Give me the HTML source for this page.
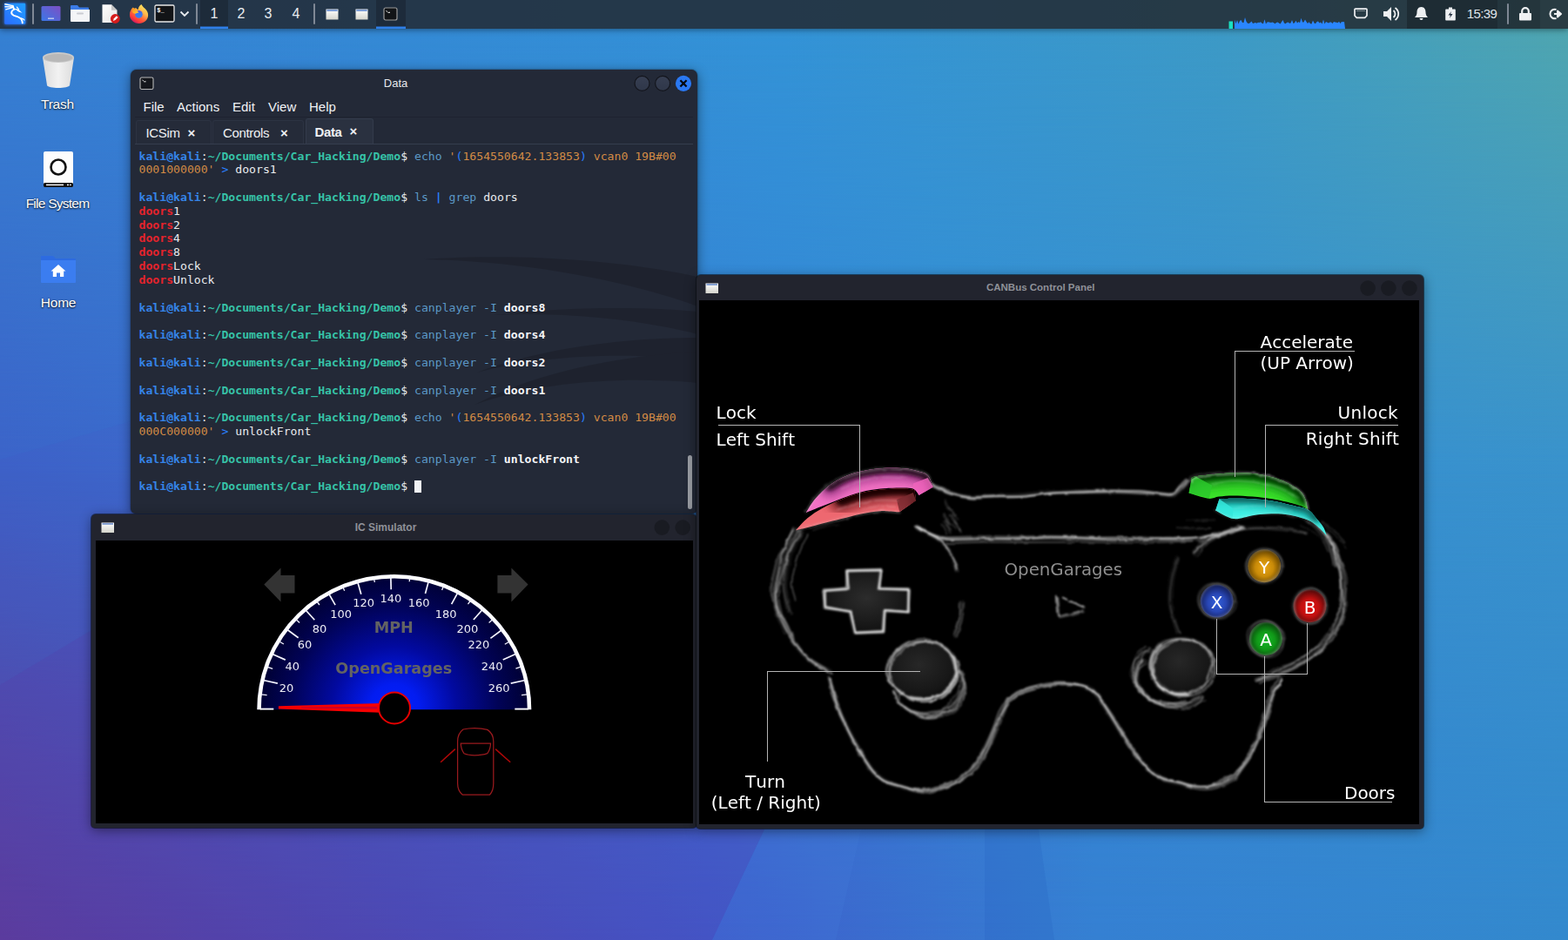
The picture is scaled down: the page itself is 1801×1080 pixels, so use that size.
<!DOCTYPE html>
<html lang="en"><head><meta charset="utf-8"><title>Kali desktop</title>
<style>
html,body{margin:0;padding:0;}
body{width:1801px;height:1080px;overflow:hidden;position:relative;background:#3a7fd0;font-family:"Liberation Sans","DejaVu Sans",sans-serif;}
.abs{position:absolute;}

#wall{position:absolute;left:0;top:0;width:1801px;height:1080px;}
#panel{position:absolute;left:0;top:0;width:1801px;height:33px;background:rgba(33,36,43,0.82);box-shadow:0 1px 7px rgba(0,0,0,.45);}
#panel .sep{position:absolute;top:4px;width:2px;height:24px;background:#7f8895;border-radius:1px;}
#panel .ws{position:absolute;top:0;height:33px;width:32px;color:#e8ecf0;font-size:16px;line-height:32px;text-align:center;}
#panel .act{background:rgba(10,14,22,0.28);box-shadow:inset 0 -2.5px 0 #2f7fe8;}
.dicon{position:absolute;width:130px;text-align:center;color:#fff;font-size:15.5px;letter-spacing:-0.2px;text-shadow:0 1px 2px rgba(0,0,0,.8),0 0 2px rgba(0,0,0,.5);}

#term{position:absolute;left:150px;top:80px;width:651px;height:510px;background:#232937;border-radius:7px 7px 6px 6px;box-shadow:0 3px 14px rgba(0,0,0,.45),0 0 2px rgba(0,0,0,.6);overflow:hidden;}
#term .title{position:absolute;left:0;top:0;width:609px;height:31px;line-height:31px;text-align:center;color:#e6e8ec;font-size:13px;}
#term .menu{position:absolute;top:33px;height:20px;line-height:20px;color:#f0f2f5;font-size:15px;}
#term .tab{position:absolute;top:58px;height:27px;background:#252b39;border:1px solid #2c3342;border-bottom:none;border-radius:3px 3px 0 0;box-sizing:border-box;color:#eef0f3;font-size:15px;letter-spacing:-0.35px;line-height:27px;}
#term .tab.on{top:56px;height:30px;background:#2a3140;border-color:#333b4b;font-weight:bold;font-size:15px;line-height:29px;}
#term .tab span{position:absolute;top:0;}
#term .tx{position:absolute;top:-1px;font-weight:bold;font-size:15px;}
#tt{position:absolute;left:9.5px;top:0;font-family:"DejaVu Sans Mono","Liberation Mono",monospace;font-size:13.15px;color:#e9ebee;white-space:pre;}
#tt div{position:absolute;left:0;height:16px;line-height:16px;}
#tt b{font-weight:bold;}
.cu{color:#3584e8;font-weight:bold}.cp{color:#36c3a7;font-weight:bold}.cc{color:#5b98c6}.cb{color:#2a7fff}.co{color:#d28b45}.cr{color:#e3232c;font-weight:bold}.cw{color:#f4f5f7;font-weight:bold}

.xwin{position:absolute;background:#22242e;border-radius:5px 5px 4px 4px;box-shadow:0 3px 14px rgba(0,0,0,.45),0 0 0 1px rgba(10,12,18,.55);}
.xwin .xt{position:absolute;left:0;top:0;width:100%;text-align:center;color:#8f9198;font-weight:bold;font-size:12px;}

#canlab text{font-family:"DejaVu Sans","Liberation Sans",sans-serif;font-size:20px;fill:#fff;font-kerning:none;}

</style></head><body>

<svg id="wall" viewBox="0 0 1801 1080" preserveAspectRatio="none">
<defs>
<linearGradient id="wg1" x1="0" y1="0" x2="1" y2="0">
<stop offset="0" stop-color="#3581d3"/><stop offset="0.5" stop-color="#3393d7"/><stop offset="0.78" stop-color="#3d9ac6"/><stop offset="1" stop-color="#4fa6b0"/>
</linearGradient>
<linearGradient id="wgm" x1="0" y1="0" x2="1" y2="0">
<stop offset="0" stop-color="#3c63c8"/><stop offset="0.35" stop-color="#367ad4"/><stop offset="0.6" stop-color="#338cd6"/><stop offset="1" stop-color="#3992cc"/>
</linearGradient>
<linearGradient id="wg2" x1="0" y1="0" x2="1" y2="0">
<stop offset="0" stop-color="#5c3e9b"/><stop offset="0.25" stop-color="#4a4eb6"/><stop offset="0.45" stop-color="#3f5ccb"/><stop offset="0.7" stop-color="#3580d2"/><stop offset="1" stop-color="#3389cd"/>
</linearGradient>
<linearGradient id="wm1" x1="0" y1="0" x2="0" y2="1">
<stop offset="0.03" stop-color="#fff" stop-opacity="0"/><stop offset="0.5" stop-color="#fff" stop-opacity="1"/><stop offset="1" stop-color="#fff" stop-opacity="1"/>
</linearGradient>
<linearGradient id="wm2" x1="0" y1="0" x2="0" y2="1">
<stop offset="0.5" stop-color="#fff" stop-opacity="0"/><stop offset="0.75" stop-color="#fff" stop-opacity="0.55"/><stop offset="1" stop-color="#fff" stop-opacity="1"/>
</linearGradient>
<mask id="wmask1"><rect width="1801" height="1080" fill="url(#wm1)"/></mask>
<mask id="wmask2"><rect width="1801" height="1080" fill="url(#wm2)"/></mask>
</defs>
<rect width="1801" height="1080" fill="url(#wg1)"/>
<rect width="1801" height="1080" fill="url(#wgm)" mask="url(#wmask1)"/>
<rect width="1801" height="1080" fill="url(#wg2)" mask="url(#wmask2)"/>
<polygon points="0,528 160,481 160,691 0,787" fill="#4a4cc4" opacity="0.10"/>
<polygon points="0,787 105,724 878,953 818,1080 0,1080" fill="#5a34a8" opacity="0.20"/>
<polygon points="878,953 989,953 960,1080 818,1080" fill="#4a90f0" opacity="0.10"/>
<polygon points="1131,953 1193,953 1211,1080 1131,1080" fill="#1a50b0" opacity="0.13"/>
</svg>

<div id="panel"><svg class="abs" style="left:0;top:0" width="36" height="33" viewBox="0 0 36 33">
<defs><linearGradient id="kg" x1="1" y1="0" x2="0" y2="1"><stop offset="0" stop-color="#1f9fff"/><stop offset="1" stop-color="#2a6cff"/></linearGradient>
<filter id="kglow" x="-30%" y="-30%" width="160%" height="160%"><feGaussianBlur stdDeviation="1.6"/></filter></defs>
<rect x="4.500" y="3" width="25.500" height="25.500" rx="2" fill="#2a78ff" opacity="0.75" filter="url(#kglow)"/>
<rect x="5.200" y="3.800" width="24" height="24" rx="1.200" fill="url(#kg)"/>
<g fill="none" stroke="#fff" stroke-linecap="round">
<path d="M14.800 6.800 C15.300 9 15.500 10 16.600 10.600 C12.800 12 11.800 15.800 15.600 17.600 C19.500 19.200 23.500 19.600 25 23 C25.700 24.800 25.800 26 25.800 26.400" stroke-width="1.900"/>
<path d="M5.800 4.800 L14.500 6.600 M6 7.700 L14.200 7.900 M6.800 10.900 L14.600 8.600" stroke-width="1.400"/>
<path d="M19.400 8.200 L21.600 10.800" stroke-width="1.300"/>
<path d="M24 20.800 C26 21.200 27.400 22 27.900 23" stroke-width="1.300"/>
</g>
<path d="M16.400 10 C19 9.600 21 10.400 22.600 12 C23.600 13 24.600 14 25.700 14.700 C23 14.600 20.500 13.400 18.800 11.600Z" fill="#fff"/>
</svg><div class="sep" style="left:36.9px"></div><svg class="abs" style="left:47px;top:6px" width="23" height="19" viewBox="0 0 23 19">
<defs><linearGradient id="dg" x1="0" y1="1" x2="1" y2="0"><stop offset="0" stop-color="#3a78e8"/><stop offset="1" stop-color="#7d4fc4"/></linearGradient></defs>
<rect x="0.5" y="1" width="22" height="17" rx="1.5" fill="url(#dg)"/><rect x="8" y="14.5" width="7" height="1.5" fill="#b9c4ee"/></svg><svg class="abs" style="left:80px;top:5px" width="24" height="21" viewBox="0 0 24 21">
<path d="M2 1 h7 l2 2.5 h10 a1 1 0 0 1 1 1 V8 H1 V2 a1 1 0 0 1 1-1z" fill="#3b7be6"/>
<path d="M1 6 h22 v13 a1 1 0 0 1 -1 1 H2 a1 1 0 0 1 -1 -1z" fill="#f4f5f7"/>
<rect x="8" y="9.5" width="8" height="2" rx="1" fill="#c9ccd2"/></svg><svg class="abs" style="left:115px;top:4px" width="24" height="24" viewBox="0 0 24 24">
<defs><linearGradient id="pg" x1="0" y1="0" x2="1" y2="1"><stop offset="0" stop-color="#ffffff"/><stop offset="1" stop-color="#e4e4e4"/></linearGradient></defs>
<path d="M2.500 1.300 h10.500 l6.500 6.500 v14.200 H2.500z" fill="url(#pg)"/><path d="M13 1.300 l6.500 6.500 h-6.500z" fill="#c4c4c4"/>
<circle cx="17.300" cy="17.500" r="5.400" fill="#d61c1c"/><path d="M14.900 19.900 l1 -2.600 3 -3 1.600 1.600 -3 3z" fill="#fff"/></svg><svg class="abs" style="left:144px;top:0" width="32" height="33" viewBox="144 0 32 33">
<defs><linearGradient id="fg" x1="0.85" y1="0.1" x2="0.3" y2="0.95"><stop offset="0" stop-color="#ffe45e"/><stop offset="0.35" stop-color="#ffb84a"/><stop offset="0.62" stop-color="#ff6a3c"/><stop offset="0.85" stop-color="#ff3a3c"/><stop offset="1" stop-color="#d4205c"/></linearGradient>
<linearGradient id="fh" x1="0" y1="0" x2="1" y2="1"><stop offset="0" stop-color="#ff8a1a"/><stop offset="1" stop-color="#ffd034"/></linearGradient>
<linearGradient id="fb" x1="0.5" y1="0" x2="0.5" y2="1"><stop offset="0" stop-color="#6a4ed0"/><stop offset="0.35" stop-color="#3a74f0"/><stop offset="1" stop-color="#3a80f0"/></linearGradient></defs>
<path d="M152.300 8.700 C153.300 8.600 153.800 9.300 154.300 9.900 C154.800 9.300 155.500 9 156.300 9.300 C156.800 10 157.500 10.800 158.600 11.300 C158.800 9 160 6.500 162.400 5 C163.300 7 164.800 8.200 166.500 9.800 C169.200 12.300 170.300 15 170.100 18 C169.600 23.300 165 27 159.500 27 C153.700 27 149 22.600 149 17 C149 13.600 150.300 10.800 152.300 8.700Z" fill="url(#fg)"/>
<circle cx="159.500" cy="16.400" r="4.300" fill="url(#fb)"/>
<path d="M152.300 9 C154 9.200 156 10.600 157.300 12 C158.200 13 158.800 13.800 159.400 14.400 C157.500 14.500 156.600 15.300 155.400 15.800 C153.800 15.800 152.600 15 152 13.800 C151.600 12 151.800 10.300 152.300 9Z" fill="url(#fh)"/>
</svg><svg class="abs" style="left:177px;top:5px" width="24" height="21" viewBox="0 0 24 21">
<rect x="1" y="1" width="22" height="19" rx="1.5" fill="#121417" stroke="#e8e8e8" stroke-width="1.3"/>
<text x="3.3" y="9.2" font-family="Liberation Mono, monospace" font-weight="bold" font-size="7" fill="#fff">$_</text></svg><svg class="abs" style="left:206px;top:12px" width="12" height="8" viewBox="0 0 12 8"><path d="M1.5 1.5 L6 6 L10.5 1.5" stroke="#e8ecf0" stroke-width="1.8" fill="none"/></svg><div class="sep" style="left:225px"></div><div class="ws act" style="left:230px">1</div><div class="ws" style="left:261px">2</div><div class="ws" style="left:292px">3</div><div class="ws" style="left:324px">4</div><div class="sep" style="left:359.5px"></div><svg class="abs" style="left:373.5px;top:10px" width="15" height="13" viewBox="0 0 15 13"><defs><linearGradient id="wi373" x1="0" y1="0" x2="0" y2="1"><stop offset="0" stop-color="#ffffff"/><stop offset="1" stop-color="#d6d6ce"/></linearGradient></defs><rect x="0.5" y="0.5" width="14" height="12" fill="url(#wi373)"/><rect x="1.300" y="1.300" width="12.400" height="1.400" fill="#4a78c8"/></svg><svg class="abs" style="left:407.5px;top:10px" width="15" height="13" viewBox="0 0 15 13"><defs><linearGradient id="wi407" x1="0" y1="0" x2="0" y2="1"><stop offset="0" stop-color="#ffffff"/><stop offset="1" stop-color="#d6d6ce"/></linearGradient></defs><rect x="0.5" y="0.5" width="14" height="12" fill="url(#wi407)"/><rect x="1.300" y="1.300" width="12.400" height="1.400" fill="#4a78c8"/></svg><div class="ws act" style="left:432px;width:34px"></div><svg class="abs" style="left:440px;top:8px" width="17" height="16" viewBox="0 0 17 16"><rect x="1" y="1" width="15" height="14" rx="2" fill="#121417" stroke="#9a9a9a" stroke-width="1.2"/><path d="M3.5 4.5 l1.5 1 M5.5 6.3 h2.5" stroke="#fff" stroke-width="1"/></svg><svg class="abs" style="left:0;top:0" width="1801" height="33"><rect x="1411.5" y="24.5" width="4.5" height="8.5" fill="#19e0c0"/><path d="M1418 33 L1418 22.6 L1419.5 27.3 L1421.0 23.1 L1422.5 27.4 L1424.0 24.1 L1425.5 23.0 L1427.0 25.9 L1428.5 26.1 L1430.0 20.1 L1431.5 24.8 L1433.0 26.7 L1434.5 27.0 L1436.0 25.9 L1437.5 24.4 L1439.0 27.0 L1440.5 26.4 L1442.0 26.0 L1443.5 26.8 L1445.0 25.8 L1446.5 26.1 L1448.0 25.3 L1449.5 26.8 L1451.0 27.2 L1452.5 22.2 L1454.0 27.4 L1455.5 25.6 L1457.0 25.3 L1458.5 25.8 L1460.0 26.1 L1461.5 25.4 L1463.0 26.3 L1464.5 27.3 L1466.0 25.9 L1467.5 25.4 L1469.0 26.5 L1470.5 27.4 L1472.0 25.3 L1473.5 23.1 L1475.0 26.5 L1476.5 27.3 L1478.0 26.1 L1479.5 25.5 L1481.0 26.8 L1482.5 26.6 L1484.0 22.9 L1485.5 26.9 L1487.0 26.3 L1488.5 23.7 L1490.0 26.6 L1491.5 25.1 L1493.0 26.2 L1494.5 20.7 L1496.0 25.6 L1497.5 25.5 L1499.0 22.5 L1500.5 25.0 L1502.0 27.1 L1503.5 25.3 L1505.0 27.2 L1506.5 27.4 L1508.0 23.5 L1509.5 26.6 L1511.0 27.2 L1512.5 25.0 L1514.0 24.4 L1515.5 26.6 L1517.0 25.4 L1518.5 27.4 L1520.0 22.5 L1521.5 27.4 L1523.0 25.1 L1524.5 25.8 L1526.0 26.6 L1527.5 25.6 L1529.0 25.6 L1530.5 26.9 L1532.0 25.0 L1533.5 25.5 L1535.0 25.7 L1536.5 26.2 L1538.0 24.8 L1539.5 26.9 L1541.0 25.1 L1542.5 25.2 L1544.0 25.1 L1545 33Z" fill="#2a86ff"/></svg><svg class="abs" style="left:1554px;top:8px" width="18" height="15" viewBox="0 0 18 15"><path d="M2.800 2.200 h12.400 a0.800 0.800 0 0 1 .8 .8 v7 l-2.300 2.300 h-9.400 l-2.300 -2.300 v-7 a.8 .8 0 0 1 .8 -.8z" fill="none" stroke="#eef0f2" stroke-width="1.700" stroke-linejoin="round"/><path d="M4.500 4.300 h9" stroke="#eef0f2" stroke-width="1" stroke-dasharray="1 1"/></svg><svg class="abs" style="left:1588px;top:7px" width="20" height="18" viewBox="0 0 20 18"><path d="M1 6 h4 l5 -5 v16 l-5 -5 h-4z" fill="#eef0f2"/><path d="M12.5 5 a5 5 0 0 1 0 8" stroke="#eef0f2" stroke-width="1.8" fill="none"/><path d="M14.5 2 a8.5 8.5 0 0 1 0 14" stroke="#eef0f2" stroke-width="1.8" fill="none"/></svg><div class="abs" style="left:1616px;top:0;width:104px;height:33px;background:rgba(8,12,20,0.32)"></div><div class="abs" style="left:1720px;top:0;width:49px;height:33px;background:rgba(8,12,20,0.14)"></div><svg class="abs" style="left:1624px;top:7px" width="17" height="17" viewBox="0 0 17 17"><path d="M8.5 1 C12 1 13.5 4 13.5 7 C13.5 10 14.5 11.5 16 13 H1 C2.5 11.5 3.5 10 3.5 7 C3.5 4 5 1 8.5 1Z" fill="#eef0f2"/><path d="M6.5 14 a2 2 0 0 0 4 0z" fill="#eef0f2"/></svg><svg class="abs" style="left:1660px;top:8px" width="12" height="16" viewBox="0 0 12 16"><path d="M4 0.5 h4 v2 h3 a0.8 0.8 0 0 1 .8 .8 v11.4 a.8 .8 0 0 1 -.8 .8 h-10 a.8 .8 0 0 1 -.8 -.8 V3.3 a.8 .8 0 0 1 .8 -.8 h3z" fill="#eef0f2"/><path d="M7 5 L3.5 9.5 H6 L5 13 L8.5 8 H6z" fill="#1f2b3b"/></svg><div class="abs" style="left:1683px;top:0;width:38px;height:33px;line-height:32px;font-size:15px;color:#dfe3e8;text-align:center;letter-spacing:-0.6px">15:39</div><div class="sep" style="left:1731px"></div><svg class="abs" style="left:1744px;top:8px" width="16" height="16" viewBox="0 0 16 16"><rect x="1" y="7" width="14" height="8.5" rx="1" fill="#eef0f2"/><path d="M4.2 7 V5 a3.8 3.8 0 0 1 7.6 0 V7" stroke="#eef0f2" stroke-width="2.2" fill="none"/></svg><svg class="abs" style="left:1778px;top:8px" width="17" height="16" viewBox="0 0 17 16"><path d="M9.5 3 A5.3 5.3 0 1 0 9.5 13" stroke="#eef0f2" stroke-width="2" fill="none"/><path d="M7 8 h6 M11 4.5 L15 8 L11 11.5z" stroke="#eef0f2" stroke-width="2" fill="#eef0f2" stroke-linejoin="round"/></svg></div>
<svg class="abs" style="left:47px;top:58px" width="40" height="46" viewBox="0 0 40 46">
<defs><linearGradient id="tg" x1="0" y1="0" x2="1" y2="0"><stop offset="0" stop-color="#dcdcdc"/><stop offset="0.5" stop-color="#f2f2f2"/><stop offset="1" stop-color="#dcdcdc"/></linearGradient></defs>
<path d="M2 8 L7 40 C8 44 32 44 33 40 L38 8 Z" fill="url(#tg)"/><ellipse cx="20" cy="8" rx="18" ry="6" fill="#c9c9c9"/><ellipse cx="20" cy="8.5" rx="16" ry="4.6" fill="#b8b8b8"/></svg><div class="dicon" style="left:1px;top:111px">Trash</div><svg class="abs" style="left:49px;top:173px" width="36" height="44" viewBox="0 0 36 44">
<rect x="1" y="1" width="34" height="41" rx="2" fill="#fdfdfd"/><rect x="1" y="37" width="34" height="5" rx="1.5" fill="#111"/>
<circle cx="18" cy="19" r="8.5" fill="none" stroke="#111" stroke-width="2.6"/><rect x="4" y="38.6" width="20" height="1.6" fill="#eee"/><rect x="28" y="38.6" width="2" height="1.6" fill="#eee"/><rect x="31" y="38.6" width="1.6" height="1.6" fill="#eee"/></svg><div class="dicon" style="left:1px;top:225px;letter-spacing:-0.75px">File System</div><svg class="abs" style="left:46px;top:292px" width="42" height="34" viewBox="0 0 42 34">
<path d="M1 2 h14 l3 3 h22 a1 1 0 0 1 1 1 v6 H1z" fill="#2d6be0"/><path d="M1 7 h40 v25 a1 1 0 0 1 -1 1 H2 a1 1 0 0 1 -1 -1z" fill="#3b7df0"/>
<path d="M21 12 l8.5 7.5 h-2.3 v6.5 h-4.2 v-4.5 h-4 v4.5 h-4.200 v-6.500 h-2.300z" fill="#fff"/></svg><div class="dicon" style="left:2px;top:339px">Home</div>
<div id="term"><svg class="abs" style="left:0;top:0" width="651" height="511" viewBox="150 80 651 511">
<g fill="#1d202b" opacity="0.7">
<path d="M487 298 C600 290 720 300 801 318 L801 352 C720 322 600 300 487 298Z"/>
<path d="M567 362 C650 352 740 352 801 358 L801 384 C740 368 650 358 567 362Z"/>
<path d="M548 428 C620 400 720 388 801 388 L801 414 C720 404 620 408 548 428Z"/>
<path d="M545 465 C620 425 720 408 801 404 L801 440 C720 432 620 438 545 465Z"/>
</g></svg><svg class="abs" style="left:10px;top:8px" width="17" height="16" viewBox="0 0 17 16"><rect x="1" y="1" width="15" height="13.500" rx="1.8" fill="#15171c" stroke="#b8b8b8" stroke-width="1.1"/><path d="M3.5 4 l1.3 0.900 M5.300 5.800 h2.200" stroke="#fff" stroke-width="1"/></svg><div class="title">Data</div><svg class="abs" style="left:577px;top:6px" width="70" height="20" viewBox="727 86 70 20">
<defs><linearGradient id="tbg" x1="0" y1="0" x2="0" y2="1"><stop offset="0" stop-color="#373f52"/><stop offset="1" stop-color="#2f3749"/></linearGradient></defs>
<circle cx="737.5" cy="95.9" r="8.500" fill="url(#tbg)" stroke="#13151c" stroke-width="1.200"/><circle cx="761.1" cy="95.9" r="8.500" fill="url(#tbg)" stroke="#13151c" stroke-width="1.200"/>
<circle cx="785" cy="95.9" r="9.100" fill="#2a78f2"/><path d="M781.400 92.300 l7.200 7.200 M788.600 92.300 l-7.200 7.200" stroke="#06080c" stroke-width="2.300"/></svg><div class="menu" style="left:14.5px">File</div><div class="menu" style="left:53px">Actions</div><div class="menu" style="left:117px">Edit</div><div class="menu" style="left:158px">View</div><div class="menu" style="left:205px">Help</div><div class="tab" style="left:5.5px;width:87px"><span style="left:11px">ICSim</span><span class="tx" style="left:59px">×</span></div><div class="tab" style="left:94px;width:105px"><span style="left:11px">Controls</span><span class="tx" style="left:77px">×</span></div><div class="tab on" style="left:200.500px;width:78px"><span style="left:10px">Data</span><span class="tx" style="left:50px;top:-1px">×</span></div><div class="abs" style="left:5px;top:84.500px;width:641px;height:1.500px;background:#353d4e"></div><div class="abs" style="left:5px;top:54px;width:641px;height:1px;background:#1e2330"></div><div id="tt"><div style="top:91.50px"><span class="cu">kali@kali</span>:<span class="cp">~/Documents/Car_Hacking/Demo</span>$ <span class="cc">echo</span> <span class="co">'</span><span class="cb">(</span><span class="co">1654550642.133853</span><span class="cb">)</span><span class="co"> vcan0 19B#00</span></div><div style="top:107.33px"><span class="co">0001000000'</span> <span class="cb">&gt;</span> doors1</div><div style="top:138.99px"><span class="cu">kali@kali</span>:<span class="cp">~/Documents/Car_Hacking/Demo</span>$ <span class="cc">ls</span> <span class="cb"><b>|</b></span> <span class="cc">grep</span> doors</div><div style="top:154.82px"><span class="cr">doors</span>1</div><div style="top:170.65px"><span class="cr">doors</span>2</div><div style="top:186.48px"><span class="cr">doors</span>4</div><div style="top:202.31px"><span class="cr">doors</span>8</div><div style="top:218.14px"><span class="cr">doors</span>Lock</div><div style="top:233.97px"><span class="cr">doors</span>Unlock</div><div style="top:265.63px"><span class="cu">kali@kali</span>:<span class="cp">~/Documents/Car_Hacking/Demo</span>$ <span class="cc">canplayer -I</span> <span class="cw">doors8</span></div><div style="top:297.29px"><span class="cu">kali@kali</span>:<span class="cp">~/Documents/Car_Hacking/Demo</span>$ <span class="cc">canplayer -I</span> <span class="cw">doors4</span></div><div style="top:328.95px"><span class="cu">kali@kali</span>:<span class="cp">~/Documents/Car_Hacking/Demo</span>$ <span class="cc">canplayer -I</span> <span class="cw">doors2</span></div><div style="top:360.61px"><span class="cu">kali@kali</span>:<span class="cp">~/Documents/Car_Hacking/Demo</span>$ <span class="cc">canplayer -I</span> <span class="cw">doors1</span></div><div style="top:392.27px"><span class="cu">kali@kali</span>:<span class="cp">~/Documents/Car_Hacking/Demo</span>$ <span class="cc">echo</span> <span class="co">'</span><span class="cb">(</span><span class="co">1654550642.133853</span><span class="cb">)</span><span class="co"> vcan0 19B#00</span></div><div style="top:408.10px"><span class="co">000C000000'</span> <span class="cb">&gt;</span> unlockFront</div><div style="top:439.76px"><span class="cu">kali@kali</span>:<span class="cp">~/Documents/Car_Hacking/Demo</span>$ <span class="cc">canplayer -I</span> <span class="cw">unlockFront</span></div><div style="top:471.42px"><span class="cu">kali@kali</span>:<span class="cp">~/Documents/Car_Hacking/Demo</span>$ <span style="display:inline-block;width:8px;height:14px;background:#f2f3f5;vertical-align:-2.5px"></span></div></div><div class="abs" style="left:639.5px;top:443px;width:5.500px;height:62px;border-radius:3px;background:#9a9da4"></div></div>
<div class="xwin" style="left:105px;top:590.5px;width:695px;height:360.500px"><div class="xt" style="height:30px;line-height:30px;left:-9.5px">IC Simulator</div><svg class="abs" style="left:11px;top:9.5px" width="16" height="13" viewBox="0 0 16 13"><defs><linearGradient id="wig" x1="0" y1="0" x2="0" y2="1"><stop offset="0" stop-color="#ffffff"/><stop offset="1" stop-color="#d4d4cc"/></linearGradient></defs><rect x="0.5" y="0.5" width="14.500" height="11.500" fill="url(#wig)"/><rect x="1.500" y="1.300" width="12.500" height="1.300" fill="#4a74c0"/></svg><svg class="abs" style="left:644px;top:4px" width="50" height="22" viewBox="749 594.5 50 22"><circle cx="760.3" cy="605.6" r="8.800" fill="#191b22"/><circle cx="784.2" cy="605.6" r="8.800" fill="#191b22"/></svg><div class="abs" style="left:5px;top:30.800px;width:686px;height:324.500px;background:#000"></div></div><svg class="abs" style="left:110px;top:621px;opacity:0.999" width="686" height="325" viewBox="110 621 686 325"><defs><radialGradient id="spg" gradientUnits="userSpaceOnUse" cx="452.8" cy="814.3" r="158"><stop offset="0" stop-color="#0420ff"/><stop offset="0.18" stop-color="#031cf0"/><stop offset="0.45" stop-color="#020aa0"/><stop offset="0.75" stop-color="#010358"/><stop offset="1" stop-color="#000030"/></radialGradient></defs><path d="M295.3 815.3 A157.5 155.4 0 0 1 610.3 815.3 Z" fill="url(#spg)"/><path d="M297.55 815.3 A155.25 153.15 0 0 1 608.05 815.3" fill="none" stroke="#fff" stroke-width="4.5"/><line x1="298.8" y1="814.6" x2="314.3" y2="814.6" stroke="#fff" stroke-width="1.9"/><line x1="299.7" y1="797.8" x2="306.6" y2="798.6" stroke="#f4f4ff" stroke-width="1.3"/><line x1="302.3" y1="781.5" x2="318.9" y2="785.1" stroke="#f4f4ff" stroke-width="1.7"/><line x1="306.5" y1="766.1" x2="313.2" y2="768.3" stroke="#f4f4ff" stroke-width="1.3"/><line x1="312.3" y1="751.2" x2="327.8" y2="758.1" stroke="#f4f4ff" stroke-width="1.7"/><line x1="319.9" y1="736.5" x2="325.9" y2="740.0" stroke="#f4f4ff" stroke-width="1.3"/><line x1="329.0" y1="722.7" x2="342.7" y2="732.8" stroke="#f4f4ff" stroke-width="1.7"/><line x1="338.9" y1="710.7" x2="344.1" y2="715.4" stroke="#f4f4ff" stroke-width="1.3"/><line x1="350.0" y1="699.7" x2="361.3" y2="712.3" stroke="#f4f4ff" stroke-width="1.7"/><line x1="362.8" y1="689.3" x2="366.9" y2="695.0" stroke="#f4f4ff" stroke-width="1.3"/><line x1="376.7" y1="680.4" x2="385.1" y2="695.2" stroke="#f4f4ff" stroke-width="1.7"/><line x1="393.0" y1="672.4" x2="395.7" y2="678.8" stroke="#f4f4ff" stroke-width="1.3"/><line x1="410.1" y1="666.3" x2="414.8" y2="682.7" stroke="#f4f4ff" stroke-width="1.7"/><line x1="429.2" y1="662.1" x2="430.3" y2="669.0" stroke="#f4f4ff" stroke-width="1.3"/><line x1="448.8" y1="660.4" x2="449.2" y2="677.3" stroke="#f4f4ff" stroke-width="1.7"/><line x1="471.0" y1="661.4" x2="470.2" y2="668.3" stroke="#f4f4ff" stroke-width="1.3"/><line x1="492.9" y1="665.6" x2="488.5" y2="682.0" stroke="#f4f4ff" stroke-width="1.7"/><line x1="510.2" y1="671.4" x2="507.6" y2="677.9" stroke="#f4f4ff" stroke-width="1.3"/><line x1="526.8" y1="679.2" x2="518.6" y2="694.1" stroke="#f4f4ff" stroke-width="1.7"/><line x1="541.6" y1="688.5" x2="537.5" y2="694.2" stroke="#f4f4ff" stroke-width="1.3"/><line x1="555.2" y1="699.3" x2="543.9" y2="712.0" stroke="#f4f4ff" stroke-width="1.7"/><line x1="566.8" y1="710.8" x2="561.6" y2="715.5" stroke="#f4f4ff" stroke-width="1.3"/><line x1="577.1" y1="723.3" x2="563.4" y2="733.4" stroke="#f4f4ff" stroke-width="1.7"/><line x1="585.8" y1="736.7" x2="579.8" y2="740.2" stroke="#f4f4ff" stroke-width="1.3"/><line x1="593.2" y1="750.9" x2="577.7" y2="757.9" stroke="#f4f4ff" stroke-width="1.7"/><line x1="599.0" y1="765.9" x2="592.4" y2="768.1" stroke="#f4f4ff" stroke-width="1.3"/><line x1="603.3" y1="781.5" x2="586.7" y2="785.1" stroke="#f4f4ff" stroke-width="1.7"/><line x1="605.9" y1="797.8" x2="599.0" y2="798.6" stroke="#f4f4ff" stroke-width="1.3"/><line x1="606.8" y1="814.6" x2="591.3" y2="814.6" stroke="#fff" stroke-width="1.9"/><g font-family="DejaVu Sans, Liberation Sans, sans-serif" font-size="13" fill="#ececf4" text-anchor="middle"><text x="328.9" y="794.7">20</text><text x="335.7" y="769.9">40</text><text x="350.0" y="745.1">60</text><text x="366.9" y="726.6">80</text><text x="391.7" y="709.9">100</text><text x="417.7" y="696.9">120</text><text x="448.9" y="691.8">140</text><text x="481.1" y="696.8">160</text><text x="512.1" y="709.8">180</text><text x="537.0" y="726.6">200</text><text x="549.9" y="745.2">220</text><text x="565.1" y="769.8">240</text><text x="573.2" y="794.7">260</text></g><g font-family="DejaVu Sans, Liberation Sans, sans-serif" font-weight="bold" font-size="17.600" fill="#636363" text-anchor="middle"><text x="452.3" y="727.3">MPH</text><text x="452.3" y="773.8">OpenGarages</text></g><path d="M319.9 811.2 L437 808 L437 818.8 L319.9 814.6Z" fill="#f80000"/><path d="M346 812.5 L433 811.800 L433 814.600 L346 813.500Z" fill="#b00040" opacity="0.75"/><circle cx="453" cy="813.4" r="18" fill="#000" stroke="#e80000" stroke-width="2"/><path d="M303.3 671.5 L322.5 652.5 V661 H338.500 V681.500 H322.500 V691.500Z" fill="#333"/><path d="M606.6 671.5 L587.4 652.5 V661 H571.400 V681.500 H587.400 V691.500Z" fill="#333"/><g fill="none" stroke="#9a1a1e" stroke-width="1.250">
<path d="M532 838 C537 836.8 541 836.5 545 836.5 C550 836.5 555 837 559.8 838.4 C564 841 566.8 846 566.8 852 V900 C566.8 906 565 910.5 562.6 913 H531.1 C528 910.5 525.600 906 525.600 900 V852 C525.600 846 528 841 532 838Z"/>
<path d="M529.3 854.2 H563.5 C563.5 858.500 562 862.500 559.800 865.700 C555 867.500 550 867.800 545 867.800 C540 867.800 537 867.500 533 865.700 C530.800 862.500 529.300 858.500 529.300 854.200Z"/>
</g><path d="M522.8 860.6 L506.1 875.7 M569.1 860.6 L586.2 875.7" stroke="#b00808" stroke-width="1.500" fill="none"/></svg>
<div class="xwin" style="left:800px;top:315.5px;width:834.5px;height:636px"><div class="xt" style="height:30px;line-height:29px;font-size:11.5px;left:-22px">CANBus Control Panel</div><svg class="abs" style="left:9.5px;top:9px" width="16" height="13" viewBox="0 0 16 13"><defs><linearGradient id="wig2" x1="0" y1="0" x2="0" y2="1"><stop offset="0" stop-color="#ffffff"/><stop offset="1" stop-color="#d4d4cc"/></linearGradient></defs><rect x="0.5" y="0.5" width="14.500" height="11.500" fill="url(#wig2)"/><rect x="1.500" y="1.300" width="12.500" height="1.300" fill="#4a74c0"/></svg><svg class="abs" style="left:760px;top:4px" width="72" height="22" viewBox="1560 319.500 72 22"><circle cx="1571.1" cy="330.6" r="8.800" fill="#191b22"/><circle cx="1594.9" cy="330.6" r="8.800" fill="#191b22"/><circle cx="1618.9" cy="330.6" r="8.800" fill="#191b22"/></svg><div class="abs" style="left:3px;top:29.800px;width:827px;height:602px;background:#000"></div></div><svg class="abs" style="left:803px;top:345px;opacity:0.999" width="827" height="602" viewBox="803 345 827 602"><defs>
<filter id="rough" x="-5%" y="-5%" width="110%" height="110%"><feTurbulence type="fractalNoise" baseFrequency="0.09" numOctaves="2" seed="3" result="n"/><feDisplacementMap in="SourceGraphic" in2="n" scale="3.5" xChannelSelector="R" yChannelSelector="G"/></filter>
<filter id="soft"><feGaussianBlur stdDeviation="0.85"/></filter>
<radialGradient id="gstick" cx="0.45" cy="0.4" r="0.65"><stop offset="0" stop-color="#272727"/><stop offset="0.7" stop-color="#171717"/><stop offset="1" stop-color="#0a0a0a"/></radialGradient>
<radialGradient id="gpad" cx="0.5" cy="0.45" r="0.6"><stop offset="0" stop-color="#2c2c2c"/><stop offset="0.6" stop-color="#1b1b1b"/><stop offset="1" stop-color="#0e0e0e"/></radialGradient>
<radialGradient id="gY" cx="0.5" cy="0.55" r="0.55"><stop offset="0" stop-color="#eaa614"/><stop offset="0.5" stop-color="#c88a08"/><stop offset="0.85" stop-color="#7a5200"/><stop offset="1" stop-color="#4a3200"/></radialGradient>
<radialGradient id="gX" cx="0.5" cy="0.55" r="0.55"><stop offset="0" stop-color="#3260dc"/><stop offset="0.5" stop-color="#2846b4"/><stop offset="0.85" stop-color="#182870"/><stop offset="1" stop-color="#0e1848"/></radialGradient>
<radialGradient id="gB" cx="0.5" cy="0.55" r="0.55"><stop offset="0" stop-color="#e60c0c"/><stop offset="0.5" stop-color="#c01010"/><stop offset="0.85" stop-color="#6c0a0a"/><stop offset="1" stop-color="#400606"/></radialGradient>
<radialGradient id="gA" cx="0.5" cy="0.55" r="0.55"><stop offset="0" stop-color="#14b826"/><stop offset="0.5" stop-color="#109818"/><stop offset="0.85" stop-color="#0a5a0e"/><stop offset="1" stop-color="#063a08"/></radialGradient>
<linearGradient id="gpink" x1="0" y1="0" x2="0" y2="1"><stop offset="0" stop-color="#8a2a70"/><stop offset="0.45" stop-color="#d050a8"/><stop offset="1" stop-color="#ee6cc0"/></linearGradient>
<linearGradient id="gred" x1="0" y1="0" x2="0" y2="1"><stop offset="0" stop-color="#3a0c10"/><stop offset="0.45" stop-color="#a83038"/><stop offset="1" stop-color="#e86068"/></linearGradient>
<linearGradient id="ggreen" x1="0" y1="0" x2="0" y2="1"><stop offset="0" stop-color="#0a7a0a"/><stop offset="0.5" stop-color="#18c018"/><stop offset="1" stop-color="#30e030"/></linearGradient>
<linearGradient id="gcyan" x1="0" y1="0" x2="0" y2="1"><stop offset="0" stop-color="#10a8a0"/><stop offset="0.6" stop-color="#20d8d0"/><stop offset="1" stop-color="#40f0e8"/></linearGradient>
</defs><g filter="url(#soft)"><g filter="url(#rough)"><path d="M914.0 609.0C912.2 612.2 906.0 621.3 903.0 628.0C900.0 634.7 898.2 640.3 896.0 649.0C893.8 657.7 890.5 671.5 890.0 680.0C889.5 688.5 891.5 694.7 893.0 700.0C894.5 705.3 895.8 705.7 899.0 712.0C902.2 718.3 906.8 730.3 912.0 738.0C917.2 745.7 923.0 752.3 930.0 758.0C937.0 763.7 950.0 769.7 954.0 772.0" fill="none" stroke="#d8d8d8" stroke-width="5.71" stroke-opacity="0.10" stroke-linecap="round"/><path d="M910.8 608.2C909.2 611.4 904.1 621.0 900.9 627.4C897.7 633.8 894.3 638.4 891.7 646.7C889.2 655.0 885.8 668.7 885.5 677.0C885.3 685.3 888.5 690.9 890.2 696.5C891.9 702.1 892.2 704.2 895.6 710.8C898.9 717.3 904.6 727.8 910.2 735.7C915.8 743.6 922.0 751.9 929.0 758.1C935.9 764.2 948.0 770.2 951.8 772.6" fill="none" stroke="#d8d8d8" stroke-width="1.80" stroke-opacity="0.34" stroke-linecap="round"/><path d="M915.3 609.5C913.9 613.0 909.9 623.5 907.3 630.5C904.7 637.6 902.3 643.0 899.6 651.6C897.0 660.2 892.6 674.4 891.4 682.4C890.1 690.5 891.0 695.0 892.1 699.8C893.1 704.5 894.9 704.8 897.9 710.9C900.9 716.9 905.1 728.8 910.1 736.1C915.1 743.4 920.9 748.8 927.7 754.5C934.6 760.1 947.3 767.4 951.3 770.0" fill="none" stroke="#d8d8d8" stroke-width="1.02" stroke-opacity="0.31" stroke-linecap="round"/><path d="M915.9 610.2C914.2 613.5 907.8 622.6 905.4 629.6C903.0 636.6 903.2 643.5 901.3 652.2C899.5 660.9 895.0 673.5 894.4 681.7C893.7 689.9 896.2 695.8 897.4 701.4C898.5 707.1 898.6 709.2 901.4 715.6C904.2 721.9 909.2 732.0 914.1 739.3C919.0 746.6 924.3 754.2 930.9 759.3C937.5 764.5 950.0 768.5 953.8 770.4" fill="none" stroke="#d8d8d8" stroke-width="0.96" stroke-opacity="0.34" stroke-linecap="round"/><path d="M920.1 611.8C918.1 615.0 911.2 624.2 908.0 630.8C904.8 637.4 903.7 643.0 900.9 651.4C898.2 659.7 892.7 672.7 891.5 680.8C890.4 688.9 892.8 694.5 894.0 699.8C895.2 705.1 895.9 706.8 898.5 712.8C901.1 718.7 904.5 728.4 909.4 735.5C914.3 742.6 921.6 750.2 928.1 755.5C934.6 760.9 944.9 765.4 948.2 767.4" fill="none" stroke="#d8d8d8" stroke-width="1.06" stroke-opacity="0.42" stroke-linecap="round"/><path d="M911.3 609.0C909.7 612.2 903.8 622.0 901.2 628.2C898.7 634.5 897.8 637.9 896.0 646.6C894.2 655.3 890.8 671.6 890.4 680.4C890.1 689.3 892.0 694.5 893.8 699.7C895.5 704.9 897.6 705.2 900.9 711.8C904.3 718.4 908.4 731.1 913.9 739.3C919.3 747.5 926.9 755.2 933.8 760.9C940.8 766.6 951.9 771.5 955.5 773.6" fill="none" stroke="#d8d8d8" stroke-width="1.15" stroke-opacity="0.50" stroke-linecap="round"/><path d="M911.4 605.8C909.9 609.3 904.6 619.7 902.1 626.9C899.6 634.0 898.6 639.9 896.5 648.8C894.4 657.7 889.8 671.1 889.4 680.1C888.9 689.1 891.3 697.1 893.7 703.0C896.1 708.9 899.9 709.3 903.5 715.4C907.1 721.4 910.0 731.5 915.3 739.3C920.6 747.1 928.4 756.4 935.2 762.3C942.1 768.1 952.8 772.5 956.3 774.5" fill="none" stroke="#d8d8d8" stroke-width="1.01" stroke-opacity="0.46" stroke-linecap="round"/><path d="M922.0 612.0C919.7 616.7 911.2 629.5 908.0 640.0C904.8 650.5 903.0 664.2 903.0 675.0C903.0 685.8 907.2 700.0 908.0 705.0" fill="none" stroke="#d8d8d8" stroke-width="3.93" stroke-opacity="0.07" stroke-linecap="round"/><path d="M919.3 609.4C917.1 614.2 909.6 627.3 906.3 638.0C903.1 648.7 899.9 662.7 900.0 673.6C900.2 684.4 905.9 698.2 907.0 703.1" fill="none" stroke="#d8d8d8" stroke-width="0.91" stroke-opacity="0.38" stroke-linecap="round"/><path d="M918.6 609.6C916.3 614.4 907.9 627.8 904.7 638.2C901.5 648.7 899.4 661.3 899.4 672.2C899.4 683.1 903.6 698.4 904.4 703.6" fill="none" stroke="#d8d8d8" stroke-width="0.83" stroke-opacity="0.36" stroke-linecap="round"/><path d="M920.7 610.0C918.2 615.0 908.8 629.5 905.7 640.2C902.7 650.9 902.0 663.5 902.4 674.4C902.9 685.3 907.6 700.5 908.6 705.7" fill="none" stroke="#d8d8d8" stroke-width="0.80" stroke-opacity="0.20" stroke-linecap="round"/><path d="M927.6 614.2C925.9 618.0 920.2 628.3 917.2 637.1C914.3 645.9 910.6 658.5 909.9 667.0C909.2 675.5 912.6 684.7 913.1 688.2" fill="none" stroke="#d8d8d8" stroke-width="0.73" stroke-opacity="0.24" stroke-linecap="round"/><path d="M928.0 613.6C926.2 617.7 920.2 629.1 917.1 638.3C914.1 647.5 910.1 660.2 909.5 668.9C908.9 677.5 913.0 686.8 913.7 690.3" fill="none" stroke="#d8d8d8" stroke-width="1.31" stroke-opacity="0.31" stroke-linecap="round"/><path d="M919.8 609.2C916.7 614.9 905.8 631.7 901.1 643.1C896.4 654.5 892.7 667.0 891.7 677.5C890.6 687.9 892.1 696.9 894.7 706.1C897.3 715.2 905.2 727.8 907.3 732.1" fill="none" stroke="#d8d8d8" stroke-width="1.12" stroke-opacity="0.32" stroke-linecap="round"/><path d="M921.9 611.7C918.9 616.7 908.5 630.6 904.0 641.7C899.4 652.8 895.6 667.2 894.6 678.1C893.6 688.9 895.5 698.0 897.9 706.8C900.4 715.6 907.4 726.9 909.3 730.9" fill="none" stroke="#d8d8d8" stroke-width="0.80" stroke-opacity="0.30" stroke-linecap="round"/><path d="M917.1 606.9C913.8 612.2 902.0 627.7 897.1 638.8C892.1 649.9 888.6 662.7 887.6 673.7C886.6 684.7 888.6 695.6 891.1 704.9C893.7 714.2 900.8 725.5 902.7 729.6" fill="none" stroke="#d8d8d8" stroke-width="0.84" stroke-opacity="0.26" stroke-linecap="round"/><path d="M933.9 609.0C935.9 608.1 941.5 605.5 946.1 603.7C950.6 601.8 958.6 598.9 961.2 597.9" fill="none" stroke="#d8d8d8" stroke-width="0.75" stroke-opacity="0.18" stroke-linecap="round"/><path d="M933.6 609.5C936.2 608.7 944.0 605.9 949.0 604.7C954.1 603.5 961.5 602.6 964.0 602.2" fill="none" stroke="#d8d8d8" stroke-width="1.09" stroke-opacity="0.14" stroke-linecap="round"/><path d="M952.0 779.0C952.8 782.0 955.2 791.0 957.0 797.0C958.8 803.0 960.2 808.2 963.0 815.0C965.8 821.8 970.3 830.7 974.0 838.0C977.7 845.3 981.5 852.8 985.0 859.0C988.5 865.2 991.8 870.2 995.0 875.0C998.2 879.8 1000.5 884.3 1004.0 888.0C1007.5 891.7 1012.0 894.7 1016.0 897.0C1020.0 899.3 1021.2 900.0 1028.0 902.0C1034.8 904.0 1048.3 908.5 1057.0 909.0C1065.7 909.5 1072.8 907.0 1080.0 905.0C1087.2 903.0 1094.5 900.0 1100.0 897.0C1105.5 894.0 1108.8 891.0 1113.0 887.0C1117.2 883.0 1121.3 878.3 1125.0 873.0C1128.7 867.7 1131.8 861.3 1135.0 855.0C1138.2 848.7 1141.3 841.0 1144.0 835.0C1146.7 829.0 1148.7 823.8 1151.0 819.0C1153.3 814.2 1154.8 809.7 1158.0 806.0C1161.2 802.3 1165.5 799.5 1170.0 797.0C1174.5 794.5 1179.5 792.7 1185.0 791.0C1190.5 789.3 1197.0 788.0 1203.0 787.0C1209.0 786.0 1214.8 785.0 1221.0 785.0C1227.2 785.0 1234.3 785.7 1240.0 787.0C1245.7 788.3 1250.8 789.8 1255.0 793.0C1259.2 796.2 1261.5 801.0 1265.0 806.0C1268.5 811.0 1272.2 817.0 1276.0 823.0C1279.8 829.0 1284.0 835.7 1288.0 842.0C1292.0 848.3 1296.0 855.3 1300.0 861.0C1304.0 866.7 1308.0 871.5 1312.0 876.0C1316.0 880.5 1319.5 884.7 1324.0 888.0C1328.5 891.3 1333.8 894.0 1339.0 896.0C1344.2 898.0 1349.5 898.7 1355.0 900.0C1360.5 901.3 1366.3 903.2 1372.0 904.0C1377.7 904.8 1383.7 905.7 1389.0 905.0C1394.3 904.3 1399.2 902.2 1404.0 900.0C1408.8 897.8 1414.2 895.2 1418.0 892.0C1421.8 888.8 1424.2 885.0 1427.0 881.0C1429.8 877.0 1432.5 872.8 1435.0 868.0C1437.5 863.2 1439.7 857.5 1442.0 852.0C1444.3 846.5 1446.8 841.2 1449.0 835.0C1451.2 828.8 1453.0 821.5 1455.0 815.0C1457.0 808.5 1458.3 802.0 1461.0 796.0C1463.7 790.0 1469.3 781.8 1471.0 779.0" fill="none" stroke="#d8d8d8" stroke-width="5.71" stroke-opacity="0.10" stroke-linecap="round"/><path d="M950.5 776.6C951.2 779.6 952.4 788.7 954.3 794.9C956.2 801.1 958.7 806.5 962.0 813.7C965.3 821.0 970.1 830.6 974.0 838.3C977.8 846.0 981.4 853.5 985.1 859.8C988.7 866.1 992.4 871.0 996.0 876.0C999.7 881.1 1003.4 886.5 1007.0 890.2C1010.6 894.0 1013.8 896.5 1017.7 898.6C1021.6 900.7 1023.1 900.7 1030.1 902.8C1037.2 904.8 1051.4 910.3 1059.9 910.9C1068.4 911.6 1074.4 909.0 1081.3 906.7C1088.1 904.5 1096.0 901.0 1101.1 897.5C1106.2 894.1 1108.1 890.2 1112.1 886.2C1116.0 882.1 1121.4 878.5 1125.0 873.3C1128.5 868.0 1130.6 861.3 1133.5 854.6C1136.3 847.8 1139.6 839.0 1141.9 832.7C1144.3 826.4 1145.3 821.4 1147.6 816.8C1150.0 812.1 1152.8 808.2 1156.2 804.8C1159.7 801.4 1164.1 798.8 1168.5 796.2C1172.9 793.7 1177.2 790.8 1182.7 789.3C1188.2 787.8 1194.8 787.7 1201.3 787.0C1207.8 786.2 1215.2 784.8 1221.8 784.8C1228.5 784.8 1235.2 785.3 1241.2 786.9C1247.2 788.6 1253.1 791.4 1257.6 795.0C1262.2 798.5 1264.7 803.5 1268.3 808.3C1271.9 813.1 1275.6 818.0 1279.4 823.8C1283.2 829.7 1287.1 836.9 1291.1 843.4C1295.0 850.0 1299.2 857.5 1303.1 863.2C1307.0 868.9 1310.8 873.4 1314.3 877.7C1317.9 882.1 1320.3 886.0 1324.3 889.1C1328.2 892.3 1332.9 895.1 1338.0 896.7C1343.1 898.2 1349.2 897.7 1354.7 898.7C1360.1 899.7 1365.6 901.7 1370.8 902.6C1376.1 903.5 1381.2 904.9 1386.2 904.0C1391.2 903.0 1396.0 899.5 1400.8 897.2C1405.6 894.8 1410.7 892.7 1414.8 889.9C1419.0 887.1 1422.6 884.3 1425.6 880.5C1428.7 876.7 1430.5 871.9 1433.1 867.3C1435.7 862.6 1438.5 857.8 1441.2 852.6C1443.9 847.4 1447.0 842.1 1449.4 836.1C1451.8 830.2 1453.2 823.1 1455.4 816.8C1457.5 810.5 1459.3 804.5 1462.3 798.3C1465.2 792.2 1471.2 783.0 1472.9 779.9" fill="none" stroke="#d8d8d8" stroke-width="1.47" stroke-opacity="0.45" stroke-linecap="round"/><path d="M953.9 780.7C954.6 783.6 956.6 792.6 958.0 798.5C959.4 804.4 959.9 809.7 962.5 816.3C965.1 822.9 970.0 831.1 973.6 838.1C977.2 845.1 980.9 852.6 984.0 858.3C987.2 864.1 989.6 868.0 992.6 872.6C995.6 877.2 998.5 882.1 1002.0 886.0C1005.5 890.0 1009.4 893.8 1013.5 896.3C1017.7 898.7 1020.0 898.6 1027.1 900.6C1034.2 902.7 1047.3 907.8 1056.2 908.6C1065.1 909.3 1073.1 906.8 1080.5 905.1C1087.9 903.3 1094.9 900.7 1100.9 898.0C1106.8 895.3 1111.6 892.8 1116.1 888.9C1120.7 885.1 1124.8 880.3 1128.2 874.9C1131.6 869.5 1133.9 863.0 1136.5 856.5C1139.2 849.9 1141.7 841.6 1144.1 835.4C1146.5 829.2 1148.8 824.3 1151.0 819.3C1153.2 814.3 1154.6 809.3 1157.4 805.3C1160.3 801.3 1163.9 797.7 1168.1 795.2C1172.3 792.6 1177.1 792.0 1182.7 790.2C1188.2 788.5 1195.4 785.8 1201.3 784.7C1207.3 783.6 1212.0 783.5 1218.3 783.8C1224.6 784.0 1233.1 784.3 1239.3 786.0C1245.5 787.6 1251.2 790.2 1255.7 793.6C1260.3 797.0 1262.9 801.2 1266.5 806.2C1270.1 811.2 1273.4 817.1 1277.3 823.3C1281.2 829.6 1285.5 837.2 1289.8 843.6C1294.1 850.0 1299.0 856.0 1303.0 861.7C1306.9 867.3 1310.0 872.9 1313.5 877.4C1317.0 882.0 1319.9 886.0 1324.1 888.9C1328.3 891.9 1333.7 893.7 1338.7 895.3C1343.7 896.8 1348.7 896.7 1354.0 898.1C1359.3 899.4 1365.2 902.3 1370.5 903.1C1375.8 904.0 1380.7 903.8 1385.8 903.2C1391.0 902.6 1396.1 901.7 1401.2 899.4C1406.3 897.2 1412.4 893.0 1416.5 890.0C1420.6 887.0 1422.8 884.8 1425.9 881.3C1429.1 877.8 1432.4 873.5 1435.4 869.0C1438.4 864.4 1441.2 859.3 1443.8 854.1C1446.5 848.8 1448.9 843.6 1451.3 837.4C1453.7 831.2 1456.1 823.5 1458.2 816.9C1460.2 810.2 1461.0 803.6 1463.5 797.4C1466.0 791.3 1471.4 782.9 1473.0 780.0" fill="none" stroke="#d8d8d8" stroke-width="2.05" stroke-opacity="0.45" stroke-linecap="round"/><path d="M952.6 779.8C953.3 782.6 955.2 791.4 956.7 797.0C958.2 802.7 959.0 806.9 961.6 813.5C964.2 820.1 968.6 829.1 972.1 836.5C975.7 843.9 979.5 851.8 982.9 857.9C986.3 864.0 989.1 868.3 992.4 873.1C995.7 878.0 999.1 883.4 1002.6 887.2C1006.2 891.0 1009.5 893.5 1013.6 895.8C1017.7 898.1 1020.0 899.0 1027.1 901.1C1034.1 903.2 1047.0 907.8 1056.0 908.5C1064.9 909.2 1073.5 907.0 1081.0 905.3C1088.6 903.6 1095.6 901.2 1101.2 898.3C1106.8 895.4 1110.8 891.7 1114.9 887.7C1118.9 883.6 1121.9 879.0 1125.6 873.9C1129.4 868.8 1133.9 863.3 1137.4 857.0C1140.9 850.7 1144.1 842.2 1146.7 836.1C1149.4 829.9 1151.0 825.2 1153.1 820.2C1155.2 815.2 1156.5 810.0 1159.3 806.2C1162.2 802.4 1165.9 799.9 1170.0 797.3C1174.1 794.7 1178.5 792.4 1184.0 790.6C1189.4 788.8 1196.8 787.4 1202.7 786.3C1208.6 785.2 1213.3 784.1 1219.1 784.1C1224.9 784.1 1232.1 784.9 1237.6 786.1C1243.1 787.4 1247.9 788.6 1252.2 791.5C1256.5 794.4 1259.6 798.8 1263.3 803.7C1267.1 808.7 1270.8 815.0 1274.7 821.1C1278.6 827.2 1282.6 833.7 1286.7 840.2C1290.8 846.7 1294.9 853.9 1299.1 859.9C1303.2 866.0 1307.3 871.7 1311.6 876.5C1315.8 881.3 1319.4 885.6 1324.3 888.9C1329.2 892.2 1335.6 894.4 1340.8 896.3C1346.0 898.1 1350.1 898.4 1355.7 900.1C1361.2 901.7 1368.1 905.2 1373.9 906.3C1379.7 907.4 1385.1 907.4 1390.5 906.6C1395.9 905.8 1401.4 903.6 1406.3 901.5C1411.2 899.4 1416.4 897.4 1419.9 893.9C1423.3 890.4 1424.8 885.0 1427.2 880.6C1429.6 876.2 1432.0 872.2 1434.5 867.4C1437.0 862.6 1439.8 857.3 1441.9 851.9C1444.1 846.4 1445.4 841.2 1447.4 834.7C1449.5 828.3 1452.1 819.9 1454.1 813.3C1456.1 806.7 1457.1 801.1 1459.5 795.3C1461.8 789.5 1466.9 781.2 1468.3 778.4" fill="none" stroke="#d8d8d8" stroke-width="2.14" stroke-opacity="0.28" stroke-linecap="round"/><path d="M953.4 779.1C954.3 782.1 956.8 790.8 958.8 797.0C960.8 803.3 962.6 809.5 965.4 816.7C968.3 823.9 971.8 832.9 975.7 840.3C979.5 847.7 984.9 854.8 988.4 861.1C991.9 867.3 993.6 873.1 996.7 877.7C999.7 882.4 1003.1 885.7 1006.5 889.0C1009.9 892.3 1013.4 895.4 1017.0 897.6C1020.7 899.7 1021.6 899.9 1028.3 901.9C1035.0 903.8 1048.8 908.7 1057.1 909.2C1065.3 909.7 1070.8 907.1 1077.7 904.9C1084.5 902.7 1092.6 899.5 1098.1 896.2C1103.6 892.9 1106.7 889.1 1110.9 885.1C1115.0 881.1 1119.3 877.3 1122.9 872.1C1126.4 867.0 1128.9 860.4 1132.2 854.0C1135.4 847.6 1139.4 839.6 1142.3 833.7C1145.3 827.9 1147.4 823.3 1149.9 818.8C1152.4 814.3 1153.9 810.4 1157.5 806.7C1161.1 803.0 1166.6 799.3 1171.6 796.8C1176.6 794.3 1181.9 793.0 1187.5 791.7C1193.1 790.3 1199.3 789.8 1205.2 788.8C1211.2 787.9 1217.0 786.0 1223.4 785.8C1229.7 785.7 1237.8 786.6 1243.3 788.1C1248.9 789.7 1252.8 791.9 1256.6 795.2C1260.5 798.5 1262.8 803.3 1266.3 807.9C1269.7 812.6 1273.7 817.2 1277.2 823.1C1280.6 828.9 1283.3 836.5 1286.8 842.8C1290.3 849.1 1294.1 855.3 1298.0 860.7C1301.9 866.1 1306.1 870.9 1310.1 875.2C1314.1 879.5 1317.6 883.4 1322.0 886.6C1326.4 889.9 1331.4 892.9 1336.3 894.8C1341.3 896.6 1346.0 896.4 1351.6 897.6C1357.3 898.9 1364.3 901.1 1370.3 902.1C1376.3 903.2 1382.2 904.4 1387.8 904.0C1393.3 903.5 1398.4 901.5 1403.6 899.5C1408.8 897.5 1414.8 895.0 1419.0 892.0C1423.2 888.9 1425.8 885.3 1428.8 881.5C1431.7 877.6 1434.0 873.4 1436.5 868.6C1439.0 863.9 1441.3 858.2 1443.9 853.0C1446.4 847.8 1449.6 843.5 1451.7 837.4C1453.9 831.3 1454.9 822.7 1456.8 816.1C1458.7 809.5 1460.2 803.9 1462.9 797.8C1465.6 791.8 1471.5 782.9 1473.2 779.9" fill="none" stroke="#d8d8d8" stroke-width="1.28" stroke-opacity="0.28" stroke-linecap="round"/><path d="M952.6 780.2C953.5 783.4 956.2 793.1 958.3 799.2C960.3 805.3 962.0 809.8 964.8 816.6C967.5 823.3 971.1 832.4 974.6 839.7C978.1 847.1 982.5 854.5 986.0 860.5C989.5 866.4 992.7 870.8 995.6 875.3C998.6 879.7 1000.6 883.6 1003.8 887.3C1006.9 891.0 1010.6 895.0 1014.4 897.5C1018.3 899.9 1020.0 900.3 1026.8 901.9C1033.6 903.5 1046.7 906.9 1055.3 907.1C1063.9 907.2 1071.5 904.7 1078.6 902.9C1085.6 901.0 1092.1 898.6 1097.6 895.9C1103.0 893.3 1106.8 890.8 1111.0 887.0C1115.3 883.1 1119.1 878.0 1123.0 872.7C1126.9 867.4 1131.1 861.4 1134.5 855.1C1137.8 848.8 1140.4 840.9 1143.2 834.9C1146.0 828.9 1148.5 823.7 1151.3 819.1C1154.0 814.6 1156.4 811.1 1159.6 807.6C1162.9 804.2 1166.4 800.7 1170.9 798.2C1175.4 795.7 1181.0 794.4 1186.8 792.6C1192.6 790.9 1199.8 788.6 1205.7 787.6C1211.5 786.6 1216.2 786.5 1222.1 786.5C1227.9 786.4 1235.2 786.3 1240.7 787.3C1246.2 788.3 1251.0 789.5 1255.1 792.7C1259.2 795.9 1262.0 801.6 1265.4 806.5C1268.8 811.5 1271.8 816.5 1275.5 822.4C1279.2 828.3 1283.9 835.6 1287.8 842.0C1291.7 848.4 1294.9 855.0 1298.8 860.6C1302.7 866.2 1307.4 871.1 1311.4 875.6C1315.4 880.0 1318.1 884.0 1322.6 887.2C1327.0 890.3 1333.0 892.6 1338.2 894.6C1343.4 896.7 1348.0 897.7 1353.5 899.2C1359.1 900.7 1366.0 903.1 1371.6 903.8C1377.2 904.6 1382.0 904.3 1387.3 903.8C1392.6 903.2 1398.2 902.3 1403.4 900.4C1408.5 898.4 1414.5 894.8 1418.5 891.8C1422.4 888.7 1424.0 885.7 1427.1 882.0C1430.1 878.3 1434.0 874.6 1436.7 869.8C1439.5 865.0 1441.4 858.9 1443.6 853.1C1445.8 847.3 1447.7 841.5 1449.8 835.2C1452.0 829.0 1454.5 822.3 1456.5 815.8C1458.5 809.3 1459.2 802.0 1461.9 796.1C1464.7 790.3 1471.2 783.0 1473.0 780.4" fill="none" stroke="#d8d8d8" stroke-width="1.65" stroke-opacity="0.51" stroke-linecap="round"/><path d="M1445.0 782.0C1449.2 780.3 1462.0 775.7 1470.0 772.0C1478.0 768.3 1486.3 763.8 1493.0 760.0C1499.7 756.2 1504.8 753.0 1510.0 749.0C1515.2 745.0 1520.0 740.7 1524.0 736.0C1528.0 731.3 1531.2 726.2 1534.0 721.0C1536.8 715.8 1539.5 711.8 1541.0 705.0C1542.5 698.2 1542.8 687.2 1543.0 680.0C1543.2 672.8 1542.8 668.0 1542.0 662.0C1541.2 656.0 1539.7 649.7 1538.0 644.0C1536.3 638.3 1534.3 633.2 1532.0 628.0C1529.7 622.8 1525.3 615.5 1524.0 613.0" fill="none" stroke="#d8d8d8" stroke-width="5.36" stroke-opacity="0.10" stroke-linecap="round"/><path d="M1443.7 782.7C1448.2 781.2 1462.3 777.0 1471.1 773.3C1479.9 769.6 1489.4 764.3 1496.3 760.6C1503.3 756.9 1507.8 755.2 1512.8 751.2C1517.8 747.2 1522.7 741.4 1526.4 736.5C1530.1 731.6 1532.7 726.7 1535.3 721.7C1537.9 716.7 1541.0 713.4 1542.1 706.5C1543.2 699.5 1542.3 687.5 1541.9 680.1C1541.5 672.7 1540.5 668.3 1539.6 662.1C1538.7 655.8 1538.2 648.5 1536.5 642.4C1534.7 636.4 1531.8 630.6 1529.3 625.7C1526.8 620.7 1522.7 615.0 1521.4 612.9" fill="none" stroke="#d8d8d8" stroke-width="1.34" stroke-opacity="0.39" stroke-linecap="round"/><path d="M1444.5 780.9C1448.9 779.7 1462.3 776.7 1470.9 773.6C1479.5 770.6 1489.0 766.2 1495.9 762.5C1502.8 758.8 1507.0 755.5 1512.4 751.4C1517.8 747.3 1524.3 743.0 1528.4 738.0C1532.5 733.1 1534.5 726.9 1537.0 721.6C1539.5 716.3 1542.7 713.2 1543.5 706.1C1544.3 698.9 1542.3 686.2 1541.8 678.7C1541.2 671.1 1541.5 666.7 1540.2 660.8C1538.9 654.9 1535.6 649.2 1533.9 643.4C1532.2 637.5 1532.2 630.8 1529.9 625.6C1527.6 620.3 1521.6 614.2 1520.0 611.9" fill="none" stroke="#d8d8d8" stroke-width="1.45" stroke-opacity="0.45" stroke-linecap="round"/><path d="M1446.2 781.1C1449.9 779.4 1461.0 774.4 1468.6 770.6C1476.1 766.7 1485.0 761.9 1491.5 758.1C1498.0 754.3 1502.9 751.5 1507.5 747.5C1512.1 743.5 1515.6 738.7 1519.3 734.0C1523.1 729.4 1526.8 724.6 1529.8 719.5C1532.8 714.4 1535.9 710.5 1537.6 703.5C1539.3 696.5 1539.3 684.5 1539.9 677.7C1540.4 670.8 1541.3 668.3 1541.0 662.5C1540.7 656.8 1539.3 648.7 1538.1 643.1C1536.8 637.4 1535.4 633.3 1533.6 628.6C1531.7 623.9 1527.9 617.2 1526.8 615.0" fill="none" stroke="#d8d8d8" stroke-width="1.40" stroke-opacity="0.34" stroke-linecap="round"/><path d="M1447.4 785.0C1451.5 783.3 1463.9 778.7 1472.0 775.1C1480.2 771.4 1489.8 766.9 1496.4 762.8C1502.9 758.8 1506.5 754.8 1511.2 750.5C1516.0 746.3 1521.3 742.7 1524.9 737.3C1528.4 732.0 1530.1 724.2 1532.3 718.5C1534.5 712.8 1536.8 709.9 1538.2 703.3C1539.5 696.6 1540.6 685.9 1540.7 678.7C1540.8 671.5 1539.6 665.8 1538.8 659.9C1537.9 654.0 1537.1 648.5 1535.8 643.2C1534.6 637.9 1533.2 633.0 1531.2 628.1C1529.3 623.2 1525.3 616.1 1524.1 613.7" fill="none" stroke="#d8d8d8" stroke-width="2.01" stroke-opacity="0.34" stroke-linecap="round"/><path d="M1442.2 780.4C1446.1 778.4 1457.6 772.3 1465.6 768.6C1473.6 765.0 1483.0 762.1 1490.2 758.4C1497.5 754.6 1503.7 750.0 1509.1 746.3C1514.5 742.6 1518.0 740.1 1522.7 736.3C1527.3 732.5 1533.3 728.6 1537.0 723.7C1540.7 718.8 1543.5 713.9 1545.0 707.1C1546.5 700.4 1545.6 690.3 1545.9 683.2C1546.2 676.1 1547.7 670.6 1547.0 664.6C1546.2 658.6 1543.9 653.0 1541.4 647.2C1538.9 641.4 1535.0 635.5 1531.9 629.7C1528.8 623.9 1524.2 615.1 1522.7 612.1" fill="none" stroke="#d8d8d8" stroke-width="1.04" stroke-opacity="0.40" stroke-linecap="round"/><path d="M1442.9 782.4C1447.1 780.3 1460.3 774.1 1468.4 769.9C1476.6 765.8 1485.3 761.2 1491.9 757.3C1498.4 753.5 1502.7 750.7 1507.7 746.8C1512.8 742.8 1517.4 737.8 1521.9 733.6C1526.4 729.5 1531.2 726.8 1534.7 722.0C1538.1 717.2 1540.8 711.6 1542.5 704.7C1544.2 697.9 1544.4 687.7 1544.8 680.9C1545.1 674.1 1545.4 670.1 1544.6 664.0C1543.8 658.0 1541.6 650.8 1539.9 644.8C1538.2 638.8 1537.0 633.3 1534.3 628.1C1531.6 622.8 1525.6 615.6 1523.8 613.1" fill="none" stroke="#d8d8d8" stroke-width="1.15" stroke-opacity="0.41" stroke-linecap="round"/><path d="M1500.0 590.0C1502.5 592.5 1510.3 599.2 1515.0 605.0C1519.7 610.8 1524.7 617.5 1528.0 625.0C1531.3 632.5 1533.8 645.8 1535.0 650.0" fill="none" stroke="#d8d8d8" stroke-width="3.57" stroke-opacity="0.07" stroke-linecap="round"/><path d="M1500.2 589.6C1502.1 591.9 1507.4 597.7 1511.6 603.4C1515.8 609.0 1522.3 616.1 1525.6 623.7C1528.9 631.2 1530.3 644.5 1531.2 648.7" fill="none" stroke="#d8d8d8" stroke-width="0.97" stroke-opacity="0.36" stroke-linecap="round"/><path d="M1503.4 593.1C1505.8 595.5 1513.8 602.1 1518.3 607.6C1522.7 613.1 1527.0 619.3 1529.8 626.3C1532.6 633.3 1534.3 645.8 1535.2 649.8" fill="none" stroke="#d8d8d8" stroke-width="1.29" stroke-opacity="0.31" stroke-linecap="round"/><path d="M1504.4 591.2C1506.5 593.9 1513.1 602.1 1517.1 607.7C1521.1 613.3 1525.4 617.5 1528.4 624.8C1531.4 632.1 1534.0 647.1 1535.1 651.5" fill="none" stroke="#d8d8d8" stroke-width="1.00" stroke-opacity="0.36" stroke-linecap="round"/><path d="M1495.9 588.2C1498.7 590.6 1507.9 596.2 1512.8 602.3C1517.6 608.5 1521.5 617.1 1525.0 625.3C1528.5 633.5 1532.2 647.0 1533.6 651.4" fill="none" stroke="#d8d8d8" stroke-width="1.25" stroke-opacity="0.33" stroke-linecap="round"/><path d="M1072.0 558.0C1075.0 559.3 1083.2 563.8 1090.0 566.0C1096.8 568.2 1104.7 570.3 1113.0 571.0C1121.3 571.7 1130.0 570.3 1140.0 570.0C1150.0 569.7 1162.0 569.7 1173.0 569.0C1184.0 568.3 1194.8 566.7 1206.0 566.0C1217.2 565.3 1228.3 565.2 1240.0 565.0C1251.7 564.8 1264.0 564.8 1276.0 565.0C1288.0 565.2 1302.2 565.5 1312.0 566.0C1321.8 566.5 1329.0 567.5 1335.0 568.0C1341.0 568.5 1344.3 570.2 1348.0 569.0C1351.7 567.8 1354.2 563.8 1357.0 561.0C1359.8 558.2 1363.7 553.5 1365.0 552.0" fill="none" stroke="#d8d8d8" stroke-width="5.36" stroke-opacity="0.10" stroke-linecap="round"/><path d="M1071.4 558.3C1074.6 559.7 1083.0 564.4 1090.2 566.9C1097.5 569.3 1106.3 572.0 1115.1 572.8C1123.9 573.7 1132.8 572.2 1142.8 571.9C1152.9 571.6 1165.0 572.2 1175.6 571.2C1186.1 570.2 1195.6 567.1 1206.1 566.1C1216.6 565.1 1227.1 565.5 1238.5 565.2C1249.8 565.0 1262.5 564.7 1274.2 564.4C1286.0 564.1 1299.1 563.0 1309.0 563.5C1318.8 563.9 1327.1 566.4 1333.3 567.2C1339.6 567.9 1342.5 568.8 1346.4 567.9C1350.2 567.1 1353.2 564.4 1356.5 561.9C1359.8 559.4 1364.6 554.5 1366.2 553.1" fill="none" stroke="#d8d8d8" stroke-width="0.98" stroke-opacity="0.49" stroke-linecap="round"/><path d="M1074.2 560.0C1077.2 561.4 1085.3 565.9 1092.0 568.0C1098.8 570.1 1106.5 571.9 1114.7 572.5C1122.9 573.0 1131.4 571.7 1141.3 571.4C1151.2 571.1 1163.5 571.7 1174.2 570.8C1185.0 569.9 1194.8 567.0 1205.7 566.2C1216.6 565.3 1227.9 566.0 1239.5 565.6C1251.1 565.1 1263.6 563.5 1275.4 563.4C1287.2 563.3 1300.7 564.3 1310.4 564.7C1320.1 565.2 1327.7 565.8 1333.6 566.2C1339.5 566.5 1342.1 567.8 1345.6 566.9C1349.0 565.9 1351.4 562.9 1354.5 560.3C1357.5 557.8 1362.2 553.0 1363.8 551.5" fill="none" stroke="#d8d8d8" stroke-width="1.62" stroke-opacity="0.41" stroke-linecap="round"/><path d="M1071.5 558.3C1074.6 559.8 1083.1 565.0 1090.2 567.2C1097.3 569.4 1105.3 570.9 1114.0 571.5C1122.6 572.1 1132.3 571.0 1142.3 570.8C1152.2 570.7 1163.1 571.2 1173.6 570.6C1184.2 570.0 1194.8 568.2 1205.7 567.1C1216.6 566.0 1227.6 564.7 1239.1 564.2C1250.6 563.6 1262.6 563.7 1274.5 563.7C1286.5 563.7 1301.1 563.5 1310.8 564.1C1320.5 564.7 1326.6 566.8 1332.5 567.4C1338.4 568.0 1342.4 569.1 1346.3 567.8C1350.1 566.5 1352.6 562.4 1355.8 559.8C1359.1 557.2 1364.0 553.5 1365.7 552.2" fill="none" stroke="#d8d8d8" stroke-width="1.75" stroke-opacity="0.38" stroke-linecap="round"/><path d="M1070.6 557.9C1073.5 559.2 1081.0 563.6 1088.0 565.7C1095.1 567.8 1104.3 569.7 1113.0 570.5C1121.6 571.4 1129.8 571.0 1139.8 570.7C1149.7 570.5 1161.5 569.9 1172.6 569.3C1183.8 568.6 1195.3 567.4 1206.8 567.0C1218.2 566.6 1229.6 567.0 1241.3 566.7C1252.9 566.4 1264.6 565.3 1276.6 565.2C1288.6 565.1 1303.6 565.5 1313.4 566.1C1323.2 566.7 1329.6 568.4 1335.5 568.9C1341.3 569.3 1344.7 570.2 1348.4 568.9C1352.1 567.6 1355.0 563.8 1357.6 560.9C1360.3 558.0 1363.0 553.2 1364.1 551.6" fill="none" stroke="#d8d8d8" stroke-width="0.98" stroke-opacity="0.44" stroke-linecap="round"/><path d="M1070.4 556.1C1073.5 557.5 1081.8 562.3 1088.8 564.8C1095.9 567.2 1104.1 570.1 1112.8 571.0C1121.5 571.9 1130.7 570.1 1141.0 570.1C1151.4 570.1 1163.7 571.2 1174.9 570.7C1186.1 570.2 1196.9 567.9 1208.2 567.1C1219.6 566.3 1231.4 566.1 1243.1 565.8C1254.7 565.5 1266.8 565.2 1278.2 565.4C1289.7 565.6 1302.4 566.5 1311.9 566.9C1321.3 567.2 1329.2 567.5 1335.0 567.7C1340.8 567.9 1343.3 569.5 1346.6 568.0C1349.8 566.5 1351.8 561.6 1354.4 558.7C1357.0 555.8 1361.0 551.9 1362.3 550.6" fill="none" stroke="#d8d8d8" stroke-width="1.75" stroke-opacity="0.49" stroke-linecap="round"/><path d="M1052.0 606.0C1055.0 607.3 1064.3 611.8 1070.0 614.0C1075.7 616.2 1076.0 618.3 1086.0 619.0C1096.0 619.7 1115.5 618.2 1130.0 618.0C1144.5 617.8 1160.3 618.2 1173.0 618.0C1185.7 617.8 1194.8 617.0 1206.0 617.0C1217.2 617.0 1228.3 617.7 1240.0 618.0C1251.7 618.3 1264.0 618.8 1276.0 619.0C1288.0 619.2 1299.7 619.0 1312.0 619.0C1324.3 619.0 1338.7 619.2 1350.0 619.0C1361.3 618.8 1370.0 619.2 1380.0 618.0C1390.0 616.8 1402.0 614.0 1410.0 612.0C1418.0 610.0 1425.0 607.0 1428.0 606.0" fill="none" stroke="#d8d8d8" stroke-width="5.36" stroke-opacity="0.10" stroke-linecap="round"/><path d="M1049.6 604.6C1052.6 606.0 1061.7 610.7 1067.5 612.9C1073.2 615.0 1073.8 616.6 1084.3 617.4C1094.8 618.3 1115.6 617.5 1130.7 617.8C1145.7 618.0 1161.7 618.8 1174.7 619.0C1187.7 619.2 1197.2 618.9 1208.6 619.1C1220.0 619.2 1231.5 619.9 1243.0 620.1C1254.5 620.3 1266.3 620.3 1277.7 620.3C1289.2 620.3 1299.5 620.5 1311.5 620.1C1323.5 619.7 1338.7 618.5 1349.7 618.0C1360.7 617.5 1368.0 618.4 1377.6 617.1C1387.2 615.8 1399.5 612.1 1407.5 610.2C1415.4 608.2 1422.3 606.2 1425.3 605.4" fill="none" stroke="#d8d8d8" stroke-width="1.54" stroke-opacity="0.36" stroke-linecap="round"/><path d="M1053.4 606.2C1056.4 607.6 1065.5 612.2 1071.1 614.6C1076.7 616.9 1076.9 619.6 1087.0 620.3C1097.0 621.0 1117.2 619.2 1131.4 618.8C1145.7 618.3 1160.4 617.8 1172.7 617.5C1185.0 617.2 1194.1 617.2 1205.2 617.1C1216.4 617.1 1228.0 616.9 1239.6 617.1C1251.3 617.3 1263.4 618.1 1275.2 618.2C1287.0 618.3 1298.3 617.8 1310.6 617.7C1323.0 617.6 1337.9 617.6 1349.3 617.5C1360.7 617.4 1369.0 618.0 1379.1 617.0C1389.2 616.1 1401.8 613.7 1410.1 611.8C1418.3 609.9 1425.5 606.5 1428.6 605.4" fill="none" stroke="#d8d8d8" stroke-width="1.33" stroke-opacity="0.41" stroke-linecap="round"/><path d="M1051.4 605.6C1054.6 606.9 1064.3 611.3 1070.3 613.5C1076.3 615.8 1077.4 618.2 1087.5 619.2C1097.7 620.1 1116.7 619.3 1131.2 619.4C1145.7 619.4 1161.7 620.0 1174.6 619.7C1187.4 619.3 1196.8 617.5 1208.1 617.3C1219.3 617.0 1230.6 617.5 1241.9 618.1C1253.3 618.6 1264.2 620.2 1276.0 620.4C1287.9 620.6 1300.7 619.6 1313.0 619.4C1325.4 619.2 1339.0 619.7 1350.0 619.3C1361.0 618.8 1369.5 618.2 1379.2 616.8C1388.8 615.4 1400.0 612.8 1408.0 610.9C1416.0 608.9 1423.9 606.2 1427.1 605.2" fill="none" stroke="#d8d8d8" stroke-width="1.85" stroke-opacity="0.50" stroke-linecap="round"/><path d="M1053.0 606.6C1056.0 608.0 1065.5 612.5 1071.2 614.7C1077.0 616.9 1077.4 619.1 1087.3 619.8C1097.2 620.5 1116.4 619.2 1130.7 618.9C1145.0 618.7 1160.3 618.9 1172.9 618.5C1185.6 618.1 1195.4 616.7 1206.5 616.6C1217.6 616.5 1228.0 617.7 1239.4 617.9C1250.8 618.0 1263.3 617.5 1275.1 617.5C1286.8 617.4 1297.4 617.1 1309.8 617.3C1322.1 617.5 1337.3 618.7 1349.0 618.7C1360.7 618.6 1369.5 618.2 1379.8 617.1C1390.2 616.0 1402.6 613.9 1410.9 612.3C1419.2 610.7 1426.5 608.1 1429.6 607.3" fill="none" stroke="#d8d8d8" stroke-width="1.40" stroke-opacity="0.50" stroke-linecap="round"/><path d="M1051.8 605.6C1054.4 606.7 1062.3 610.1 1067.6 612.0C1073.0 613.9 1073.8 616.5 1083.7 617.1C1093.7 617.7 1112.8 615.8 1127.4 615.7C1142.0 615.6 1158.4 616.5 1171.3 616.5C1184.3 616.5 1193.5 615.5 1205.1 615.6C1216.7 615.8 1228.7 616.6 1240.8 617.4C1252.9 618.2 1265.6 620.0 1277.9 620.5C1290.1 621.0 1301.8 620.3 1314.1 620.4C1326.5 620.4 1340.8 620.7 1352.2 620.7C1363.6 620.6 1372.7 621.3 1382.6 620.2C1392.4 619.0 1403.6 615.9 1411.3 613.6C1419.0 611.2 1425.8 607.3 1428.7 606.0" fill="none" stroke="#d8d8d8" stroke-width="1.43" stroke-opacity="0.29" stroke-linecap="round"/><path d="M1052.0 606.0C1056.3 608.3 1071.5 615.3 1078.0 620.0C1084.5 624.7 1087.7 628.3 1091.0 634.0C1094.3 639.7 1096.8 650.7 1098.0 654.0" fill="none" stroke="#d8d8d8" stroke-width="4.64" stroke-opacity="0.10" stroke-linecap="round"/><path d="M1052.8 607.2C1057.3 609.4 1073.1 615.9 1079.8 620.6C1086.5 625.3 1089.4 629.6 1092.9 635.5C1096.3 641.4 1099.3 652.5 1100.6 655.9" fill="none" stroke="#d8d8d8" stroke-width="0.91" stroke-opacity="0.35" stroke-linecap="round"/><path d="M1054.0 607.9C1058.3 609.9 1073.7 615.7 1079.9 620.2C1086.1 624.8 1088.2 629.3 1091.2 635.1C1094.3 640.8 1096.8 651.4 1097.9 654.7" fill="none" stroke="#d8d8d8" stroke-width="1.42" stroke-opacity="0.50" stroke-linecap="round"/><path d="M1049.6 604.5C1054.4 607.1 1071.1 614.8 1077.9 619.7C1084.8 624.6 1087.0 628.3 1090.6 634.1C1094.2 639.8 1098.1 650.8 1099.5 654.1" fill="none" stroke="#d8d8d8" stroke-width="1.14" stroke-opacity="0.47" stroke-linecap="round"/><path d="M1049.9 604.6C1054.3 607.0 1069.6 614.3 1076.3 619.1C1083.0 623.8 1086.6 627.5 1090.3 633.3C1094.0 639.1 1097.1 650.5 1098.5 653.9" fill="none" stroke="#d8d8d8" stroke-width="0.97" stroke-opacity="0.51" stroke-linecap="round"/><path d="M1105.0 692.0C1104.7 695.3 1104.3 705.5 1103.0 712.0C1101.7 718.5 1098.0 727.8 1097.0 731.0" fill="none" stroke="#d8d8d8" stroke-width="4.28" stroke-opacity="0.09" stroke-linecap="round"/><path d="M1104.3 692.8C1103.9 696.0 1103.1 705.9 1101.8 712.3C1100.6 718.7 1097.7 728.0 1096.8 731.2" fill="none" stroke="#d8d8d8" stroke-width="0.73" stroke-opacity="0.31" stroke-linecap="round"/><path d="M1102.4 691.3C1102.3 694.6 1103.0 704.9 1101.7 711.3C1100.5 717.8 1096.0 726.7 1094.8 729.8" fill="none" stroke="#d8d8d8" stroke-width="1.08" stroke-opacity="0.40" stroke-linecap="round"/><path d="M1107.3 693.2C1106.9 696.4 1106.2 706.4 1104.8 712.8C1103.4 719.3 1099.9 728.7 1098.9 731.9" fill="none" stroke="#d8d8d8" stroke-width="1.48" stroke-opacity="0.32" stroke-linecap="round"/><path d="M1096.8 599.6C1098.0 601.5 1102.5 609.1 1103.6 611.0" fill="none" stroke="#d8d8d8" stroke-width="3.57" stroke-opacity="0.05" stroke-linecap="round"/><path d="M1098.6 600.9C1099.5 602.6 1102.9 609.4 1103.7 611.1" fill="none" stroke="#d8d8d8" stroke-width="1.08" stroke-opacity="0.27" stroke-linecap="round"/><path d="M1096.7 598.9C1097.7 600.7 1101.8 608.1 1102.9 609.9" fill="none" stroke="#d8d8d8" stroke-width="1.29" stroke-opacity="0.16" stroke-linecap="round"/><path d="M1085.6 598.7C1086.5 600.9 1090.1 609.8 1091.0 612.1" fill="none" stroke="#d8d8d8" stroke-width="3.57" stroke-opacity="0.05" stroke-linecap="round"/><path d="M1086.4 598.8C1087.4 601.1 1091.2 610.1 1092.2 612.3" fill="none" stroke="#d8d8d8" stroke-width="0.60" stroke-opacity="0.27" stroke-linecap="round"/><path d="M1083.6 597.3C1084.8 599.7 1089.3 609.3 1090.5 611.7" fill="none" stroke="#d8d8d8" stroke-width="0.69" stroke-opacity="0.24" stroke-linecap="round"/><path d="M1085.9 575.1C1086.6 577.0 1089.6 584.4 1090.3 586.2" fill="none" stroke="#d8d8d8" stroke-width="3.57" stroke-opacity="0.05" stroke-linecap="round"/><path d="M1084.4 573.6C1085.2 575.5 1088.3 583.3 1089.1 585.3" fill="none" stroke="#d8d8d8" stroke-width="0.62" stroke-opacity="0.20" stroke-linecap="round"/><path d="M1085.4 574.6C1086.0 576.4 1088.4 583.8 1088.9 585.7" fill="none" stroke="#d8d8d8" stroke-width="0.77" stroke-opacity="0.16" stroke-linecap="round"/><path d="M1085.4 590.4C1086.4 592.5 1090.0 601.2 1090.9 603.4" fill="none" stroke="#d8d8d8" stroke-width="3.57" stroke-opacity="0.05" stroke-linecap="round"/><path d="M1083.2 589.2C1084.1 591.4 1088.0 600.4 1089.0 602.7" fill="none" stroke="#d8d8d8" stroke-width="1.01" stroke-opacity="0.19" stroke-linecap="round"/><path d="M1085.5 590.0C1086.4 592.1 1089.8 600.6 1090.7 602.8" fill="none" stroke="#d8d8d8" stroke-width="1.15" stroke-opacity="0.23" stroke-linecap="round"/><path d="M1093.0 593.4C1094.0 594.8 1098.0 600.5 1099.0 601.9" fill="none" stroke="#d8d8d8" stroke-width="3.57" stroke-opacity="0.05" stroke-linecap="round"/><path d="M1093.0 593.1C1093.9 594.5 1097.5 600.1 1098.4 601.5" fill="none" stroke="#d8d8d8" stroke-width="1.22" stroke-opacity="0.15" stroke-linecap="round"/><path d="M1091.2 592.2C1092.2 593.8 1096.3 600.2 1097.4 601.8" fill="none" stroke="#d8d8d8" stroke-width="0.98" stroke-opacity="0.28" stroke-linecap="round"/><path d="M1087.9 581.3C1089.4 583.0 1095.0 589.9 1096.5 591.6" fill="none" stroke="#d8d8d8" stroke-width="3.57" stroke-opacity="0.05" stroke-linecap="round"/><path d="M1089.2 581.9C1090.5 583.7 1095.7 590.8 1097.0 592.6" fill="none" stroke="#d8d8d8" stroke-width="1.16" stroke-opacity="0.27" stroke-linecap="round"/><path d="M1088.9 582.5C1090.2 584.1 1095.4 590.5 1096.7 592.1" fill="none" stroke="#d8d8d8" stroke-width="1.15" stroke-opacity="0.15" stroke-linecap="round"/><path d="M1372.0 637.0C1374.7 634.7 1382.0 627.2 1388.0 623.0C1394.0 618.8 1401.3 614.8 1408.0 612.0C1414.7 609.2 1424.7 607.0 1428.0 606.0" fill="none" stroke="#d8d8d8" stroke-width="4.28" stroke-opacity="0.09" stroke-linecap="round"/><path d="M1369.7 634.6C1372.4 632.3 1379.7 624.7 1385.6 620.6C1391.6 616.4 1398.5 612.5 1405.3 609.7C1412.0 607.0 1422.7 604.9 1426.2 604.0" fill="none" stroke="#d8d8d8" stroke-width="0.73" stroke-opacity="0.44" stroke-linecap="round"/><path d="M1375.2 639.5C1377.2 636.9 1382.3 628.4 1387.7 623.9C1393.0 619.4 1400.5 615.3 1407.0 612.3C1413.5 609.3 1423.4 607.0 1426.7 605.9" fill="none" stroke="#d8d8d8" stroke-width="0.83" stroke-opacity="0.38" stroke-linecap="round"/><path d="M1370.9 635.3C1373.4 633.1 1380.0 626.0 1386.0 622.0C1392.0 618.0 1399.8 614.3 1406.8 611.5C1413.9 608.6 1424.6 606.0 1428.1 604.9" fill="none" stroke="#d8d8d8" stroke-width="1.41" stroke-opacity="0.37" stroke-linecap="round"/><path d="M1370.8 635.6C1373.4 633.3 1381.1 626.0 1386.9 621.8C1392.6 617.6 1398.8 613.4 1405.0 610.3C1411.3 607.2 1421.0 604.3 1424.2 603.2" fill="none" stroke="#d8d8d8" stroke-width="1.11" stroke-opacity="0.47" stroke-linecap="round"/><path d="M1352.0 640.0C1350.7 644.2 1345.5 655.8 1344.0 665.0C1342.5 674.2 1341.7 684.8 1343.0 695.0C1344.3 705.2 1350.5 720.8 1352.0 726.0" fill="none" stroke="#d8d8d8" stroke-width="3.57" stroke-opacity="0.05" stroke-linecap="round"/><path d="M1353.8 642.9C1352.5 647.0 1347.6 658.9 1345.9 667.5C1344.2 676.0 1342.5 684.5 1343.4 694.3C1344.4 704.1 1350.1 720.9 1351.4 726.2" fill="none" stroke="#d8d8d8" stroke-width="0.83" stroke-opacity="0.19" stroke-linecap="round"/><path d="M1354.4 641.6C1353.4 645.9 1349.1 658.0 1348.0 667.4C1346.8 676.7 1346.3 687.5 1347.4 697.6C1348.6 707.7 1353.5 722.8 1354.8 727.9" fill="none" stroke="#d8d8d8" stroke-width="0.69" stroke-opacity="0.25" stroke-linecap="round"/><path d="M1353.2 640.4C1352.0 644.5 1347.2 655.4 1345.8 665.0C1344.4 674.5 1343.2 687.4 1344.8 697.9C1346.3 708.4 1353.4 722.9 1355.2 727.9" fill="none" stroke="#d8d8d8" stroke-width="1.18" stroke-opacity="0.26" stroke-linecap="round"/><path d="M1375.0 622.0C1379.2 620.3 1390.8 614.7 1400.0 612.0C1409.2 609.3 1418.3 606.8 1430.0 606.0C1441.7 605.2 1458.3 606.0 1470.0 607.0C1481.7 608.0 1495.0 611.2 1500.0 612.0" fill="none" stroke="#d8d8d8" stroke-width="3.57" stroke-opacity="0.06" stroke-linecap="round"/><path d="M1376.3 623.5C1380.7 622.1 1392.8 617.4 1402.4 615.0C1412.0 612.5 1422.4 609.4 1434.0 608.6C1445.5 607.8 1460.6 609.1 1471.7 610.0C1482.9 610.9 1496.0 613.1 1500.8 613.8" fill="none" stroke="#d8d8d8" stroke-width="0.62" stroke-opacity="0.18" stroke-linecap="round"/><path d="M1377.6 623.0C1381.9 621.6 1394.2 617.3 1403.5 614.7C1412.8 612.0 1421.9 608.1 1433.4 607.1C1444.9 606.1 1461.4 607.8 1472.7 608.8C1484.0 609.8 1496.3 612.2 1501.0 612.9" fill="none" stroke="#d8d8d8" stroke-width="1.00" stroke-opacity="0.25" stroke-linecap="round"/><path d="M1377.2 623.9C1381.4 622.3 1393.3 617.0 1402.4 614.4C1411.5 611.7 1420.7 609.4 1431.8 608.0C1443.0 606.7 1458.1 605.7 1469.5 606.3C1480.8 606.9 1494.8 610.9 1499.9 611.9" fill="none" stroke="#d8d8d8" stroke-width="1.09" stroke-opacity="0.29" stroke-linecap="round"/><path d="M1500.4 599.0C1503.2 601.5 1512.8 608.1 1517.0 613.9C1521.1 619.6 1523.8 630.2 1525.2 633.5" fill="none" stroke="#d8d8d8" stroke-width="1.06" stroke-opacity="0.21" stroke-linecap="round"/><path d="M1508.5 600.4C1511.9 603.3 1524.6 612.9 1528.7 617.9C1532.7 622.8 1532.2 628.0 1532.9 630.0" fill="none" stroke="#d8d8d8" stroke-width="0.77" stroke-opacity="0.31" stroke-linecap="round"/><path d="M1491.9 594.5C1495.0 596.5 1505.8 601.7 1510.7 606.6C1515.6 611.5 1519.5 620.9 1521.3 623.8" fill="none" stroke="#d8d8d8" stroke-width="0.62" stroke-opacity="0.25" stroke-linecap="round"/><path d="M1512.8 598.6C1516.0 601.1 1526.3 608.0 1531.9 613.2C1537.4 618.4 1543.5 627.0 1545.9 629.8" fill="none" stroke="#d8d8d8" stroke-width="0.97" stroke-opacity="0.29" stroke-linecap="round"/><path d="M1494.5 603.8C1497.8 605.7 1508.7 610.3 1514.0 615.4C1519.3 620.5 1524.2 631.2 1526.2 634.3" fill="none" stroke="#d8d8d8" stroke-width="0.84" stroke-opacity="0.24" stroke-linecap="round"/><path d="M1501.4 599.4C1504.6 601.5 1515.5 607.6 1520.5 612.3C1525.5 617.1 1529.7 625.3 1531.5 627.9" fill="none" stroke="#d8d8d8" stroke-width="0.87" stroke-opacity="0.28" stroke-linecap="round"/><path d="M1518.2 598.9C1521.3 601.4 1532.8 609.7 1537.2 613.8C1541.6 618.0 1543.3 622.1 1544.6 623.7" fill="none" stroke="#d8d8d8" stroke-width="1.07" stroke-opacity="0.31" stroke-linecap="round"/><path d="M1081.3 601.7C1082.2 603.7 1086.1 611.6 1087.1 613.5" fill="none" stroke="#d8d8d8" stroke-width="2.08" stroke-opacity="0.20" stroke-linecap="round"/><path d="M1093.8 591.5C1094.8 592.4 1099.0 596.1 1100.1 597.0" fill="none" stroke="#d8d8d8" stroke-width="1.37" stroke-opacity="0.18" stroke-linecap="round"/><path d="M1093.5 601.9C1095.2 603.2 1101.8 608.6 1103.5 610.0" fill="none" stroke="#d8d8d8" stroke-width="1.19" stroke-opacity="0.18" stroke-linecap="round"/><path d="M1085.8 597.4C1087.8 599.1 1095.8 605.9 1097.8 607.6" fill="none" stroke="#d8d8d8" stroke-width="1.94" stroke-opacity="0.13" stroke-linecap="round"/><path d="M1084.9 602.8C1086.2 603.8 1091.2 608.1 1092.4 609.2" fill="none" stroke="#d8d8d8" stroke-width="1.70" stroke-opacity="0.16" stroke-linecap="round"/><path d="M1352.3 606.1C1355.4 606.4 1367.7 607.4 1370.7 607.7" fill="none" stroke="#d8d8d8" stroke-width="1.83" stroke-opacity="0.16" stroke-linecap="round"/><path d="M1373.2 607.5C1376.1 607.4 1387.6 607.0 1390.5 606.9" fill="none" stroke="#d8d8d8" stroke-width="1.61" stroke-opacity="0.23" stroke-linecap="round"/><path d="M1371.7 598.6C1375.8 598.4 1392.3 597.5 1396.4 597.3" fill="none" stroke="#d8d8d8" stroke-width="1.78" stroke-opacity="0.12" stroke-linecap="round"/><path d="M1362.5 597.9C1366.6 597.6 1383.1 596.7 1387.3 596.5" fill="none" stroke="#d8d8d8" stroke-width="0.93" stroke-opacity="0.13" stroke-linecap="round"/><path d="M1086.6 623.6C1093.8 623.4 1115.7 622.4 1130.0 622.3C1144.3 622.1 1153.8 622.5 1172.1 622.7C1190.4 622.8 1216.6 622.9 1239.8 622.9C1262.9 622.9 1289.5 623.1 1311.1 622.8C1332.6 622.4 1359.5 621.2 1369.1 620.8" fill="none" stroke="#d8d8d8" stroke-width="0.76" stroke-opacity="0.25" stroke-linecap="round"/><path d="M1087.5 624.4C1094.7 624.2 1116.5 623.2 1130.8 623.0C1145.1 622.9 1154.9 623.4 1173.3 623.3C1191.6 623.3 1217.8 622.8 1240.9 622.9C1263.9 623.0 1290.3 624.1 1311.7 623.9C1333.2 623.8 1360.1 622.2 1369.7 621.9" fill="none" stroke="#d8d8d8" stroke-width="1.41" stroke-opacity="0.32" stroke-linecap="round"/><path d="M1214.4 687.3C1214.6 689.0 1215.2 693.9 1215.5 697.5C1215.9 701.1 1216.4 707.1 1216.6 709.0" fill="none" stroke="#d8d8d8" stroke-width="1.27" stroke-opacity="0.46" stroke-linecap="round"/><path d="M1212.8 685.4C1212.9 687.3 1212.9 693.1 1213.3 696.7C1213.7 700.2 1214.9 705.0 1215.2 706.7" fill="none" stroke="#d8d8d8" stroke-width="1.12" stroke-opacity="0.56" stroke-linecap="round"/><path d="M1213.5 686.3C1213.8 688.1 1214.7 693.3 1215.3 697.1C1215.8 700.8 1216.4 706.7 1216.6 708.6" fill="none" stroke="#d8d8d8" stroke-width="0.80" stroke-opacity="0.39" stroke-linecap="round"/><path d="M1212.7 685.5C1212.9 687.3 1213.3 692.7 1213.6 696.3C1213.8 699.9 1214.2 705.3 1214.3 707.1" fill="none" stroke="#d8d8d8" stroke-width="1.46" stroke-opacity="0.57" stroke-linecap="round"/><path d="M1220.8 686.1C1222.7 687.0 1228.1 689.8 1232.0 691.7C1235.9 693.6 1242.0 696.6 1244.0 697.6" fill="none" stroke="#d8d8d8" stroke-width="0.76" stroke-opacity="0.64" stroke-linecap="round"/><path d="M1220.5 686.6C1222.5 687.6 1228.7 690.5 1232.8 692.4C1237.0 694.3 1243.4 697.2 1245.5 698.1" fill="none" stroke="#d8d8d8" stroke-width="1.51" stroke-opacity="0.63" stroke-linecap="round"/><path d="M1220.8 686.7C1222.7 687.6 1228.4 690.2 1232.2 691.9C1236.0 693.7 1241.9 696.5 1243.8 697.4" fill="none" stroke="#d8d8d8" stroke-width="1.38" stroke-opacity="0.40" stroke-linecap="round"/><path d="M1245.2 702.1C1242.9 702.8 1236.1 705.3 1231.3 706.5C1226.5 707.8 1218.7 709.2 1216.2 709.7" fill="none" stroke="#d8d8d8" stroke-width="0.95" stroke-opacity="0.55" stroke-linecap="round"/><path d="M1243.5 701.3C1241.2 701.8 1234.8 703.3 1230.0 704.5C1225.1 705.6 1217.0 707.5 1214.4 708.2" fill="none" stroke="#d8d8d8" stroke-width="0.72" stroke-opacity="0.45" stroke-linecap="round"/><path d="M1243.6 700.8C1241.2 701.6 1234.2 704.1 1229.3 705.4C1224.4 706.7 1216.7 708.0 1214.2 708.6" fill="none" stroke="#d8d8d8" stroke-width="0.97" stroke-opacity="0.52" stroke-linecap="round"/><path d="M1243.9 700.9C1241.5 701.6 1234.4 703.5 1229.6 704.8C1224.8 706.0 1217.5 707.9 1215.1 708.5" fill="none" stroke="#d8d8d8" stroke-width="0.98" stroke-opacity="0.29" stroke-linecap="round"/></g></g><path d="M972.6 655.7 L1011.5 654.8 L1009.6 676.1 L1043.9 677 L1043 703 L1016 702 L1014.3 726.1 L981.9 727 L976.3 703 L947.1 698.3 L946.7 678 L973.5 676.1Z" fill="url(#gpad)"/><g filter="url(#soft)"><path d="M972.6 655.7 L1011.5 654.8 L1009.6 676.1 L1043.9 677.0 L1043.0 703.0 L1016.0 702.0 L1014.3 726.1 L981.9 727.0 L976.3 703.0 L947.1 698.3 L946.7 678.0 L973.5 676.1Z" fill="none" stroke="#ddd" stroke-width="3.6" stroke-opacity="0.38" stroke-linejoin="round"/><path d="M974.0 656.9 L1012.8 655.2 L1009.4 676.1 L1045.4 678.4 L1043.5 703.9 L1015.4 701.7 L1013.2 725.7 L982.7 726.9 L977.4 702.4 L947.8 699.3 L948.0 678.2 L975.0 676.3Z" fill="none" stroke="#ececec" stroke-width="1.13" stroke-opacity="0.49" stroke-linejoin="round"/><path d="M971.7 656.2 L1012.9 655.9 L1008.3 676.8 L1042.9 676.3 L1043.6 703.3 L1017.2 701.0 L1015.1 726.8 L982.1 726.9 L977.5 702.5 L948.6 696.7 L948.1 679.5 L972.3 677.7Z" fill="none" stroke="#ececec" stroke-width="1.48" stroke-opacity="0.48" stroke-linejoin="round"/><path d="M972.9 654.8 L1012.8 655.0 L1010.5 675.7 L1044.0 676.5 L1042.2 703.0 L1016.0 700.7 L1015.8 726.0 L983.0 728.3 L975.9 702.7 L947.3 697.4 L945.6 677.2 L974.9 676.4Z" fill="none" stroke="#ececec" stroke-width="1.42" stroke-opacity="0.45" stroke-linejoin="round"/><path d="M972.1 655.3 L1012.6 654.8 L1010.1 676.7 L1043.1 678.0 L1044.5 703.5 L1016.0 700.9 L1015.2 725.0 L982.6 727.0 L977.6 703.1 L947.6 696.9 L945.2 679.1 L974.9 676.6Z" fill="none" stroke="#ececec" stroke-width="1.76" stroke-opacity="0.54" stroke-linejoin="round"/><path d="M973.7 654.8 L1012.2 653.2 L1009.6 675.7 L1044.3 677.5 L1043.4 702.9 L1016.0 700.4 L1014.5 724.5 L982.0 726.3 L977.8 701.5 L948.1 698.9 L947.7 679.3 L972.2 674.8Z" fill="none" stroke="#ececec" stroke-width="1.15" stroke-opacity="0.47" stroke-linejoin="round"/></g><g filter="url(#soft)"><g filter="url(#rough)"><path d="M1103.3 771.8C1103.7 773.1 1105.6 777.1 1106.2 779.9C1106.8 782.6 1107.1 785.5 1107.0 788.3C1106.9 791.2 1106.4 794.0 1105.5 796.8C1104.7 799.5 1103.4 802.2 1101.9 804.6C1100.4 807.1 1098.5 809.4 1096.3 811.5C1094.2 813.6 1091.7 815.4 1089.1 817.0C1086.5 818.6 1083.6 819.9 1080.7 820.8C1077.7 821.8 1074.6 822.5 1071.5 822.8C1068.4 823.1 1065.1 823.1 1062.0 822.7C1058.9 822.4 1055.8 821.7 1052.9 820.7C1049.9 819.7 1047.1 818.3 1044.5 816.7C1041.9 815.2 1039.4 813.2 1037.3 811.2C1035.2 809.1 1033.4 806.7 1031.9 804.2C1030.4 801.7 1028.9 797.6 1028.4 796.3" fill="none" stroke="#d8d8d8" stroke-width="4.64" stroke-opacity="0.09" stroke-linecap="round"/><path d="M1102.5 771.1C1102.8 772.4 1103.7 776.4 1104.3 778.9C1104.8 781.3 1106.1 783.0 1105.9 785.8C1105.8 788.7 1104.4 792.9 1103.5 796.0C1102.6 799.0 1101.6 802.0 1100.4 804.3C1099.2 806.6 1098.1 807.6 1096.3 809.8C1094.5 812.0 1091.9 815.8 1089.4 817.6C1086.9 819.4 1083.9 819.5 1081.2 820.7C1078.5 821.8 1075.9 823.8 1073.0 824.5C1070.2 825.3 1067.4 825.5 1064.3 825.3C1061.3 825.0 1058.2 824.3 1054.8 823.0C1051.4 821.6 1047.2 819.4 1043.9 817.2C1040.6 815.0 1037.4 812.0 1035.2 809.8C1033.1 807.6 1032.6 806.7 1031.0 804.0C1029.4 801.2 1026.6 795.0 1025.7 793.2" fill="none" stroke="#d8d8d8" stroke-width="0.83" stroke-opacity="0.46" stroke-linecap="round"/><path d="M1103.3 770.4C1103.9 772.0 1106.3 776.7 1107.2 779.9C1108.0 783.0 1108.3 786.6 1108.2 789.3C1108.1 792.1 1107.4 793.8 1106.5 796.4C1105.6 799.1 1103.9 802.5 1102.7 805.1C1101.5 807.8 1101.1 810.5 1099.3 812.6C1097.5 814.7 1094.8 816.4 1092.0 817.8C1089.3 819.1 1085.7 819.6 1082.6 820.6C1079.5 821.6 1076.8 823.2 1073.3 823.7C1069.8 824.2 1065.4 824.4 1061.5 823.7C1057.7 823.1 1053.3 821.1 1050.3 819.6C1047.3 818.1 1046.0 816.4 1043.6 815.0C1041.3 813.6 1038.4 812.9 1036.1 811.1C1033.8 809.2 1031.5 806.5 1029.8 803.8C1028.1 801.0 1026.5 796.3 1025.8 794.8" fill="none" stroke="#d8d8d8" stroke-width="1.77" stroke-opacity="0.35" stroke-linecap="round"/><path d="M1106.1 773.9C1106.1 775.1 1105.8 778.5 1106.0 780.9C1106.1 783.3 1107.7 786.2 1107.1 788.4C1106.4 790.7 1103.3 791.8 1102.1 794.2C1100.8 796.6 1100.8 800.4 1099.5 802.9C1098.2 805.4 1096.4 807.1 1094.3 809.0C1092.1 811.0 1088.7 812.5 1086.4 814.4C1084.0 816.3 1082.5 819.0 1080.2 820.4C1077.8 821.9 1075.2 822.2 1072.5 822.9C1069.8 823.6 1066.7 824.6 1063.9 824.5C1061.1 824.4 1059.1 823.6 1056.0 822.5C1052.9 821.4 1048.5 819.6 1045.3 817.9C1042.1 816.1 1039.4 814.4 1036.9 811.9C1034.4 809.5 1032.3 806.1 1030.4 803.2C1028.4 800.2 1026.2 795.8 1025.4 794.3" fill="none" stroke="#d8d8d8" stroke-width="0.84" stroke-opacity="0.45" stroke-linecap="round"/><path d="M1100.4 770.1C1101.2 771.6 1103.7 776.2 1105.1 779.3C1106.6 782.3 1108.3 785.2 1108.8 788.4C1109.4 791.6 1109.0 795.8 1108.4 798.7C1107.8 801.6 1106.9 803.4 1105.1 805.7C1103.4 808.0 1100.5 810.4 1098.0 812.4C1095.5 814.4 1093.4 816.6 1090.1 817.7C1086.9 818.8 1082.1 818.0 1078.5 818.8C1074.8 819.5 1071.5 821.8 1068.1 822.1C1064.7 822.4 1061.0 821.3 1058.2 820.7C1055.3 820.1 1053.5 818.9 1051.0 818.3C1048.4 817.6 1044.8 817.7 1042.8 816.8C1040.8 815.9 1040.7 814.9 1039.1 813.0C1037.5 811.2 1034.3 808.0 1033.3 805.4C1032.3 802.9 1033.0 799.1 1033.0 797.8" fill="none" stroke="#d8d8d8" stroke-width="1.07" stroke-opacity="0.47" stroke-linecap="round"/><path d="M1102.5 771.5C1103.1 772.9 1104.8 776.9 1106.0 779.9C1107.2 782.9 1109.5 786.1 1109.7 789.3C1109.9 792.4 1107.9 795.9 1107.2 798.9C1106.5 801.9 1106.7 804.6 1105.6 807.2C1104.5 809.7 1102.5 812.2 1100.5 814.2C1098.6 816.2 1096.6 817.9 1093.9 819.3C1091.2 820.7 1087.6 821.8 1084.1 822.6C1080.6 823.5 1076.2 824.4 1072.7 824.6C1069.3 824.9 1067.0 824.7 1063.6 824.0C1060.1 823.3 1055.4 821.8 1051.9 820.2C1048.5 818.7 1045.8 816.4 1043.0 814.7C1040.2 813.0 1037.2 812.1 1034.9 809.8C1032.7 807.4 1030.7 803.2 1029.2 800.6C1027.7 797.9 1026.6 794.8 1026.1 793.7" fill="none" stroke="#d8d8d8" stroke-width="1.16" stroke-opacity="0.35" stroke-linecap="round"/><path d="M1105.0 783.0C1104.9 784.3 1104.7 788.2 1104.2 790.7C1103.6 793.2 1102.7 795.7 1101.6 798.1C1100.6 800.4 1099.2 802.7 1097.6 804.8C1096.0 806.9 1094.1 808.9 1092.1 810.6C1090.1 812.4 1087.9 814.0 1085.5 815.3C1083.2 816.7 1080.6 817.8 1078.0 818.7C1075.4 819.6 1072.7 820.2 1069.9 820.6C1067.2 821.0 1064.4 821.1 1061.6 820.9C1058.9 820.8 1056.1 820.4 1053.4 819.7C1050.7 819.0 1048.1 818.1 1045.6 817.0C1043.1 815.8 1040.7 814.4 1038.6 812.8C1036.4 811.2 1033.6 808.3 1032.6 807.4" fill="none" stroke="#d8d8d8" stroke-width="4.28" stroke-opacity="0.08" stroke-linecap="round"/><path d="M1104.2 781.5C1104.4 783.0 1105.4 788.0 1105.3 790.8C1105.1 793.5 1104.3 795.2 1103.6 797.9C1102.9 800.7 1102.5 804.6 1101.1 807.2C1099.7 809.7 1097.3 811.4 1095.0 813.4C1092.7 815.3 1089.7 817.8 1087.3 818.9C1084.9 820.0 1083.3 819.3 1080.6 819.9C1078.0 820.5 1074.7 822.6 1071.3 822.4C1068.0 822.2 1064.0 819.6 1060.5 818.9C1057.0 818.1 1053.4 818.8 1050.4 818.1C1047.4 817.5 1045.0 816.3 1042.5 815.0C1040.0 813.7 1037.7 811.8 1035.5 810.4C1033.4 809.0 1030.7 807.1 1029.7 806.4" fill="none" stroke="#d8d8d8" stroke-width="1.25" stroke-opacity="0.32" stroke-linecap="round"/><path d="M1106.6 785.6C1106.2 786.8 1105.3 790.9 1104.5 793.0C1103.7 795.1 1102.7 796.3 1101.6 798.2C1100.5 800.1 1099.5 802.2 1097.9 804.3C1096.3 806.3 1094.2 808.6 1092.0 810.5C1089.8 812.3 1087.3 814.3 1084.7 815.4C1082.1 816.6 1078.9 816.8 1076.3 817.3C1073.7 817.8 1071.8 817.9 1069.2 818.4C1066.6 818.8 1063.6 820.2 1060.7 820.0C1057.8 819.8 1054.4 818.1 1051.8 817.3C1049.1 816.4 1047.5 815.8 1044.8 814.7C1042.1 813.6 1037.9 811.6 1035.6 810.4C1033.2 809.2 1031.7 807.9 1030.9 807.4" fill="none" stroke="#d8d8d8" stroke-width="0.91" stroke-opacity="0.30" stroke-linecap="round"/><path d="M1106.4 785.3C1106.4 786.6 1106.7 790.5 1106.3 793.1C1105.9 795.6 1105.2 798.2 1103.9 800.5C1102.6 802.7 1100.1 805.1 1098.3 806.6C1096.6 808.2 1095.8 808.1 1093.3 809.6C1090.8 811.1 1086.3 814.4 1083.2 815.6C1080.2 816.8 1077.6 816.2 1074.8 816.6C1072.1 817.0 1069.4 817.5 1066.9 817.9C1064.4 818.3 1062.3 818.9 1059.7 819.0C1057.2 819.1 1054.0 818.8 1051.5 818.4C1049.0 818.0 1047.0 817.2 1044.8 816.4C1042.6 815.7 1040.1 815.2 1038.4 814.0C1036.7 812.8 1035.2 810.2 1034.5 809.5" fill="none" stroke="#d8d8d8" stroke-width="1.36" stroke-opacity="0.27" stroke-linecap="round"/><path d="M1102.4 781.4C1102.2 782.8 1101.8 787.4 1101.3 789.9C1100.9 792.4 1100.7 794.1 1099.5 796.3C1098.3 798.5 1096.0 800.7 1094.3 802.9C1092.5 805.1 1090.7 807.6 1089.1 809.5C1087.4 811.4 1086.0 813.0 1084.2 814.4C1082.3 815.8 1080.5 817.1 1077.9 817.8C1075.4 818.5 1071.8 818.4 1068.9 818.9C1066.0 819.3 1063.4 820.4 1060.7 820.5C1057.9 820.6 1054.9 820.1 1052.3 819.4C1049.7 818.8 1046.9 817.2 1045.0 816.5C1043.1 815.8 1042.6 816.4 1040.8 815.1C1039.1 813.8 1035.5 809.7 1034.4 808.7" fill="none" stroke="#d8d8d8" stroke-width="1.34" stroke-opacity="0.30" stroke-linecap="round"/><path d="M1381.1 801.3C1379.9 802.1 1376.5 804.5 1373.9 805.7C1371.3 807.0 1368.4 808.0 1365.6 808.9C1362.7 809.7 1359.6 810.3 1356.6 810.6C1353.5 811.0 1350.3 811.1 1347.3 810.9C1344.2 810.8 1341.1 810.4 1338.1 809.8C1335.1 809.1 1332.2 808.3 1329.4 807.2C1326.7 806.1 1324.1 804.8 1321.7 803.3C1319.4 801.8 1317.2 800.1 1315.3 798.3C1313.4 796.4 1311.7 794.4 1310.4 792.3C1309.0 790.2 1308.0 788.0 1307.2 785.7C1306.5 783.5 1306.1 781.1 1306.0 778.8C1305.9 776.5 1306.2 774.1 1306.8 771.9C1307.3 769.6 1308.3 767.3 1309.5 765.2C1310.7 763.0 1313.2 760.1 1314.0 759.1" fill="none" stroke="#d8d8d8" stroke-width="4.64" stroke-opacity="0.10" stroke-linecap="round"/><path d="M1377.7 800.8C1376.7 801.3 1374.0 803.0 1371.9 804.1C1369.9 805.2 1367.8 806.3 1365.3 807.6C1362.8 808.8 1359.6 811.0 1357.0 811.8C1354.4 812.6 1352.6 812.4 1349.5 812.1C1346.5 811.8 1341.8 810.4 1338.9 810.0C1336.1 809.6 1335.2 810.5 1332.6 809.8C1330.0 809.1 1326.3 807.4 1323.5 805.8C1320.6 804.2 1317.5 802.0 1315.5 800.1C1313.4 798.2 1312.9 796.7 1311.3 794.4C1309.7 792.2 1306.8 789.5 1305.8 786.7C1304.9 783.8 1305.6 780.1 1305.7 777.4C1305.8 774.7 1306.3 772.6 1306.5 770.4C1306.7 768.3 1305.9 766.5 1306.7 764.6C1307.6 762.7 1310.7 760.0 1311.5 759.0" fill="none" stroke="#d8d8d8" stroke-width="1.54" stroke-opacity="0.32" stroke-linecap="round"/><path d="M1378.9 799.8C1377.6 800.3 1373.3 801.9 1370.8 803.2C1368.2 804.4 1366.3 806.1 1363.8 807.4C1361.3 808.6 1358.3 809.7 1355.7 810.5C1353.1 811.4 1351.0 812.0 1348.4 812.3C1345.8 812.6 1343.0 812.9 1340.2 812.3C1337.5 811.7 1334.3 809.5 1331.8 808.6C1329.4 807.7 1328.0 808.5 1325.6 806.8C1323.3 805.0 1320.0 800.5 1317.8 798.3C1315.6 796.2 1314.2 795.6 1312.5 793.7C1310.9 791.8 1309.1 789.7 1307.9 786.8C1306.6 783.9 1305.7 779.3 1305.2 776.3C1304.8 773.4 1304.8 771.2 1305.1 769.1C1305.4 767.1 1305.9 766.0 1307.1 764.1C1308.2 762.2 1311.2 758.8 1312.1 757.7" fill="none" stroke="#d8d8d8" stroke-width="1.25" stroke-opacity="0.41" stroke-linecap="round"/><path d="M1384.9 804.9C1383.3 805.3 1378.5 806.7 1375.5 807.8C1372.5 808.9 1370.0 810.9 1366.9 811.7C1363.9 812.5 1360.5 813.1 1357.0 812.7C1353.6 812.2 1349.6 809.6 1346.3 809.1C1343.0 808.5 1340.4 810.0 1337.3 809.3C1334.1 808.7 1330.6 806.6 1327.5 805.2C1324.5 803.7 1321.8 802.1 1319.0 800.6C1316.2 799.0 1312.6 797.8 1310.6 796.0C1308.5 794.3 1307.6 792.1 1306.6 790.1C1305.5 788.0 1304.4 785.7 1304.3 783.6C1304.2 781.6 1305.7 779.6 1306.2 777.7C1306.7 775.9 1306.7 774.4 1307.5 772.4C1308.3 770.4 1309.5 768.0 1311.1 765.9C1312.7 763.8 1316.2 760.6 1317.2 759.5" fill="none" stroke="#d8d8d8" stroke-width="0.85" stroke-opacity="0.46" stroke-linecap="round"/><path d="M1382.1 800.6C1380.9 801.2 1378.0 803.6 1375.1 804.7C1372.2 805.7 1368.2 806.2 1364.7 806.7C1361.2 807.2 1357.7 807.6 1354.4 807.7C1351.1 807.9 1348.4 808.0 1345.1 807.7C1341.7 807.5 1337.8 806.5 1334.4 806.1C1331.0 805.6 1327.6 806.3 1324.6 805.3C1321.6 804.3 1318.6 801.4 1316.3 799.9C1314.0 798.4 1312.4 797.7 1310.8 796.2C1309.1 794.6 1307.3 792.9 1306.5 790.7C1305.6 788.4 1306.1 785.0 1305.9 782.8C1305.7 780.5 1305.1 778.8 1305.2 777.1C1305.3 775.5 1305.7 774.5 1306.5 772.8C1307.2 771.1 1307.8 768.8 1309.7 767.1C1311.6 765.4 1316.5 763.4 1317.9 762.6" fill="none" stroke="#d8d8d8" stroke-width="1.18" stroke-opacity="0.29" stroke-linecap="round"/><path d="M1381.6 802.0C1381.1 802.8 1380.0 805.0 1378.1 806.7C1376.2 808.4 1373.4 811.0 1370.3 812.4C1367.2 813.8 1362.9 814.8 1359.5 815.1C1356.1 815.3 1353.3 814.1 1349.9 813.7C1346.6 813.2 1342.6 813.0 1339.4 812.3C1336.3 811.5 1333.7 810.7 1330.8 809.0C1327.9 807.3 1325.0 804.1 1322.2 802.2C1319.3 800.3 1315.7 800.0 1313.5 797.8C1311.2 795.6 1310.5 791.3 1308.6 789.0C1306.8 786.7 1303.3 786.2 1302.2 783.9C1301.1 781.7 1301.8 778.1 1302.2 775.6C1302.5 773.0 1303.8 770.8 1304.3 768.6C1304.8 766.4 1304.2 764.1 1305.2 762.3C1306.3 760.6 1309.9 758.7 1310.8 758.0" fill="none" stroke="#d8d8d8" stroke-width="1.37" stroke-opacity="0.42" stroke-linecap="round"/><path d="M1363.7 807.9C1362.2 808.2 1357.7 809.3 1354.6 809.6C1351.5 810.0 1348.3 810.1 1345.1 809.9C1342.0 809.8 1338.8 809.4 1335.8 808.8C1332.8 808.1 1329.8 807.2 1327.0 806.1C1324.2 805.1 1321.5 803.7 1319.1 802.2C1316.7 800.7 1314.4 799.0 1312.4 797.2C1310.4 795.3 1308.6 793.3 1307.2 791.2C1305.8 789.0 1304.6 786.8 1303.7 784.5C1302.9 782.2 1302.3 779.8 1302.1 777.4C1301.9 775.0 1302.0 772.6 1302.4 770.2C1302.9 767.9 1303.6 765.5 1304.7 763.2C1305.7 761.0 1307.1 758.8 1308.7 756.7C1310.4 754.7 1312.3 752.8 1314.5 751.0C1316.6 749.3 1320.4 747.1 1321.6 746.3" fill="none" stroke="#d8d8d8" stroke-width="4.28" stroke-opacity="0.08" stroke-linecap="round"/><path d="M1359.9 804.2C1358.4 804.7 1353.8 806.6 1351.1 807.2C1348.5 807.9 1346.9 807.6 1344.1 808.1C1341.4 808.6 1337.0 810.3 1334.8 810.3C1332.6 810.2 1333.0 808.7 1330.9 807.8C1328.7 806.9 1324.1 806.2 1321.8 805.0C1319.5 803.7 1318.7 801.9 1317.1 800.4C1315.6 798.8 1314.2 798.0 1312.6 795.4C1311.0 792.9 1309.1 788.0 1307.6 785.1C1306.1 782.2 1304.9 780.5 1303.7 777.9C1302.5 775.4 1300.6 772.2 1300.3 769.6C1300.1 767.0 1301.3 765.2 1302.1 762.3C1302.9 759.4 1304.1 754.7 1305.2 752.2C1306.4 749.7 1306.9 748.9 1308.9 747.3C1310.8 745.7 1315.7 743.5 1317.0 742.7" fill="none" stroke="#d8d8d8" stroke-width="1.44" stroke-opacity="0.32" stroke-linecap="round"/><path d="M1362.0 804.9C1360.3 805.4 1355.1 807.5 1351.6 807.9C1348.2 808.2 1344.3 807.4 1341.2 807.1C1338.1 806.7 1335.5 806.2 1333.0 805.8C1330.5 805.5 1328.5 805.5 1326.1 804.9C1323.6 804.3 1320.1 803.3 1318.1 802.2C1316.1 801.1 1315.9 799.7 1314.1 798.2C1312.4 796.7 1308.9 794.9 1307.8 793.1C1306.6 791.4 1307.9 790.0 1307.3 787.6C1306.6 785.1 1304.3 780.9 1304.0 778.4C1303.6 775.8 1304.7 774.6 1305.3 772.2C1305.8 769.9 1306.4 766.6 1307.3 764.3C1308.2 762.0 1309.7 760.4 1310.7 758.3C1311.6 756.2 1311.4 753.9 1313.1 751.6C1314.8 749.2 1319.5 745.5 1320.8 744.2" fill="none" stroke="#d8d8d8" stroke-width="1.59" stroke-opacity="0.32" stroke-linecap="round"/><path d="M1360.1 807.0C1358.7 807.4 1354.4 809.4 1351.9 809.5C1349.4 809.6 1347.5 808.0 1345.1 807.8C1342.6 807.6 1340.1 808.3 1337.1 808.3C1334.2 808.3 1329.8 808.8 1327.2 807.9C1324.6 806.9 1323.7 804.1 1321.7 802.5C1319.6 801.0 1316.9 800.1 1314.8 798.5C1312.7 796.9 1311.0 795.2 1309.3 792.9C1307.6 790.5 1305.9 787.1 1304.5 784.6C1303.1 782.0 1301.3 780.3 1300.8 777.6C1300.4 774.9 1301.6 771.4 1301.9 768.5C1302.2 765.6 1301.6 762.7 1302.5 760.3C1303.4 757.9 1305.7 756.0 1307.3 754.2C1308.9 752.3 1310.1 750.3 1312.1 749.1C1314.0 747.8 1317.9 747.0 1319.0 746.6" fill="none" stroke="#d8d8d8" stroke-width="1.50" stroke-opacity="0.33" stroke-linecap="round"/><path d="M1361.5 806.4C1360.4 806.8 1357.8 808.2 1355.2 808.8C1352.5 809.5 1348.1 810.1 1345.3 810.6C1342.5 811.1 1341.2 812.1 1338.5 811.9C1335.9 811.7 1331.8 810.4 1329.3 809.4C1326.8 808.3 1326.3 807.5 1323.6 805.7C1320.8 803.9 1315.7 800.6 1313.0 798.4C1310.2 796.2 1308.7 795.0 1306.9 792.5C1305.1 790.1 1303.4 786.8 1301.9 783.8C1300.5 780.8 1298.4 777.4 1298.0 774.7C1297.6 771.9 1298.8 769.6 1299.4 767.4C1300.1 765.1 1300.8 763.0 1302.0 761.0C1303.2 759.0 1304.8 757.1 1306.9 755.2C1309.0 753.3 1311.8 750.8 1314.7 749.6C1317.5 748.4 1322.3 748.1 1323.8 747.8" fill="none" stroke="#d8d8d8" stroke-width="0.92" stroke-opacity="0.21" stroke-linecap="round"/></g></g><ellipse cx="1060" cy="770.5" rx="39.5" ry="34" fill="url(#gstick)"/><g filter="url(#soft)"><g filter="url(#rough)"><path d="M1099.5 770.5C1099.2 772.3 1098.8 777.7 1097.6 781.0C1096.3 784.3 1094.3 787.7 1092.0 790.5C1089.6 793.3 1086.5 795.9 1083.2 798.0C1079.9 800.1 1076.1 801.8 1072.2 802.8C1068.3 803.9 1064.1 804.5 1060.0 804.5C1055.9 804.5 1051.7 803.9 1047.8 802.8C1043.9 801.8 1040.1 800.1 1036.8 798.0C1033.5 795.9 1030.4 793.3 1028.0 790.5C1025.7 787.7 1023.7 784.3 1022.4 781.0C1021.2 777.7 1020.5 774.0 1020.5 770.5C1020.5 767.0 1021.2 763.3 1022.4 760.0C1023.7 756.7 1025.7 753.3 1028.0 750.5C1030.4 747.7 1033.5 745.1 1036.8 743.0C1040.1 740.9 1043.9 739.2 1047.8 738.2C1051.7 737.1 1055.9 736.5 1060.0 736.5C1064.1 736.5 1068.3 737.1 1072.2 738.2C1076.1 739.2 1079.9 740.9 1083.2 743.0C1086.5 745.1 1089.6 747.7 1092.0 750.5C1094.3 753.3 1096.3 756.7 1097.6 760.0C1098.8 763.3 1099.2 768.7 1099.5 770.5" fill="none" stroke="#d8d8d8" stroke-width="4.64" stroke-opacity="0.10" stroke-linecap="round"/><path d="M1101.2 772.0C1100.8 773.4 1100.4 777.2 1098.9 780.3C1097.4 783.5 1094.8 788.3 1092.1 791.0C1089.4 793.8 1086.4 794.9 1082.9 796.7C1079.3 798.4 1075.0 800.4 1071.0 801.4C1066.9 802.4 1062.3 802.4 1058.3 802.5C1054.3 802.5 1050.9 802.8 1046.9 801.9C1042.8 801.1 1037.4 799.6 1034.1 797.5C1030.8 795.4 1029.3 792.3 1027.2 789.4C1025.1 786.4 1022.6 783.2 1021.6 779.9C1020.5 776.5 1020.7 772.6 1020.7 769.2C1020.7 765.7 1020.1 762.4 1021.5 759.2C1022.9 756.0 1026.4 752.6 1029.2 750.0C1031.9 747.4 1034.5 745.5 1038.0 743.6C1041.5 741.7 1046.3 739.8 1050.2 738.7C1054.1 737.7 1057.3 737.2 1061.4 737.4C1065.4 737.6 1070.7 738.8 1074.7 739.9C1078.7 741.0 1082.4 742.1 1085.5 743.9C1088.5 745.7 1090.9 747.8 1093.0 750.7C1095.1 753.6 1096.8 758.0 1098.0 761.2C1099.2 764.5 1099.7 768.6 1100.1 770.1" fill="none" stroke="#d8d8d8" stroke-width="0.92" stroke-opacity="0.38" stroke-linecap="round"/><path d="M1100.6 771.3C1100.1 772.8 1099.2 777.4 1097.6 780.6C1095.9 783.7 1093.1 787.5 1090.4 790.3C1087.8 793.0 1085.5 795.1 1081.9 797.0C1078.2 798.9 1072.8 800.8 1068.6 801.6C1064.4 802.3 1060.7 801.8 1056.7 801.6C1052.7 801.5 1048.3 801.4 1044.6 800.7C1041.0 799.9 1037.9 798.7 1035.0 797.1C1032.0 795.4 1029.0 793.6 1026.9 791.0C1024.8 788.3 1022.9 784.4 1022.1 781.3C1021.3 778.1 1021.8 775.5 1022.2 772.2C1022.6 769.0 1023.0 765.2 1024.6 761.8C1026.1 758.4 1029.3 754.6 1031.6 751.9C1034.0 749.2 1035.4 747.7 1038.6 745.6C1041.8 743.4 1046.9 740.3 1050.8 738.9C1054.6 737.4 1058.0 737.0 1061.5 736.9C1065.1 736.8 1068.7 737.4 1072.1 738.2C1075.4 738.9 1078.8 739.8 1081.8 741.4C1084.8 743.0 1088.1 744.9 1090.1 747.8C1092.0 750.7 1092.7 755.4 1093.8 758.7C1094.8 762.0 1096.1 766.3 1096.5 767.8" fill="none" stroke="#d8d8d8" stroke-width="1.68" stroke-opacity="0.48" stroke-linecap="round"/><path d="M1100.7 771.9C1100.5 773.6 1101.1 778.6 1099.7 781.9C1098.3 785.1 1094.9 788.9 1092.1 791.6C1089.3 794.3 1086.5 796.0 1083.1 797.8C1079.7 799.6 1075.4 801.5 1071.6 802.4C1067.8 803.3 1064.3 803.3 1060.2 803.2C1056.1 803.1 1051.2 802.7 1047.0 801.6C1042.7 800.5 1038.3 799.0 1034.9 796.8C1031.4 794.6 1028.8 791.3 1026.3 788.3C1023.8 785.4 1021.4 782.0 1020.0 778.9C1018.5 775.8 1017.7 773.1 1017.8 769.8C1017.9 766.4 1019.0 762.2 1020.5 758.8C1022.0 755.5 1024.2 752.6 1026.8 749.8C1029.5 747.1 1033.0 744.6 1036.3 742.5C1039.6 740.5 1042.7 738.5 1046.5 737.6C1050.4 736.6 1055.2 736.9 1059.5 737.0C1063.8 737.1 1068.3 737.0 1072.3 738.0C1076.2 739.0 1079.8 740.7 1083.2 743.1C1086.6 745.4 1089.8 749.2 1092.5 752.1C1095.3 754.9 1098.0 756.9 1099.7 760.2C1101.3 763.5 1101.9 769.9 1102.3 771.9" fill="none" stroke="#d8d8d8" stroke-width="1.54" stroke-opacity="0.52" stroke-linecap="round"/><path d="M1098.6 770.8C1098.6 772.4 1099.5 777.0 1098.7 780.3C1097.9 783.6 1096.1 787.4 1093.9 790.6C1091.7 793.8 1088.8 797.3 1085.5 799.7C1082.1 802.1 1077.7 803.9 1073.9 804.9C1070.2 805.9 1066.9 805.5 1063.0 805.5C1059.1 805.5 1054.3 806.0 1050.4 805.1C1046.5 804.3 1043.1 802.6 1039.5 800.5C1036.0 798.3 1031.6 795.4 1029.2 792.3C1026.8 789.3 1026.2 785.9 1025.0 782.3C1023.7 778.7 1021.9 774.2 1021.7 770.6C1021.5 767.1 1022.8 764.5 1023.8 761.0C1024.8 757.6 1025.8 753.2 1027.8 749.9C1029.8 746.7 1032.8 743.8 1035.8 741.5C1038.8 739.3 1042.0 737.8 1045.7 736.5C1049.4 735.3 1053.9 734.2 1058.0 734.1C1062.2 734.0 1067.0 734.7 1070.7 736.0C1074.4 737.2 1076.8 739.4 1080.0 741.7C1083.3 744.0 1087.9 746.9 1090.4 749.5C1092.9 752.2 1093.9 754.1 1095.1 757.6C1096.4 761.0 1097.5 768.1 1098.0 770.2" fill="none" stroke="#d8d8d8" stroke-width="1.54" stroke-opacity="0.48" stroke-linecap="round"/><path d="M1098.9 769.2C1098.4 771.1 1097.4 776.7 1096.2 780.2C1095.0 783.7 1093.6 787.0 1091.8 790.2C1090.0 793.4 1088.4 797.3 1085.6 799.6C1082.8 802.0 1079.1 803.3 1075.1 804.5C1071.0 805.7 1065.4 806.7 1061.1 806.6C1056.8 806.6 1053.1 805.9 1049.1 804.3C1045.1 802.8 1040.9 799.9 1037.2 797.4C1033.5 794.8 1029.8 791.9 1027.0 789.0C1024.2 786.1 1021.7 783.3 1020.2 780.1C1018.7 776.8 1017.6 773.0 1017.9 769.6C1018.2 766.3 1020.4 763.0 1022.0 760.0C1023.6 756.9 1024.8 754.2 1027.6 751.3C1030.3 748.4 1034.9 744.5 1038.6 742.7C1042.2 740.8 1045.6 741.1 1049.7 740.2C1053.7 739.3 1058.8 737.3 1062.9 737.3C1066.9 737.3 1070.5 739.0 1073.9 740.1C1077.3 741.2 1080.3 742.1 1083.2 743.9C1086.0 745.8 1088.9 748.5 1091.0 751.1C1093.0 753.8 1094.5 756.7 1095.5 759.7C1096.4 762.8 1096.5 767.9 1096.8 769.6" fill="none" stroke="#d8d8d8" stroke-width="1.41" stroke-opacity="0.49" stroke-linecap="round"/><path d="M1093.8 753.8C1094.4 755.0 1096.6 758.7 1097.5 761.3C1098.4 763.9 1098.9 766.6 1099.0 769.3C1099.1 772.0 1098.8 774.8 1098.1 777.5C1097.5 780.1 1096.4 782.8 1095.1 785.2C1093.7 787.6 1091.9 790.0 1089.9 792.0C1087.9 794.1 1085.5 796.0 1082.9 797.6C1080.4 799.2 1077.5 800.5 1074.6 801.6C1071.7 802.6 1068.5 803.3 1065.4 803.7C1062.3 804.0 1059.1 804.1 1055.9 803.8C1052.8 803.5 1048.2 802.3 1046.7 802.0" fill="none" stroke="#d8d8d8" stroke-width="7.14" stroke-opacity="0.13" stroke-linecap="round"/><path d="M1093.6 753.7C1094.2 754.9 1096.2 758.0 1097.0 760.6C1097.8 763.2 1098.3 766.6 1098.4 769.4C1098.6 772.2 1098.8 775.0 1098.0 777.4C1097.3 779.9 1095.6 782.1 1094.0 784.3C1092.5 786.5 1090.8 788.6 1088.8 790.7C1086.7 792.9 1084.3 795.5 1081.8 797.3C1079.2 799.0 1076.7 800.2 1073.8 801.1C1070.9 802.0 1067.2 802.2 1064.2 802.6C1061.2 802.9 1058.9 803.2 1055.9 803.2C1053.0 803.2 1048.0 802.6 1046.4 802.5" fill="none" stroke="#d8d8d8" stroke-width="1.27" stroke-opacity="0.38" stroke-linecap="round"/><path d="M1095.4 754.0C1095.8 755.3 1097.5 759.3 1098.0 761.7C1098.6 764.1 1098.7 766.0 1098.6 768.5C1098.6 770.9 1098.5 773.8 1097.7 776.3C1097.0 778.9 1095.8 781.4 1094.1 783.7C1092.5 786.1 1090.0 788.4 1087.9 790.6C1085.7 792.8 1083.6 795.2 1081.4 797.0C1079.1 798.9 1077.0 800.4 1074.3 801.5C1071.7 802.5 1068.3 803.1 1065.3 803.5C1062.3 803.9 1059.3 803.9 1056.5 803.8C1053.6 803.8 1049.5 803.5 1048.1 803.4" fill="none" stroke="#d8d8d8" stroke-width="1.40" stroke-opacity="0.44" stroke-linecap="round"/><path d="M1094.6 753.9C1095.0 755.0 1096.4 758.5 1097.0 761.0C1097.7 763.4 1098.2 765.9 1098.3 768.5C1098.4 771.1 1098.5 773.9 1097.7 776.6C1096.9 779.2 1095.1 781.9 1093.6 784.2C1092.1 786.5 1090.5 788.4 1088.5 790.4C1086.5 792.4 1083.8 794.4 1081.4 796.0C1078.9 797.7 1076.5 799.3 1073.6 800.4C1070.8 801.4 1067.3 802.1 1064.2 802.6C1061.1 803.0 1058.2 803.2 1055.2 803.0C1052.2 802.8 1047.7 801.6 1046.2 801.3" fill="none" stroke="#d8d8d8" stroke-width="2.34" stroke-opacity="0.55" stroke-linecap="round"/></g></g><ellipse cx="1358" cy="766" rx="36" ry="32.5" fill="url(#gstick)"/><g filter="url(#soft)"><g filter="url(#rough)"><path d="M1394.0 766.0C1393.7 767.7 1393.4 772.9 1392.2 776.0C1391.1 779.2 1389.3 782.4 1387.1 785.1C1384.9 787.8 1382.2 790.3 1379.2 792.3C1376.2 794.3 1372.7 795.9 1369.1 796.9C1365.6 797.9 1361.7 798.5 1358.0 798.5C1354.3 798.5 1350.4 797.9 1346.9 796.9C1343.3 795.9 1339.8 794.3 1336.8 792.3C1333.8 790.3 1331.1 787.8 1328.9 785.1C1326.7 782.4 1324.9 779.2 1323.8 776.0C1322.6 772.9 1322.0 769.3 1322.0 766.0C1322.0 762.7 1322.6 759.1 1323.8 756.0C1324.9 752.8 1326.7 749.6 1328.9 746.9C1331.1 744.2 1333.8 741.7 1336.8 739.7C1339.8 737.7 1343.3 736.1 1346.9 735.1C1350.4 734.1 1354.3 733.5 1358.0 733.5C1361.7 733.5 1365.6 734.1 1369.1 735.1C1372.7 736.1 1376.2 737.7 1379.2 739.7C1382.2 741.7 1384.9 744.2 1387.1 746.9C1389.3 749.6 1391.1 752.8 1392.2 756.0C1393.4 759.1 1393.7 764.3 1394.0 766.0" fill="none" stroke="#d8d8d8" stroke-width="4.64" stroke-opacity="0.10" stroke-linecap="round"/><path d="M1396.2 767.0C1395.9 768.9 1395.3 774.8 1394.2 778.1C1393.2 781.3 1392.2 783.8 1390.1 786.5C1388.0 789.3 1384.8 792.6 1381.6 794.7C1378.5 796.8 1374.9 798.5 1371.2 799.2C1367.6 799.9 1363.4 799.0 1359.6 798.8C1355.8 798.6 1352.4 798.9 1348.6 798.0C1344.8 797.0 1340.2 795.3 1336.9 793.1C1333.5 791.0 1331.1 788.1 1328.7 784.9C1326.3 781.7 1323.8 777.6 1322.4 774.1C1321.0 770.6 1320.4 767.0 1320.4 763.8C1320.4 760.7 1321.3 758.5 1322.4 755.3C1323.5 752.1 1325.1 747.1 1327.2 744.5C1329.3 741.9 1331.7 740.9 1334.8 739.4C1337.8 737.8 1341.6 736.2 1345.5 735.2C1349.3 734.3 1353.9 733.7 1357.8 733.9C1361.7 734.0 1365.1 735.3 1369.0 736.2C1373.0 737.2 1378.0 737.7 1381.3 739.7C1384.6 741.6 1386.6 745.1 1388.8 748.0C1390.9 750.9 1392.9 753.7 1394.2 757.1C1395.4 760.5 1395.9 766.6 1396.3 768.5" fill="none" stroke="#d8d8d8" stroke-width="1.56" stroke-opacity="0.42" stroke-linecap="round"/><path d="M1393.0 766.0C1392.7 767.7 1392.8 773.2 1391.7 776.2C1390.6 779.2 1388.8 781.7 1386.3 784.0C1383.7 786.4 1379.4 788.5 1376.2 790.4C1373.0 792.2 1370.4 794.0 1367.1 795.1C1363.7 796.2 1359.6 796.8 1356.0 797.0C1352.4 797.2 1349.0 797.2 1345.6 796.3C1342.2 795.3 1338.2 793.3 1335.4 791.5C1332.5 789.7 1330.2 788.2 1328.5 785.6C1326.8 783.0 1326.0 779.0 1325.3 775.9C1324.7 772.8 1324.6 769.9 1324.6 766.9C1324.6 763.9 1324.1 760.9 1325.3 758.0C1326.5 755.0 1329.8 751.9 1331.9 749.2C1333.9 746.5 1335.0 743.9 1337.6 741.6C1340.3 739.3 1344.2 736.7 1347.7 735.5C1351.1 734.2 1355.0 734.2 1358.4 734.2C1361.8 734.2 1364.7 734.6 1367.8 735.6C1371.0 736.5 1374.3 738.0 1377.2 739.8C1380.1 741.6 1383.1 743.9 1385.2 746.3C1387.3 748.7 1388.5 751.4 1389.6 754.3C1390.8 757.2 1391.8 762.3 1392.2 763.9" fill="none" stroke="#d8d8d8" stroke-width="0.97" stroke-opacity="0.47" stroke-linecap="round"/><path d="M1391.7 763.9C1391.2 765.6 1389.9 770.6 1388.8 773.8C1387.8 777.0 1387.0 780.0 1385.4 783.2C1383.9 786.4 1382.3 790.6 1379.6 792.9C1377.0 795.2 1372.5 795.8 1369.4 797.1C1366.3 798.5 1364.5 800.6 1361.1 800.9C1357.8 801.2 1352.8 800.0 1349.3 798.9C1345.9 797.9 1343.7 796.6 1340.5 794.6C1337.3 792.7 1332.9 790.1 1330.2 787.0C1327.5 784.0 1325.8 780.4 1324.2 776.6C1322.5 772.8 1320.6 767.9 1320.1 764.2C1319.6 760.5 1320.3 757.6 1321.1 754.5C1322.0 751.4 1323.1 748.4 1325.2 745.6C1327.4 742.7 1331.0 739.3 1334.2 737.4C1337.4 735.6 1340.3 735.2 1344.3 734.6C1348.2 733.9 1353.8 733.4 1358.0 733.5C1362.2 733.7 1365.9 734.2 1369.7 735.6C1373.5 736.9 1377.2 739.1 1380.7 741.4C1384.3 743.8 1388.6 746.9 1391.0 749.7C1393.5 752.5 1394.6 755.4 1395.4 758.3C1396.1 761.2 1395.5 765.7 1395.5 767.2" fill="none" stroke="#d8d8d8" stroke-width="0.77" stroke-opacity="0.46" stroke-linecap="round"/><path d="M1391.2 764.1C1390.8 765.6 1389.3 770.4 1388.3 773.5C1387.3 776.7 1386.9 780.0 1385.2 782.9C1383.5 785.9 1381.1 789.1 1378.1 791.2C1375.2 793.3 1371.1 794.7 1367.6 795.7C1364.1 796.8 1360.5 797.3 1357.1 797.6C1353.6 797.8 1350.1 798.2 1347.0 797.4C1343.9 796.6 1341.3 794.6 1338.5 792.7C1335.6 790.9 1331.7 788.7 1329.7 786.3C1327.7 783.9 1327.2 781.3 1326.3 778.3C1325.5 775.3 1324.3 771.6 1324.4 768.2C1324.5 764.7 1325.9 761.0 1327.0 757.6C1328.1 754.3 1328.8 750.7 1331.1 748.1C1333.5 745.6 1337.6 744.0 1340.8 742.1C1344.0 740.1 1347.0 737.5 1350.3 736.5C1353.6 735.4 1357.3 736.0 1360.7 735.9C1364.0 735.7 1367.0 734.6 1370.3 735.5C1373.7 736.4 1377.7 739.2 1380.6 741.2C1383.6 743.2 1386.0 745.2 1387.9 747.6C1389.8 750.1 1391.0 752.9 1391.8 755.9C1392.7 758.8 1392.8 763.9 1393.0 765.5" fill="none" stroke="#d8d8d8" stroke-width="1.42" stroke-opacity="0.52" stroke-linecap="round"/><path d="M1395.1 767.9C1395.0 769.4 1395.3 773.8 1394.3 776.7C1393.3 779.7 1391.4 782.7 1389.0 785.5C1386.6 788.3 1383.1 791.4 1379.9 793.4C1376.7 795.3 1373.6 796.3 1369.8 797.2C1366.0 798.0 1361.0 798.6 1357.1 798.6C1353.1 798.5 1349.8 798.0 1346.0 796.6C1342.2 795.2 1337.5 792.3 1334.2 790.0C1330.8 787.8 1327.9 785.6 1326.0 783.1C1324.1 780.7 1323.5 778.2 1322.5 775.3C1321.5 772.3 1319.9 768.9 1320.0 765.4C1320.0 762.0 1321.3 757.7 1322.8 754.7C1324.3 751.7 1326.4 749.8 1328.8 747.6C1331.2 745.3 1334.2 743.0 1337.5 741.0C1340.7 739.0 1344.5 736.6 1348.2 735.7C1351.9 734.9 1355.8 735.4 1359.6 735.7C1363.4 735.9 1367.6 736.3 1371.2 737.3C1374.8 738.4 1378.4 740.0 1381.2 741.9C1383.9 743.8 1385.6 746.1 1387.5 748.6C1389.5 751.1 1391.8 754.3 1392.8 757.1C1393.8 759.9 1393.4 764.0 1393.5 765.4" fill="none" stroke="#d8d8d8" stroke-width="0.81" stroke-opacity="0.48" stroke-linecap="round"/><path d="M1364.2 797.5C1362.6 797.6 1358.0 798.1 1354.9 797.9C1351.9 797.6 1348.7 797.0 1345.9 796.1C1343.0 795.1 1340.1 793.8 1337.6 792.2C1335.1 790.6 1332.8 788.7 1330.8 786.6C1328.8 784.5 1327.1 782.0 1325.8 779.5C1324.5 777.0 1323.6 774.3 1323.0 771.6C1322.5 768.8 1322.4 766.0 1322.6 763.2C1322.9 760.5 1323.6 757.6 1324.6 755.1C1325.7 752.5 1327.2 749.9 1328.9 747.6C1330.7 745.4 1334.1 742.5 1335.2 741.5" fill="none" stroke="#d8d8d8" stroke-width="7.14" stroke-opacity="0.13" stroke-linecap="round"/><path d="M1365.5 799.0C1364.0 798.9 1359.3 798.9 1356.3 798.6C1353.4 798.4 1350.7 798.5 1347.8 797.6C1344.9 796.8 1341.9 795.2 1339.2 793.5C1336.5 791.9 1333.8 790.0 1331.7 787.7C1329.5 785.5 1327.3 782.6 1326.1 779.9C1324.8 777.2 1324.5 774.2 1324.0 771.4C1323.5 768.7 1323.0 766.1 1323.1 763.2C1323.2 760.3 1323.8 756.8 1324.6 754.1C1325.5 751.4 1326.7 749.3 1328.2 747.2C1329.7 745.1 1332.8 742.3 1333.7 741.3" fill="none" stroke="#d8d8d8" stroke-width="1.76" stroke-opacity="0.33" stroke-linecap="round"/><path d="M1364.9 798.7C1363.3 798.8 1358.5 799.3 1355.5 798.9C1352.5 798.5 1349.8 797.4 1347.0 796.3C1344.2 795.3 1341.4 794.1 1338.7 792.5C1335.9 790.9 1332.7 788.9 1330.6 786.7C1328.5 784.4 1327.2 781.6 1326.0 779.0C1324.7 776.4 1323.9 773.6 1323.1 771.0C1322.4 768.3 1321.4 765.9 1321.6 763.0C1321.7 760.2 1322.7 756.7 1323.8 754.1C1325.0 751.6 1326.8 749.8 1328.5 747.7C1330.2 745.6 1333.0 742.5 1333.9 741.4" fill="none" stroke="#d8d8d8" stroke-width="1.72" stroke-opacity="0.38" stroke-linecap="round"/><path d="M1363.2 797.5C1361.8 797.7 1357.4 798.7 1354.7 798.5C1352.0 798.3 1349.8 797.2 1347.2 796.4C1344.5 795.5 1341.6 794.9 1339.0 793.6C1336.4 792.2 1333.7 790.4 1331.6 788.2C1329.5 786.0 1327.9 782.9 1326.4 780.2C1324.8 777.6 1323.1 775.3 1322.4 772.4C1321.7 769.5 1322.1 765.9 1322.1 762.9C1322.1 759.9 1321.6 757.1 1322.5 754.4C1323.3 751.6 1325.3 748.6 1327.2 746.3C1329.1 744.0 1332.9 741.5 1334.0 740.6" fill="none" stroke="#d8d8d8" stroke-width="1.40" stroke-opacity="0.56" stroke-linecap="round"/></g></g><circle cx="1452.2" cy="650.2" r="19" fill="url(#gY)"/><g filter="url(#soft)"><path d="M1472.2 650.2C1471.9 651.5 1471.7 655.5 1470.7 657.9C1469.7 660.2 1468.1 662.5 1466.3 664.3C1464.5 666.1 1462.2 667.7 1459.9 668.7C1457.5 669.7 1454.8 670.2 1452.2 670.2C1449.6 670.2 1446.9 669.7 1444.5 668.7C1442.2 667.7 1439.9 666.1 1438.1 664.3C1436.3 662.5 1434.7 660.2 1433.7 657.9C1432.7 655.5 1432.2 652.8 1432.2 650.2C1432.2 647.6 1432.7 644.9 1433.7 642.5C1434.7 640.2 1436.3 637.9 1438.1 636.1C1439.9 634.3 1442.2 632.7 1444.5 631.7C1446.9 630.7 1449.6 630.2 1452.2 630.2C1454.8 630.2 1457.5 630.7 1459.9 631.7C1462.2 632.7 1464.5 634.3 1466.3 636.1C1468.1 637.9 1469.7 640.2 1470.7 642.5C1471.7 644.9 1471.9 648.9 1472.2 650.2" fill="none" stroke="#bbb" stroke-width="4.28" stroke-opacity="0.07" stroke-linecap="round"/><path d="M1470.9 648.7C1470.6 649.9 1469.9 653.6 1468.9 655.9C1467.9 658.1 1466.6 660.4 1464.8 662.2C1463.0 664.0 1460.7 665.6 1458.2 666.6C1455.7 667.6 1452.4 668.2 1449.9 668.4C1447.3 668.5 1445.0 668.1 1442.9 667.4C1440.8 666.7 1438.8 665.6 1437.2 664.1C1435.7 662.6 1434.3 660.8 1433.6 658.4C1432.8 656.1 1432.6 652.7 1432.9 650.2C1433.2 647.6 1434.0 645.4 1435.3 643.2C1436.7 641.0 1439.1 638.8 1440.8 637.2C1442.5 635.6 1443.5 634.3 1445.8 633.5C1448.2 632.7 1452.2 632.4 1454.9 632.2C1457.5 631.9 1459.8 631.5 1461.7 632.2C1463.7 633.0 1465.0 635.1 1466.7 636.8C1468.3 638.4 1470.6 640.0 1471.3 642.1C1472.1 644.2 1471.3 648.2 1471.3 649.4" fill="none" stroke="#bbb" stroke-width="1.63" stroke-opacity="0.22" stroke-linecap="round"/><path d="M1471.7 650.1C1471.6 651.3 1472.0 655.3 1471.1 657.5C1470.2 659.7 1468.2 661.7 1466.3 663.3C1464.3 665.0 1461.9 666.3 1459.5 667.3C1457.0 668.4 1454.5 669.7 1451.7 669.7C1448.9 669.7 1445.2 668.5 1442.7 667.5C1440.2 666.5 1438.2 665.5 1436.6 663.6C1434.9 661.7 1433.8 658.7 1433.0 656.2C1432.2 653.7 1431.6 651.1 1431.5 648.8C1431.4 646.5 1431.6 644.9 1432.6 642.6C1433.5 640.4 1434.9 637.2 1437.0 635.4C1439.0 633.6 1442.2 632.8 1444.8 632.0C1447.4 631.2 1450.1 630.7 1452.5 630.8C1455.0 630.8 1457.3 631.3 1459.7 632.4C1462.0 633.5 1464.5 635.6 1466.4 637.4C1468.3 639.2 1470.0 640.8 1471.2 643.2C1472.4 645.5 1473.2 650.2 1473.6 651.6" fill="none" stroke="#bbb" stroke-width="1.33" stroke-opacity="0.20" stroke-linecap="round"/><path d="M1473.3 651.3C1473.1 652.4 1473.0 655.5 1471.9 657.5C1470.9 659.6 1469.2 662.0 1467.1 663.7C1465.0 665.4 1462.0 666.7 1459.3 667.6C1456.6 668.5 1453.6 669.2 1451.0 669.3C1448.4 669.4 1446.1 669.2 1443.8 668.2C1441.6 667.3 1439.2 665.4 1437.3 663.7C1435.5 661.9 1433.7 660.3 1432.7 657.9C1431.7 655.5 1431.5 651.9 1431.6 649.3C1431.7 646.7 1432.2 644.7 1433.2 642.5C1434.1 640.3 1435.3 638.0 1437.2 636.2C1439.1 634.4 1441.7 632.6 1444.4 631.6C1447.1 630.7 1450.3 630.3 1453.2 630.5C1456.0 630.6 1458.9 631.6 1461.4 632.5C1463.9 633.4 1466.5 634.4 1468.3 636.1C1470.1 637.8 1471.2 640.2 1472.1 642.8C1473.0 645.3 1473.5 650.0 1473.8 651.5" fill="none" stroke="#bbb" stroke-width="1.51" stroke-opacity="0.18" stroke-linecap="round"/><path d="M1471.6 649.8C1471.3 651.1 1471.4 655.0 1470.2 657.2C1469.0 659.4 1466.4 661.6 1464.4 663.2C1462.4 664.9 1460.6 666.3 1458.3 667.1C1455.9 668.0 1453.1 668.4 1450.3 668.4C1447.5 668.3 1443.7 667.9 1441.3 666.9C1438.9 665.8 1437.5 663.7 1435.9 662.0C1434.3 660.3 1432.6 658.8 1431.6 656.6C1430.6 654.3 1429.8 651.0 1430.1 648.6C1430.4 646.2 1432.1 644.5 1433.4 642.4C1434.8 640.4 1436.1 637.9 1438.1 636.3C1440.1 634.7 1442.5 633.7 1445.3 632.9C1448.0 632.0 1452.2 631.3 1454.9 631.3C1457.6 631.3 1459.1 631.8 1461.5 632.9C1463.8 634.0 1466.9 636.1 1468.8 638.0C1470.8 639.9 1472.4 641.9 1473.4 644.3C1474.4 646.6 1474.4 650.8 1474.6 652.1" fill="none" stroke="#bbb" stroke-width="0.80" stroke-opacity="0.30" stroke-linecap="round"/></g><text x="1452.2" y="658.5" text-anchor="middle" font-family="DejaVu Sans, Liberation Sans, sans-serif" font-size="20" fill="#fff">Y</text><circle cx="1397.7" cy="690.6" r="19" fill="url(#gX)"/><g filter="url(#soft)"><path d="M1417.7 690.6C1417.4 691.9 1417.2 695.9 1416.2 698.3C1415.2 700.6 1413.6 702.9 1411.8 704.7C1410.0 706.5 1407.7 708.1 1405.4 709.1C1403.0 710.1 1400.3 710.6 1397.7 710.6C1395.1 710.6 1392.4 710.1 1390.0 709.1C1387.7 708.1 1385.4 706.5 1383.6 704.7C1381.8 702.9 1380.2 700.6 1379.2 698.3C1378.2 695.9 1377.7 693.2 1377.7 690.6C1377.7 688.0 1378.2 685.3 1379.2 682.9C1380.2 680.6 1381.8 678.3 1383.6 676.5C1385.4 674.7 1387.7 673.1 1390.0 672.1C1392.4 671.1 1395.1 670.6 1397.7 670.6C1400.3 670.6 1403.0 671.1 1405.4 672.1C1407.7 673.1 1410.0 674.7 1411.8 676.5C1413.6 678.3 1415.2 680.6 1416.2 682.9C1417.2 685.3 1417.4 689.3 1417.7 690.6" fill="none" stroke="#bbb" stroke-width="4.28" stroke-opacity="0.07" stroke-linecap="round"/><path d="M1420.8 691.9C1420.5 693.3 1419.8 698.0 1418.6 700.2C1417.3 702.5 1415.2 703.9 1413.1 705.6C1411.0 707.3 1408.6 709.6 1406.2 710.4C1403.8 711.2 1401.4 710.7 1398.7 710.4C1396.0 710.0 1392.6 709.5 1390.0 708.4C1387.4 707.3 1385.3 705.6 1383.2 703.8C1381.1 702.0 1378.6 700.1 1377.4 697.5C1376.2 694.9 1376.0 691.0 1375.8 688.4C1375.7 685.8 1375.7 684.2 1376.7 682.0C1377.7 679.8 1379.9 676.9 1381.9 675.1C1383.9 673.2 1386.3 671.5 1388.8 670.8C1391.3 670.1 1394.3 670.4 1396.9 670.6C1399.5 670.8 1401.9 671.1 1404.5 672.0C1407.1 672.9 1410.3 674.1 1412.6 676.2C1414.9 678.2 1417.2 681.9 1418.4 684.5C1419.6 687.2 1419.5 690.8 1419.7 692.0" fill="none" stroke="#bbb" stroke-width="1.56" stroke-opacity="0.20" stroke-linecap="round"/><path d="M1416.9 690.3C1416.7 691.5 1416.8 695.1 1415.7 697.5C1414.6 699.9 1412.1 702.8 1410.3 704.6C1408.5 706.5 1407.2 707.6 1404.9 708.7C1402.6 709.7 1398.9 710.8 1396.5 710.8C1394.2 710.9 1392.9 709.9 1390.7 708.9C1388.5 707.9 1385.1 706.5 1383.4 704.9C1381.8 703.4 1381.4 701.6 1380.6 699.4C1379.8 697.2 1378.6 694.4 1378.7 691.9C1378.7 689.3 1380.0 686.6 1381.1 684.2C1382.2 681.8 1383.7 679.2 1385.2 677.3C1386.6 675.4 1387.9 673.7 1389.8 672.5C1391.8 671.3 1394.5 670.1 1397.0 670.1C1399.5 670.0 1402.4 671.2 1404.7 672.3C1407.0 673.3 1409.1 674.7 1410.8 676.3C1412.5 678.0 1414.0 680.2 1414.9 682.4C1415.8 684.5 1416.2 688.1 1416.4 689.3" fill="none" stroke="#bbb" stroke-width="1.03" stroke-opacity="0.25" stroke-linecap="round"/><path d="M1417.4 690.7C1416.9 691.9 1415.5 695.7 1414.4 697.9C1413.3 700.0 1412.5 702.0 1410.6 703.6C1408.7 705.1 1405.2 706.4 1402.9 707.3C1400.6 708.3 1398.9 709.1 1396.8 709.2C1394.6 709.4 1392.2 708.9 1390.0 708.2C1387.8 707.4 1385.1 706.0 1383.5 704.6C1382.0 703.1 1381.7 701.4 1380.9 699.4C1380.1 697.3 1379.1 694.6 1379.0 692.2C1378.9 689.7 1379.3 687.0 1380.2 684.7C1381.1 682.4 1382.5 680.0 1384.4 678.1C1386.2 676.2 1389.0 674.6 1391.3 673.4C1393.6 672.1 1396.0 671.0 1398.2 670.8C1400.3 670.5 1402.0 671.3 1404.2 672.1C1406.3 672.8 1409.2 673.4 1410.9 675.1C1412.7 676.8 1413.9 679.9 1414.7 682.5C1415.5 685.0 1415.7 688.9 1415.8 690.2" fill="none" stroke="#bbb" stroke-width="1.62" stroke-opacity="0.22" stroke-linecap="round"/><path d="M1417.4 690.7C1417.2 692.0 1417.0 696.0 1416.0 698.2C1415.0 700.5 1413.4 702.6 1411.4 704.3C1409.5 706.0 1406.8 707.7 1404.3 708.6C1401.7 709.5 1398.9 709.7 1396.3 709.7C1393.8 709.8 1391.4 709.9 1389.0 708.8C1386.6 707.7 1383.6 705.2 1381.8 703.2C1380.0 701.2 1379.2 699.0 1378.2 696.8C1377.3 694.6 1376.1 692.3 1376.1 689.9C1376.1 687.5 1377.1 684.7 1378.3 682.3C1379.5 679.9 1381.3 677.3 1383.3 675.5C1385.2 673.8 1387.7 672.4 1390.2 671.7C1392.6 671.0 1395.2 671.1 1397.8 671.2C1400.3 671.3 1403.0 671.2 1405.5 672.0C1407.9 672.9 1410.5 674.4 1412.6 676.4C1414.7 678.4 1417.0 681.5 1418.2 684.0C1419.3 686.6 1419.2 690.3 1419.4 691.6" fill="none" stroke="#bbb" stroke-width="1.23" stroke-opacity="0.23" stroke-linecap="round"/></g><text x="1397.7" y="698.9" text-anchor="middle" font-family="DejaVu Sans, Liberation Sans, sans-serif" font-size="20" fill="#fff">X</text><circle cx="1504.5" cy="696.2" r="19" fill="url(#gB)"/><g filter="url(#soft)"><path d="M1524.5 696.2C1524.2 697.5 1524.0 701.5 1523.0 703.9C1522.0 706.2 1520.4 708.5 1518.6 710.3C1516.8 712.1 1514.5 713.7 1512.2 714.7C1509.8 715.7 1507.1 716.2 1504.5 716.2C1501.9 716.2 1499.2 715.7 1496.8 714.7C1494.5 713.7 1492.2 712.1 1490.4 710.3C1488.6 708.5 1487.0 706.2 1486.0 703.9C1485.0 701.5 1484.5 698.8 1484.5 696.2C1484.5 693.6 1485.0 690.9 1486.0 688.5C1487.0 686.2 1488.6 683.9 1490.4 682.1C1492.2 680.3 1494.5 678.7 1496.8 677.7C1499.2 676.7 1501.9 676.2 1504.5 676.2C1507.1 676.2 1509.8 676.7 1512.2 677.7C1514.5 678.7 1516.8 680.3 1518.6 682.1C1520.4 683.9 1522.0 686.2 1523.0 688.5C1524.0 690.9 1524.2 694.9 1524.5 696.2" fill="none" stroke="#bbb" stroke-width="4.28" stroke-opacity="0.07" stroke-linecap="round"/><path d="M1522.5 694.5C1522.4 695.9 1522.5 700.4 1521.8 702.9C1521.0 705.3 1519.6 707.2 1517.8 709.0C1516.1 710.9 1513.5 712.7 1511.3 713.9C1509.0 715.1 1506.7 715.8 1504.3 716.1C1502.0 716.3 1499.1 716.2 1497.0 715.5C1494.9 714.9 1493.0 713.6 1491.5 711.9C1490.0 710.3 1489.0 708.0 1487.9 705.6C1486.9 703.2 1485.2 700.1 1485.1 697.5C1485.0 694.9 1486.2 692.6 1487.3 690.2C1488.4 687.8 1489.8 685.0 1491.7 683.1C1493.5 681.1 1496.2 679.5 1498.4 678.5C1500.5 677.6 1502.1 677.3 1504.4 677.1C1506.8 676.9 1510.4 676.7 1512.6 677.3C1514.9 678.0 1516.3 679.3 1517.9 681.1C1519.6 683.0 1521.7 685.8 1522.5 688.3C1523.3 690.7 1522.8 694.5 1522.9 695.7" fill="none" stroke="#bbb" stroke-width="1.11" stroke-opacity="0.17" stroke-linecap="round"/><path d="M1524.1 694.8C1524.0 696.3 1524.2 701.0 1523.1 703.5C1522.1 706.0 1519.5 707.6 1517.8 709.6C1516.1 711.6 1515.0 714.3 1513.0 715.5C1511.1 716.8 1508.8 716.8 1506.2 716.9C1503.7 716.9 1500.0 716.6 1497.7 715.8C1495.4 715.1 1494.1 714.2 1492.5 712.4C1491.0 710.7 1489.3 707.9 1488.4 705.4C1487.5 703.0 1487.3 700.5 1487.1 697.9C1486.8 695.2 1486.3 692.2 1487.0 689.5C1487.6 686.9 1489.6 683.9 1491.2 682.1C1492.8 680.3 1494.4 679.6 1496.6 678.6C1498.9 677.6 1502.1 676.6 1504.6 676.3C1507.0 676.0 1508.9 676.0 1511.1 676.9C1513.2 677.7 1515.6 679.8 1517.3 681.5C1519.0 683.1 1520.3 684.4 1521.3 686.6C1522.2 688.9 1522.7 693.6 1523.0 695.0" fill="none" stroke="#bbb" stroke-width="1.30" stroke-opacity="0.27" stroke-linecap="round"/><path d="M1521.6 695.4C1521.4 696.7 1521.1 700.8 1520.4 703.0C1519.6 705.2 1518.4 706.9 1517.0 708.7C1515.7 710.6 1514.2 713.0 1512.2 714.3C1510.2 715.7 1507.3 716.7 1504.9 716.9C1502.6 717.1 1500.5 716.7 1498.3 715.8C1496.1 714.9 1493.4 713.3 1491.8 711.6C1490.2 709.9 1489.5 707.9 1488.7 705.5C1487.9 703.0 1487.4 699.5 1487.2 696.9C1487.0 694.4 1486.9 692.5 1487.5 690.1C1488.2 687.7 1489.7 684.7 1491.1 682.6C1492.5 680.6 1493.9 679.2 1495.9 678.0C1497.9 676.8 1500.8 675.6 1503.0 675.2C1505.3 674.8 1507.2 674.5 1509.4 675.4C1511.7 676.3 1514.6 678.7 1516.6 680.6C1518.7 682.5 1520.7 684.3 1521.9 686.9C1523.1 689.5 1523.5 694.6 1523.8 696.1" fill="none" stroke="#bbb" stroke-width="1.02" stroke-opacity="0.24" stroke-linecap="round"/><path d="M1522.9 696.0C1522.6 697.1 1522.0 700.0 1521.1 702.4C1520.3 704.7 1519.4 708.0 1517.8 710.0C1516.2 712.0 1513.8 713.7 1511.6 714.6C1509.5 715.6 1507.1 715.7 1504.7 715.7C1502.2 715.6 1499.3 715.2 1496.8 714.2C1494.4 713.3 1491.7 711.6 1490.1 710.0C1488.5 708.4 1488.1 706.8 1487.4 704.5C1486.6 702.3 1485.4 699.1 1485.5 696.5C1485.5 693.9 1486.6 691.0 1487.7 688.8C1488.7 686.7 1490.2 685.4 1491.8 683.6C1493.4 681.8 1495.2 679.5 1497.4 678.2C1499.6 677.0 1502.6 676.2 1505.0 676.1C1507.4 676.0 1509.9 676.8 1512.0 677.6C1514.1 678.5 1516.0 679.6 1517.6 681.2C1519.2 682.7 1520.8 684.6 1521.6 686.9C1522.5 689.1 1522.5 693.5 1522.7 694.8" fill="none" stroke="#bbb" stroke-width="1.39" stroke-opacity="0.24" stroke-linecap="round"/></g><text x="1504.5" y="704.5" text-anchor="middle" font-family="DejaVu Sans, Liberation Sans, sans-serif" font-size="20" fill="#fff">B</text><circle cx="1454" cy="733.9" r="19" fill="url(#gA)"/><g filter="url(#soft)"><path d="M1474.0 733.9C1473.7 735.2 1473.5 739.2 1472.5 741.6C1471.5 743.9 1469.9 746.2 1468.1 748.0C1466.3 749.8 1464.0 751.4 1461.7 752.4C1459.3 753.4 1456.6 753.9 1454.0 753.9C1451.4 753.9 1448.7 753.4 1446.3 752.4C1444.0 751.4 1441.7 749.8 1439.9 748.0C1438.1 746.2 1436.5 743.9 1435.5 741.6C1434.5 739.2 1434.0 736.5 1434.0 733.9C1434.0 731.3 1434.5 728.6 1435.5 726.2C1436.5 723.9 1438.1 721.6 1439.9 719.8C1441.7 718.0 1444.0 716.4 1446.3 715.4C1448.7 714.4 1451.4 713.9 1454.0 713.9C1456.6 713.9 1459.3 714.4 1461.7 715.4C1464.0 716.4 1466.3 718.0 1468.1 719.8C1469.9 721.6 1471.5 723.9 1472.5 726.2C1473.5 728.6 1473.7 732.6 1474.0 733.9" fill="none" stroke="#bbb" stroke-width="4.28" stroke-opacity="0.07" stroke-linecap="round"/><path d="M1472.8 732.5C1472.4 733.8 1471.7 737.8 1470.8 740.2C1469.9 742.6 1468.9 744.8 1467.3 746.9C1465.8 749.0 1463.6 751.7 1461.6 752.8C1459.5 753.9 1457.4 753.6 1455.0 753.6C1452.7 753.6 1449.6 753.6 1447.4 752.7C1445.3 751.8 1443.9 750.2 1442.1 748.4C1440.3 746.7 1437.7 744.4 1436.8 742.1C1435.8 739.8 1436.0 737.0 1436.2 734.6C1436.4 732.2 1436.9 729.8 1437.9 727.6C1438.9 725.5 1440.4 723.7 1442.1 721.9C1443.8 720.1 1445.8 717.9 1448.2 716.7C1450.5 715.5 1453.6 714.9 1456.1 714.7C1458.5 714.5 1460.8 714.7 1462.8 715.6C1464.7 716.6 1466.1 718.6 1467.7 720.2C1469.2 721.8 1471.4 723.3 1472.2 725.4C1473.0 727.6 1472.6 731.8 1472.7 733.0" fill="none" stroke="#bbb" stroke-width="1.07" stroke-opacity="0.25" stroke-linecap="round"/><path d="M1472.2 731.9C1471.9 733.2 1471.3 737.2 1470.2 739.8C1469.1 742.4 1467.1 745.3 1465.6 747.4C1464.0 749.5 1462.7 751.3 1460.8 752.4C1459.0 753.5 1456.8 753.9 1454.6 754.0C1452.3 754.1 1449.6 753.7 1447.5 752.8C1445.4 752.0 1443.6 750.5 1442.0 748.8C1440.3 747.1 1438.7 744.6 1437.6 742.4C1436.5 740.2 1435.6 738.5 1435.3 735.9C1435.1 733.3 1435.4 729.6 1436.1 726.7C1436.7 723.9 1437.7 720.8 1439.3 718.7C1440.9 716.5 1443.4 715.1 1445.6 714.0C1447.7 713.0 1449.7 712.3 1452.1 712.4C1454.5 712.4 1457.6 713.3 1460.0 714.4C1462.3 715.5 1464.2 716.8 1466.1 718.7C1468.1 720.7 1470.0 723.5 1471.5 726.2C1472.9 728.8 1474.0 733.3 1474.6 734.7" fill="none" stroke="#bbb" stroke-width="1.48" stroke-opacity="0.26" stroke-linecap="round"/><path d="M1475.1 735.5C1474.7 736.5 1474.1 739.8 1472.9 741.8C1471.6 743.8 1469.9 746.1 1467.7 747.6C1465.4 749.1 1462.2 749.9 1459.5 750.7C1456.8 751.6 1453.9 752.8 1451.4 752.8C1448.8 752.8 1446.3 751.5 1444.2 750.7C1442.1 749.8 1440.2 749.3 1438.7 747.8C1437.2 746.2 1435.5 743.3 1435.0 741.2C1434.5 739.0 1435.3 737.3 1435.6 735.1C1436.0 732.8 1436.3 729.9 1437.3 727.5C1438.2 725.0 1439.4 722.5 1441.2 720.5C1443.1 718.5 1446.2 716.6 1448.3 715.6C1450.4 714.6 1451.7 714.4 1453.7 714.4C1455.7 714.3 1458.5 714.5 1460.5 715.2C1462.5 716.0 1464.3 717.3 1465.9 718.8C1467.4 720.4 1468.9 722.1 1469.8 724.5C1470.8 726.9 1471.4 732.0 1471.7 733.5" fill="none" stroke="#bbb" stroke-width="1.26" stroke-opacity="0.26" stroke-linecap="round"/><path d="M1473.9 733.4C1473.8 735.0 1474.2 740.7 1473.6 743.3C1473.1 745.8 1472.2 747.0 1470.7 748.8C1469.1 750.6 1466.7 752.9 1464.3 754.0C1461.9 755.2 1459.2 755.8 1456.3 755.7C1453.4 755.6 1449.7 754.6 1446.9 753.4C1444.1 752.2 1441.6 750.5 1439.5 748.4C1437.4 746.3 1435.4 743.5 1434.3 740.8C1433.1 738.1 1432.5 735.0 1432.4 732.2C1432.2 729.4 1432.4 726.3 1433.2 724.1C1434.0 721.9 1435.4 720.6 1437.4 719.0C1439.4 717.4 1442.5 715.4 1445.1 714.4C1447.7 713.4 1450.2 712.7 1453.1 713.0C1456.0 713.3 1459.7 714.7 1462.4 716.1C1465.0 717.5 1466.9 719.5 1469.0 721.4C1471.0 723.2 1473.4 724.8 1474.6 727.1C1475.7 729.3 1475.8 733.4 1476.0 734.7" fill="none" stroke="#bbb" stroke-width="1.26" stroke-opacity="0.31" stroke-linecap="round"/></g><text x="1454" y="742.1999999999999" text-anchor="middle" font-family="DejaVu Sans, Liberation Sans, sans-serif" font-size="20" fill="#fff">A</text><defs><filter id="bl2" x="-50%" y="-100%" width="200%" height="300%"><feGaussianBlur stdDeviation="2.8"/></filter><filter id="bl3" x="-50%" y="-100%" width="200%" height="300%"><feGaussianBlur stdDeviation="4"/></filter></defs><clipPath id="cppk"><path d="M926.0 588.5C927.8 585.9 932.1 578.0 936.6 572.8C941.1 567.6 947.4 561.6 953.3 557.2C959.2 552.9 965.4 549.5 972.2 546.7C979.1 543.9 987.0 542.0 994.4 540.5C1001.8 539.0 1009.2 538.2 1016.6 537.8C1024.0 537.4 1032.3 537.6 1038.8 538.3C1045.3 538.9 1051.0 540.4 1055.5 541.7C1060.0 543.0 1062.7 543.2 1065.5 546.1C1068.3 549.0 1071.0 557.2 1072.1 559.4 L1055.5 568.9C1054.4 567.7 1052.5 563.0 1048.8 561.6C1045.1 560.2 1039.6 560.5 1033.3 560.5C1027.0 560.5 1018.4 560.8 1011.0 561.6C1003.6 562.4 996.2 563.6 988.8 565.5C981.4 567.4 974.0 570.1 966.6 572.8C959.2 575.5 951.2 578.9 944.4 581.6C937.6 584.3 929.1 587.7 926.0 588.9Z"/></clipPath><path d="M926.0 588.5C927.8 585.9 932.1 578.0 936.6 572.8C941.1 567.6 947.4 561.6 953.3 557.2C959.2 552.9 965.4 549.5 972.2 546.7C979.1 543.9 987.0 542.0 994.4 540.5C1001.8 539.0 1009.2 538.2 1016.6 537.8C1024.0 537.4 1032.3 537.6 1038.8 538.3C1045.3 538.9 1051.0 540.4 1055.5 541.7C1060.0 543.0 1062.7 543.2 1065.5 546.1C1068.3 549.0 1071.0 557.2 1072.1 559.4 L1055.5 568.9C1054.4 567.7 1052.5 563.0 1048.8 561.6C1045.1 560.2 1039.6 560.5 1033.3 560.5C1027.0 560.5 1018.4 560.8 1011.0 561.6C1003.6 562.4 996.2 563.6 988.8 565.5C981.4 567.4 974.0 570.1 966.6 572.8C959.2 575.5 951.2 578.9 944.4 581.6C937.6 584.3 929.1 587.7 926.0 588.9Z" fill="#f272c4"/><g clip-path="url(#cppk)"><path d="M953.3 557.2C956.4 555.5 965.4 549.5 972.2 546.7C979.1 543.9 987.0 542.0 994.4 540.5C1001.8 539.0 1009.2 538.2 1016.6 537.8C1024.0 537.4 1032.3 537.6 1038.8 538.3C1045.3 538.9 1051.0 540.4 1055.5 541.7C1060.0 543.0 1062.7 543.2 1065.5 546.1C1068.3 549.0 1071.0 557.2 1072.1 559.4" fill="none" stroke="#b04494" stroke-width="29.700000000000003" filter="url(#bl3)" opacity="0.95" stroke-linecap="round"/><path d="M953.3 557.2C956.4 555.5 965.4 549.5 972.2 546.7C979.1 543.9 987.0 542.0 994.4 540.5C1001.8 539.0 1009.2 538.2 1016.6 537.8C1024.0 537.4 1032.3 537.6 1038.8 538.3C1045.3 538.9 1051.0 540.4 1055.5 541.7C1060.0 543.0 1062.7 543.2 1065.5 546.1C1068.3 549.0 1071.0 557.2 1072.1 559.4" fill="none" stroke="#2a0824" stroke-width="13.75" filter="url(#bl2)" stroke-linecap="round"/><path d="M1048.8 555.5 L1065.5 548.9 L1072.1 559.4 L1055.5 568.9 L1048.8 561.6Z" fill="#f064bc" opacity="0.85"/></g><clipPath id="cprd"><path d="M914.4 608.8C916.6 606.5 922.8 599.1 927.8 595.0C932.8 590.9 937.9 587.4 944.4 583.9C950.9 580.4 959.2 576.8 966.6 573.9C974.0 571.0 981.4 568.5 988.8 566.6C996.2 564.8 1003.6 563.6 1011.0 562.8C1018.4 562.0 1027.0 561.6 1033.3 561.6C1039.6 561.6 1045.8 561.9 1048.8 562.8C1051.8 563.7 1050.5 565.2 1051.0 567.2C1051.5 569.2 1051.9 573.7 1052.1 575.0 L1033.3 588.3C1029.6 588.1 1018.4 586.8 1011.0 587.2C1003.6 587.6 996.2 589.0 988.8 590.5C981.4 592.0 974.0 594.2 966.6 596.1C959.2 598.0 950.9 599.9 944.4 601.6C937.9 603.3 932.8 604.8 927.8 606.1C922.8 607.4 916.6 608.7 914.4 609.2Z"/></clipPath><path d="M914.4 608.8C916.6 606.5 922.8 599.1 927.8 595.0C932.8 590.9 937.9 587.4 944.4 583.9C950.9 580.4 959.2 576.8 966.6 573.9C974.0 571.0 981.4 568.5 988.8 566.6C996.2 564.8 1003.6 563.6 1011.0 562.8C1018.4 562.0 1027.0 561.6 1033.3 561.6C1039.6 561.6 1045.8 561.9 1048.8 562.8C1051.8 563.7 1050.5 565.2 1051.0 567.2C1051.5 569.2 1051.9 573.7 1052.1 575.0 L1033.3 588.3C1029.6 588.1 1018.4 586.8 1011.0 587.2C1003.6 587.6 996.2 589.0 988.8 590.5C981.4 592.0 974.0 594.2 966.6 596.1C959.2 598.0 950.9 599.9 944.4 601.6C937.9 603.3 932.8 604.8 927.8 606.1C922.8 607.4 916.6 608.7 914.4 609.2Z" fill="#ee6870"/><g clip-path="url(#cprd)"><path d="M966.6 573.9C970.3 572.7 981.4 568.5 988.8 566.6C996.2 564.8 1003.6 563.6 1011.0 562.8C1018.4 562.0 1027.0 561.6 1033.3 561.6C1039.6 561.6 1045.8 561.9 1048.8 562.8C1051.8 563.7 1050.5 565.2 1051.0 567.2C1051.5 569.2 1051.9 573.7 1052.1 575.0" fill="none" stroke="#9a3038" stroke-width="32.400000000000006" filter="url(#bl3)" opacity="0.95" stroke-linecap="round"/><path d="M966.6 573.9C970.3 572.7 981.4 568.5 988.8 566.6C996.2 564.8 1003.6 563.6 1011.0 562.8C1018.4 562.0 1027.0 561.6 1033.3 561.6C1039.6 561.6 1045.8 561.9 1048.8 562.8C1051.8 563.7 1050.5 565.2 1051.0 567.2C1051.5 569.2 1051.9 573.7 1052.1 575.0" fill="none" stroke="#1c0406" stroke-width="15.0" filter="url(#bl2)" stroke-linecap="round"/><path d="M1029.9 573.9 L1048.8 566.1 L1052.1 575 L1033.3 588.3Z" fill="#7a2a30" opacity="0.85"/></g><path d="M1371.1 547.8C1375.0 547.3 1386.8 545.8 1394.4 545.0C1402.0 544.2 1409.2 543.5 1416.6 543.3C1424.0 543.1 1431.4 543.1 1438.8 543.9C1446.2 544.7 1454.5 546.5 1461.0 548.3C1467.5 550.0 1472.5 551.9 1477.7 554.4C1482.9 556.9 1488.6 560.3 1492.1 563.3C1495.6 566.3 1497.1 568.6 1498.8 572.2C1500.5 575.8 1501.5 582.9 1502.1 585.0 L1494.4 581.1C1491.6 580.4 1483.3 577.9 1477.7 576.6C1472.1 575.3 1467.5 574.3 1461.0 573.3C1454.5 572.3 1446.2 571.1 1438.8 570.5C1431.4 569.9 1423.1 569.4 1416.6 569.4C1410.1 569.4 1404.8 569.9 1400.0 570.5C1395.2 571.1 1393.5 573.4 1387.8 572.8C1382.0 572.1 1369.2 567.6 1365.5 566.6 L1368.3 552.2 Z" fill="none"/><clipPath id="cpgr"><path d="M1368.3 552.2C1368.8 551.5 1366.8 549.0 1371.1 547.8C1375.4 546.6 1386.8 545.8 1394.4 545.0C1402.0 544.2 1409.2 543.5 1416.6 543.3C1424.0 543.1 1431.4 543.1 1438.8 543.9C1446.2 544.7 1454.5 546.5 1461.0 548.3C1467.5 550.0 1472.5 551.9 1477.7 554.4C1482.9 556.9 1488.6 560.3 1492.1 563.3C1495.6 566.3 1497.1 568.6 1498.8 572.2C1500.5 575.8 1501.5 582.9 1502.1 585.0 L1494.4 581.1C1491.6 580.4 1483.3 577.9 1477.7 576.6C1472.1 575.3 1467.5 574.3 1461.0 573.3C1454.5 572.3 1446.2 571.1 1438.8 570.5C1431.4 569.9 1423.1 569.4 1416.6 569.4C1410.1 569.4 1404.8 569.9 1400.0 570.5C1395.2 571.1 1393.5 573.4 1387.8 572.8C1382.0 572.1 1369.2 567.6 1365.5 566.6Z"/></clipPath><path d="M1368.3 552.2C1368.8 551.5 1366.8 549.0 1371.1 547.8C1375.4 546.6 1386.8 545.8 1394.4 545.0C1402.0 544.2 1409.2 543.5 1416.6 543.3C1424.0 543.1 1431.4 543.1 1438.8 543.9C1446.2 544.7 1454.5 546.5 1461.0 548.3C1467.5 550.0 1472.5 551.9 1477.7 554.4C1482.9 556.9 1488.6 560.3 1492.1 563.3C1495.6 566.3 1497.1 568.6 1498.8 572.2C1500.5 575.8 1501.5 582.9 1502.1 585.0 L1494.4 581.1C1491.6 580.4 1483.3 577.9 1477.7 576.6C1472.1 575.3 1467.5 574.3 1461.0 573.3C1454.5 572.3 1446.2 571.1 1438.8 570.5C1431.4 569.9 1423.1 569.4 1416.6 569.4C1410.1 569.4 1404.8 569.9 1400.0 570.5C1395.2 571.1 1393.5 573.4 1387.8 572.8C1382.0 572.1 1369.2 567.6 1365.5 566.6Z" fill="#3ae02a"/><g clip-path="url(#cpgr)"><path d="M1368.3 552.2C1368.8 551.5 1366.8 549.0 1371.1 547.8C1375.4 546.6 1386.8 545.8 1394.4 545.0C1402.0 544.2 1409.2 543.5 1416.6 543.3C1424.0 543.1 1431.4 543.1 1438.8 543.9C1446.2 544.7 1454.5 546.5 1461.0 548.3C1467.5 550.0 1472.5 551.9 1477.7 554.4C1482.9 556.9 1488.6 560.3 1492.1 563.3C1495.6 566.3 1497.7 570.7 1498.8 572.2" fill="none" stroke="#1c9c1c" stroke-width="29.700000000000003" filter="url(#bl3)" opacity="0.95" stroke-linecap="round"/><path d="M1368.3 552.2C1368.8 551.5 1366.8 549.0 1371.1 547.8C1375.4 546.6 1386.8 545.8 1394.4 545.0C1402.0 544.2 1409.2 543.5 1416.6 543.3C1424.0 543.1 1431.4 543.1 1438.8 543.9C1446.2 544.7 1454.5 546.5 1461.0 548.3C1467.5 550.0 1472.5 551.9 1477.7 554.4C1482.9 556.9 1488.6 560.3 1492.1 563.3C1495.6 566.3 1497.7 570.7 1498.8 572.2" fill="none" stroke="#063c06" stroke-width="13.75" filter="url(#bl2)" stroke-linecap="round"/><path d="M1368.3 551.1 L1373.9 547.8 L1392.2 557.8 L1388.9 572.2 L1365.5 566.6Z" fill="#2cc82c" opacity="0.85"/></g><clipPath id="cpcy"><path d="M1400.5 573.3C1403.2 573.2 1410.2 572.8 1416.6 572.8C1423.0 572.8 1431.4 572.8 1438.8 573.3C1446.2 573.8 1453.6 574.3 1461.0 575.5C1468.4 576.7 1476.5 578.8 1483.3 580.5C1490.1 582.2 1497.5 583.2 1502.1 585.5C1506.7 587.8 1508.0 591.1 1511.0 594.4C1514.0 597.7 1517.8 602.0 1519.9 605.5C1522.0 609.0 1523.2 613.8 1523.8 615.5 L1516.6 607.7C1514.8 606.2 1510.1 601.3 1505.5 598.9C1500.9 596.5 1494.3 594.7 1488.8 593.3C1483.2 591.9 1477.8 591.0 1472.2 590.5C1466.7 590.0 1461.1 590.2 1455.5 590.5C1449.9 590.8 1445.3 591.3 1438.8 592.2C1432.3 593.1 1423.7 597.0 1416.6 596.1C1409.5 595.2 1399.5 588.2 1396.1 586.6Z"/></clipPath><path d="M1400.5 573.3C1403.2 573.2 1410.2 572.8 1416.6 572.8C1423.0 572.8 1431.4 572.8 1438.8 573.3C1446.2 573.8 1453.6 574.3 1461.0 575.5C1468.4 576.7 1476.5 578.8 1483.3 580.5C1490.1 582.2 1497.5 583.2 1502.1 585.5C1506.7 587.8 1508.0 591.1 1511.0 594.4C1514.0 597.7 1517.8 602.0 1519.9 605.5C1522.0 609.0 1523.2 613.8 1523.8 615.5 L1516.6 607.7C1514.8 606.2 1510.1 601.3 1505.5 598.9C1500.9 596.5 1494.3 594.7 1488.8 593.3C1483.2 591.9 1477.8 591.0 1472.2 590.5C1466.7 590.0 1461.1 590.2 1455.5 590.5C1449.9 590.8 1445.3 591.3 1438.8 592.2C1432.3 593.1 1423.7 597.0 1416.6 596.1C1409.5 595.2 1399.5 588.2 1396.1 586.6Z" fill="#44f2e6"/><g clip-path="url(#cpcy)"><path d="M1400.5 573.3C1403.2 573.2 1410.2 572.8 1416.6 572.8C1423.0 572.8 1431.4 572.8 1438.8 573.3C1446.2 573.8 1453.6 574.3 1461.0 575.5C1468.4 576.7 1476.5 578.8 1483.3 580.5C1490.1 582.2 1497.5 583.2 1502.1 585.5C1506.7 587.8 1509.5 592.9 1511.0 594.4" fill="none" stroke="#22c0b8" stroke-width="21.6" filter="url(#bl3)" opacity="0.95" stroke-linecap="round"/><path d="M1400.5 573.3C1403.2 573.2 1410.2 572.8 1416.6 572.8C1423.0 572.8 1431.4 572.8 1438.8 573.3C1446.2 573.8 1453.6 574.3 1461.0 575.5C1468.4 576.7 1476.5 578.8 1483.3 580.5C1490.1 582.2 1497.5 583.2 1502.1 585.5C1506.7 587.8 1509.5 592.9 1511.0 594.4" fill="none" stroke="#0c6c68" stroke-width="10.0" filter="url(#bl2)" stroke-linecap="round"/><path d="M1400.5 573.3 L1416.6 584.4 L1415.5 596.1 L1396.1 586.6Z" fill="#34e6dc" opacity="0.85"/></g><g filter="url(#soft)"><g filter="url(#rough)"><path d="M926.0 588.5C927.8 585.9 932.1 578.0 936.6 572.8C941.1 567.6 947.4 561.6 953.3 557.2C959.2 552.9 965.4 549.5 972.2 546.7C979.1 543.9 987.0 542.0 994.4 540.5C1001.8 539.0 1009.2 538.2 1016.6 537.8C1024.0 537.4 1032.3 537.6 1038.8 538.3C1045.3 538.9 1051.0 540.4 1055.5 541.7C1060.0 543.0 1062.7 543.2 1065.5 546.1C1068.3 549.0 1071.0 557.2 1072.1 559.4" fill="none" stroke="#e8e8e8" stroke-width="3.57" stroke-opacity="0.08" stroke-linecap="round"/><path d="M924.9 587.5C926.7 585.0 930.8 577.6 935.6 572.7C940.4 567.8 947.2 562.4 953.6 558.2C960.0 554.0 967.1 550.3 974.2 547.6C981.3 544.9 989.0 543.6 996.5 542.2C1003.9 540.9 1011.7 540.0 1018.8 539.4C1026.0 538.8 1033.2 538.2 1039.4 538.6C1045.5 538.9 1051.4 540.4 1055.7 541.5C1060.1 542.6 1062.8 542.5 1065.3 545.3C1067.9 548.0 1070.2 556.0 1071.2 558.2" fill="none" stroke="#e8e8e8" stroke-width="0.73" stroke-opacity="0.36" stroke-linecap="round"/><path d="M924.1 587.9C926.0 585.2 931.2 577.1 936.0 571.9C940.7 566.6 946.5 560.6 952.6 556.3C958.7 552.1 965.3 548.9 972.5 546.3C979.6 543.8 988.0 542.1 995.5 540.8C1003.0 539.4 1009.9 538.3 1017.4 538.1C1024.8 537.9 1033.7 538.7 1040.3 539.5C1046.8 540.3 1052.2 541.8 1056.5 543.0C1060.9 544.1 1063.7 543.8 1066.4 546.5C1069.1 549.3 1071.6 557.2 1072.7 559.3" fill="none" stroke="#e8e8e8" stroke-width="0.82" stroke-opacity="0.28" stroke-linecap="round"/><path d="M924.1 587.4C925.8 584.8 929.8 576.9 934.3 571.6C938.8 566.3 944.9 559.9 951.1 555.6C957.3 551.3 964.0 548.4 971.3 545.9C978.6 543.5 987.0 542.4 994.9 541.1C1002.7 539.8 1010.5 538.6 1018.3 538.3C1026.1 537.9 1035.1 538.2 1041.6 539.0C1048.1 539.7 1052.7 541.3 1057.1 542.7C1061.5 544.1 1065.4 544.4 1068.0 547.3C1070.5 550.1 1071.6 557.6 1072.3 559.6" fill="none" stroke="#e8e8e8" stroke-width="0.64" stroke-opacity="0.21" stroke-linecap="round"/><path d="M1033.3 588.3C1029.6 588.1 1018.4 586.8 1011.0 587.2C1003.6 587.6 996.2 589.0 988.8 590.5C981.4 592.0 974.0 594.2 966.6 596.1C959.2 598.0 950.9 599.9 944.4 601.6C937.9 603.3 932.8 604.8 927.8 606.1C922.8 607.4 916.6 608.7 914.4 609.2" fill="none" stroke="#e8e8e8" stroke-width="3.57" stroke-opacity="0.07" stroke-linecap="round"/><path d="M1034.4 589.3C1030.5 589.1 1019.0 587.8 1011.3 587.9C1003.7 588.1 996.2 589.1 988.5 590.2C980.8 591.3 972.7 593.0 965.1 594.7C957.6 596.5 949.5 599.2 943.0 600.9C936.6 602.5 931.1 603.3 926.3 604.6C921.5 606.0 916.1 608.2 914.1 608.9" fill="none" stroke="#e8e8e8" stroke-width="0.76" stroke-opacity="0.22" stroke-linecap="round"/><path d="M1033.0 589.1C1029.5 588.8 1019.1 587.0 1011.8 587.3C1004.5 587.7 996.7 589.5 989.3 591.1C981.9 592.7 974.9 595.2 967.4 597.0C960.0 598.7 951.2 600.0 944.7 601.7C938.2 603.4 933.2 605.8 928.3 607.1C923.5 608.4 917.7 609.1 915.6 609.5" fill="none" stroke="#e8e8e8" stroke-width="1.34" stroke-opacity="0.24" stroke-linecap="round"/><path d="M1368.3 552.2C1368.8 551.5 1366.8 549.0 1371.1 547.8C1375.4 546.6 1386.8 545.8 1394.4 545.0C1402.0 544.2 1409.2 543.5 1416.6 543.3C1424.0 543.1 1431.4 543.1 1438.8 543.9C1446.2 544.7 1454.5 546.5 1461.0 548.3C1467.5 550.0 1472.5 551.9 1477.7 554.4C1482.9 556.9 1488.6 560.3 1492.1 563.3C1495.6 566.3 1497.1 568.6 1498.8 572.2C1500.5 575.8 1501.5 582.9 1502.1 585.0" fill="none" stroke="#e8e8e8" stroke-width="3.57" stroke-opacity="0.08" stroke-linecap="round"/><path d="M1367.0 550.8C1367.3 550.0 1364.9 547.1 1369.0 545.8C1373.1 544.5 1383.8 543.7 1391.5 543.1C1399.1 542.5 1407.3 542.2 1415.0 542.1C1422.6 542.1 1429.9 542.1 1437.3 543.0C1444.8 543.8 1453.1 545.3 1459.7 547.2C1466.3 549.0 1471.4 551.6 1476.7 554.3C1482.1 556.9 1487.9 560.2 1491.6 563.3C1495.4 566.5 1497.5 569.3 1499.4 573.0C1501.2 576.7 1502.3 583.5 1502.9 585.6" fill="none" stroke="#e8e8e8" stroke-width="1.04" stroke-opacity="0.21" stroke-linecap="round"/><path d="M1370.4 553.4C1370.7 552.6 1367.9 549.8 1372.3 548.6C1376.7 547.5 1389.4 546.9 1397.0 546.3C1404.5 545.7 1410.5 545.5 1417.8 545.2C1425.0 544.9 1432.7 543.8 1440.3 544.6C1447.8 545.4 1456.6 548.1 1462.9 550.0C1469.3 551.9 1473.4 553.7 1478.4 556.0C1483.4 558.3 1489.4 561.0 1493.0 563.7C1496.6 566.4 1498.2 568.6 1499.8 572.1C1501.5 575.7 1502.2 583.0 1502.7 585.2" fill="none" stroke="#e8e8e8" stroke-width="1.29" stroke-opacity="0.32" stroke-linecap="round"/><path d="M1370.0 553.2C1370.5 552.6 1368.7 550.8 1372.9 549.5C1377.2 548.3 1388.1 546.5 1395.6 545.6C1403.1 544.7 1410.9 544.4 1418.1 544.1C1425.3 543.9 1431.7 543.3 1438.7 543.9C1445.7 544.4 1454.0 545.9 1460.0 547.4C1466.1 548.9 1469.9 550.5 1474.9 552.9C1479.9 555.3 1486.2 558.6 1490.0 561.7C1493.8 564.8 1495.8 567.8 1497.7 571.5C1499.6 575.3 1501.0 582.2 1501.7 584.3" fill="none" stroke="#e8e8e8" stroke-width="1.35" stroke-opacity="0.41" stroke-linecap="round"/><path d="M1516.6 607.7C1514.8 606.2 1510.1 601.3 1505.5 598.9C1500.9 596.5 1494.3 594.7 1488.8 593.3C1483.2 591.9 1477.8 591.0 1472.2 590.5C1466.7 590.0 1461.1 590.2 1455.5 590.5C1449.9 590.8 1445.3 591.3 1438.8 592.2C1432.3 593.1 1423.7 597.0 1416.6 596.1C1409.5 595.2 1399.5 588.2 1396.1 586.6" fill="none" stroke="#e8e8e8" stroke-width="3.57" stroke-opacity="0.05" stroke-linecap="round"/><path d="M1517.5 609.1C1515.7 607.6 1511.4 602.4 1506.8 599.9C1502.2 597.3 1495.5 595.4 1489.8 593.9C1484.2 592.3 1478.6 591.0 1473.0 590.5C1467.4 590.0 1462.0 590.6 1456.2 590.8C1450.4 591.1 1445.2 591.5 1438.4 592.2C1431.5 592.9 1422.3 596.2 1415.1 595.1C1407.9 594.0 1398.3 587.1 1395.0 585.5" fill="none" stroke="#e8e8e8" stroke-width="1.06" stroke-opacity="0.18" stroke-linecap="round"/><path d="M1516.3 607.2C1514.4 605.7 1509.4 600.4 1504.7 597.9C1499.9 595.4 1493.5 593.8 1487.9 592.3C1482.3 590.9 1477.0 589.8 1471.3 589.3C1465.6 588.7 1459.3 588.7 1453.7 589.0C1448.1 589.3 1444.0 589.9 1437.6 590.9C1431.2 591.9 1422.1 595.9 1415.0 595.1C1407.9 594.2 1398.4 587.5 1395.1 586.0" fill="none" stroke="#e8e8e8" stroke-width="0.88" stroke-opacity="0.16" stroke-linecap="round"/><path d="M965.3 561.7C969.5 560.2 982.2 554.6 990.6 552.4C998.9 550.2 1007.1 549.1 1015.5 548.6C1023.9 548.1 1036.9 549.3 1041.2 549.4" fill="none" stroke="#ffd8f4" stroke-width="1.02" stroke-opacity="0.26" stroke-linecap="round"/><path d="M966.8 562.3C970.7 560.6 982.3 554.5 990.2 552.0C998.2 549.6 1006.4 548.2 1014.6 547.7C1022.8 547.2 1035.4 548.8 1039.5 549.1" fill="none" stroke="#ffd8f4" stroke-width="0.78" stroke-opacity="0.16" stroke-linecap="round"/><path d="M960.8 585.8C965.1 584.7 978.2 580.6 986.7 578.7C995.2 576.9 1004.4 575.4 1011.8 574.9C1019.2 574.4 1028.0 575.6 1031.2 575.7" fill="none" stroke="#ffd0d0" stroke-width="1.16" stroke-opacity="0.31" stroke-linecap="round"/><path d="M960.5 585.3C964.7 584.1 977.5 580.0 985.8 578.2C994.1 576.3 1002.8 574.8 1010.2 574.1C1017.6 573.5 1026.7 574.3 1030.0 574.3" fill="none" stroke="#ffd0d0" stroke-width="0.71" stroke-opacity="0.20" stroke-linecap="round"/><path d="M991.0 584.4C994.3 583.9 1004.4 582.2 1010.6 581.9C1016.8 581.5 1025.3 582.3 1028.3 582.4" fill="none" stroke="#ffd0d0" stroke-width="1.34" stroke-opacity="0.20" stroke-linecap="round"/><path d="M991.4 585.3C994.8 584.7 1005.3 582.0 1011.6 581.5C1017.8 581.0 1026.1 582.4 1029.0 582.5" fill="none" stroke="#ffd0d0" stroke-width="0.63" stroke-opacity="0.27" stroke-linecap="round"/><path d="M1392.0 556.3C1395.8 555.7 1407.3 552.7 1415.2 552.2C1423.1 551.8 1431.8 553.1 1439.4 553.9C1447.0 554.7 1454.3 555.3 1460.9 557.1C1467.4 558.8 1473.8 561.8 1478.7 564.4C1483.7 567.0 1488.6 571.2 1490.6 572.6" fill="none" stroke="#d8ffd8" stroke-width="0.60" stroke-opacity="0.27" stroke-linecap="round"/><path d="M1391.6 556.4C1395.5 555.8 1407.1 552.9 1415.2 552.5C1423.3 552.2 1432.5 553.1 1440.3 554.1C1448.1 555.0 1455.2 556.4 1461.9 558.3C1468.6 560.2 1475.6 563.0 1480.8 565.6C1485.9 568.1 1490.9 572.3 1493.0 573.7" fill="none" stroke="#d8ffd8" stroke-width="1.08" stroke-opacity="0.21" stroke-linecap="round"/><path d="M1417.1 584.7C1421.0 584.1 1433.1 581.7 1440.5 581.3C1447.9 580.9 1454.4 581.7 1461.6 582.4C1468.8 583.1 1480.2 585.0 1483.9 585.5" fill="none" stroke="#d8ffff" stroke-width="0.95" stroke-opacity="0.16" stroke-linecap="round"/><path d="M1414.9 583.6C1419.1 583.1 1432.0 581.0 1439.9 580.8C1447.8 580.6 1454.7 581.4 1462.2 582.4C1469.7 583.4 1481.2 586.1 1485.0 586.8" fill="none" stroke="#d8ffff" stroke-width="0.89" stroke-opacity="0.19" stroke-linecap="round"/></g></g><text x="1153.5" y="661" font-family="DejaVu Sans, Liberation Sans, sans-serif" font-size="19.8" fill="#8e8e8e">OpenGarages</text><g stroke="#b4b4b4" stroke-width="1" fill="none" shape-rendering="crispEdges"><path d="M824.5 488.5 H987.5 V583"/><path d="M1606 488.5 H1453.5 V583"/><path d="M1556 403.5 H1418.500 V548"/><path d="M1057 771.5 H881.500 V875"/><path d="M1397.500 711 V774.500 H1501.500 V716"/><path d="M1452.500 754 V921.500 H1599"/></g><g id="canlab"><text x="822.5" y="481">Lock</text><text x="822.5" y="512.200">Left Shift</text><text x="1447.500" y="399.600">Accelerate</text><text x="1447.500" y="423.600">(UP Arrow)</text><text x="1606" y="480.800" text-anchor="end" letter-spacing="0.3">Unlock</text><text x="1607" y="510.500" text-anchor="end" letter-spacing="0.22">Right Shift</text><text x="879" y="904.800" text-anchor="middle">Turn</text><text x="879.800" y="928.500" text-anchor="middle">(Left / Right)</text><text x="1602.500" y="918.400" text-anchor="end">Doors</text></g></svg>
</body></html>
